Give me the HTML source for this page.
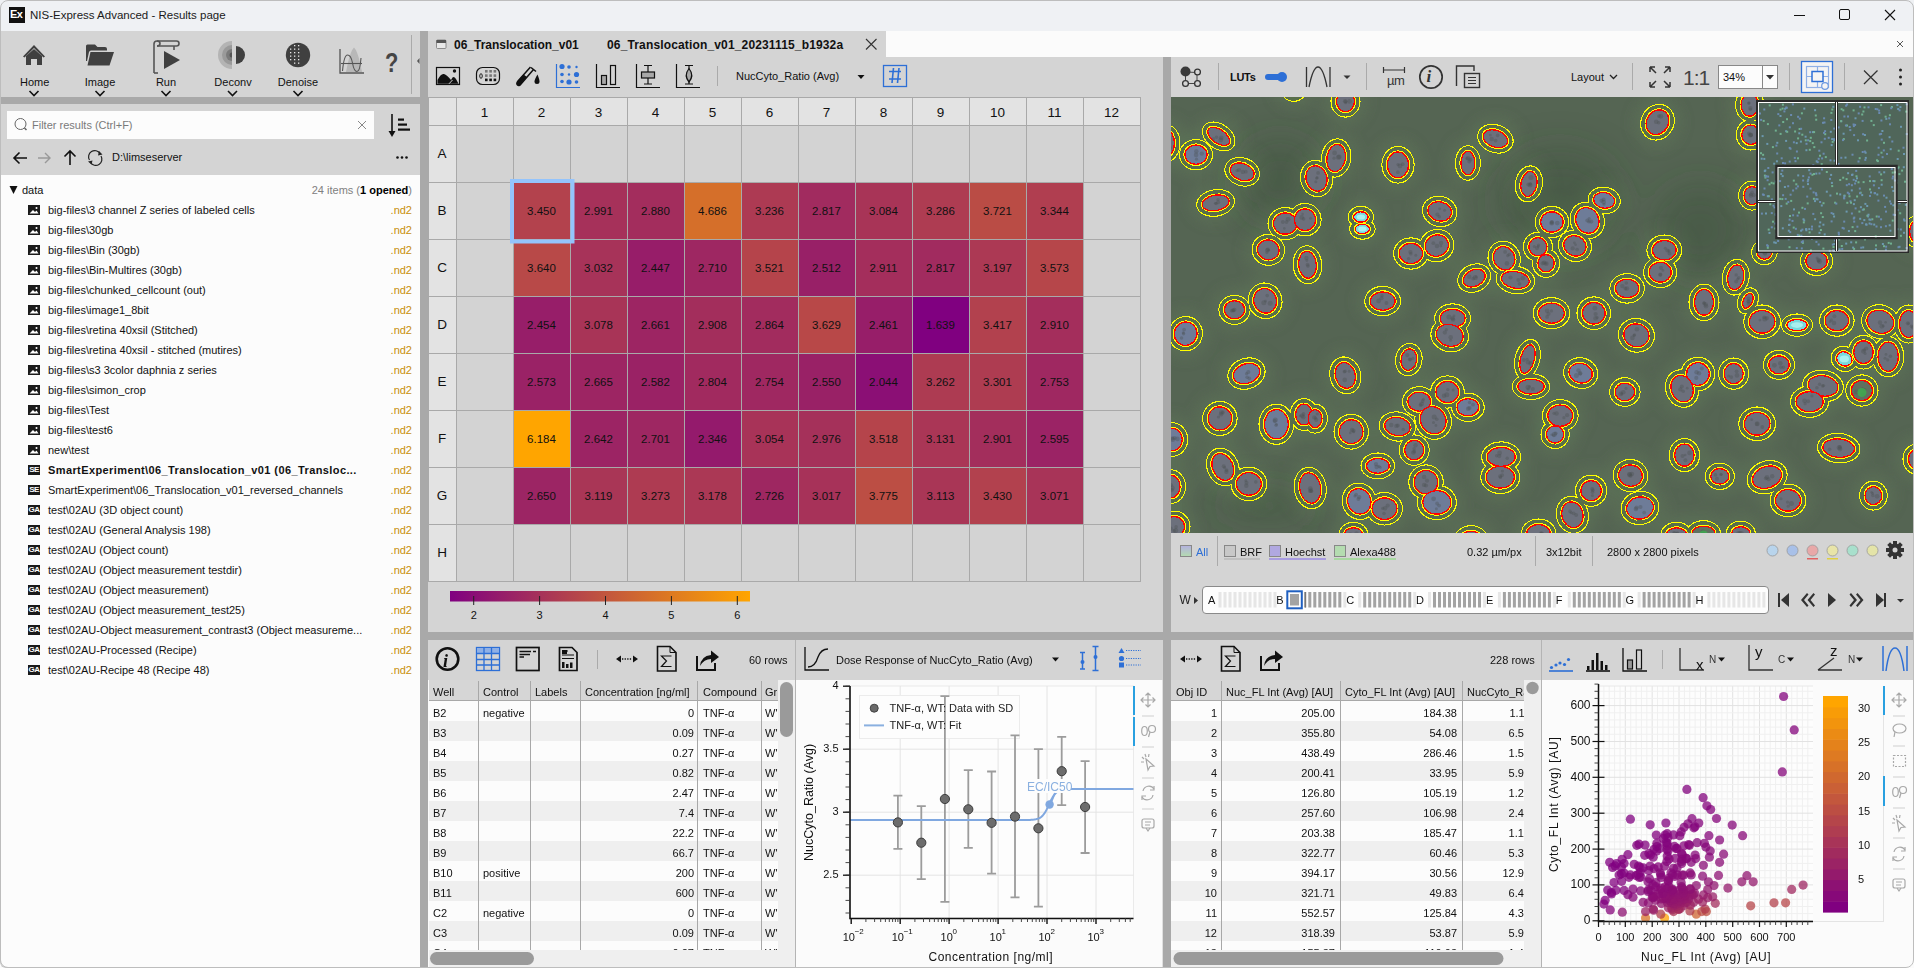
<!DOCTYPE html>
<html><head><meta charset="utf-8">
<style>
*{box-sizing:border-box}
html,body{margin:0;padding:0}
body{width:1914px;height:968px;overflow:hidden;position:relative;background:#fbfbfb;font-family:"Liberation Sans",sans-serif;font-size:11px;color:#000}
.a{position:absolute}
.t{position:absolute;white-space:pre;line-height:1}
.g{background:#d4d4d4}
.spl{background:#a9a9a9}
svg{position:absolute;overflow:visible}
</style></head><body>

<!-- TITLE BAR -->
<div class="a" style="left:0;top:0;width:1914px;height:31px;background:#eff1f4"></div>

<!-- LEFT PANEL -->
<div class="a g" style="left:0;top:31px;width:420px;height:66px"></div>
<div class="a spl" style="left:0;top:97px;width:420px;height:7px"></div>
<div class="a g" style="left:0;top:104px;width:420px;height:71px"></div>
<div class="a" style="left:7px;top:111px;width:367px;height:28px;background:#fcfcfc"></div>
<div class="a" style="left:0;top:175px;width:420px;height:793px;background:#fcfcfc;border-left:1px solid #c8c8c8;border-bottom:1px solid #c8c8c8;border-bottom-left-radius:6px"></div>

<!-- SPLITTERS -->
<div class="a spl" style="left:420px;top:31px;width:8px;height:937px"></div>
<div class="a spl" style="left:1163px;top:57px;width:8px;height:911px"></div>
<div class="a spl" style="left:428px;top:632px;width:1486px;height:8px"></div>

<!-- MIDDLE TOP PANEL -->
<div class="a" style="left:428px;top:31px;width:1486px;height:26px;background:#fbfbfb"></div>
<div class="a g" style="left:428px;top:31px;width:458px;height:26px"></div>
<div class="a g" style="left:428px;top:57px;width:735px;height:575px"></div>

<!-- RIGHT TOP PANEL -->
<div class="a g" style="left:1171px;top:57px;width:743px;height:575px"></div>
<div class="a" style="left:1171px;top:97px;width:742px;height:436px;background:#4a5a48"></div>

<!-- BOTTOM -->
<div class="a g" style="left:428px;top:640px;width:735px;height:40px"></div>
<div class="a g" style="left:1171px;top:640px;width:743px;height:40px"></div>
<div class="a" style="left:428px;top:680px;width:735px;height:288px;background:#fbfbfb"></div>
<div class="a" style="left:1171px;top:680px;width:743px;height:288px;background:#fbfbfb"></div>

<!-- TITLE CONTENT -->
<div class="a" style="left:9px;top:7px;width:16px;height:16px;background:#111"></div>
<div class="t" style="left:10px;top:9px;font-size:11px;font-weight:bold;color:#fff;letter-spacing:-0.5px">Ex</div>
<div class="t" style="left:30px;top:10px;font-size:11.5px;color:#1a1a1a">NIS-Express Advanced - Results page</div>
<svg style="left:0;top:0" width="1914" height="31">
 <line x1="1794" y1="15.5" x2="1805" y2="15.5" stroke="#111" stroke-width="1"/>
 <rect x="1839.5" y="9.5" width="10" height="10" rx="1.5" fill="none" stroke="#111" stroke-width="1"/>
 <path d="M1885 10 L1895 20 M1895 10 L1885 20" stroke="#111" stroke-width="1.1"/>
</svg>
<svg style="left:0;top:0" width="1914" height="60">
 <path d="M1897 41 L1903 47 M1903 41 L1897 47" stroke="#444" stroke-width="0.9"/>
</svg>

<!-- RIBBON ICONS -->
<svg style="left:0;top:31px" width="420" height="66">
 <g fill="#404040">
  <!-- home -->
  <path d="M23 25.5 L34 14 L45 25.5 L43.5 26.5 L34 17 L24.5 26.5 Z"/>
  <path d="M26 25 L34 18 L42 25 L42 34 L37 34 L37 28 L31 28 L31 34 L26 34 Z"/>
  <!-- folder -->
  <path d="M86 15 Q86 13.5 87.5 13.5 L95 13.5 L97.5 16 L105 16 Q107 16 107 18 L107 19.5 L91 19.5 Q89.5 19.5 89 21 L87 30 L86 30 Z"/>
  <path d="M90.5 21 L114 21 L109.5 34.5 L87.5 34.5 Z"/>
 </g>
 <!-- run -->
 <g fill="none" stroke="#555" stroke-width="1.6">
  <path d="M154 42 L154 13 Q154 10 157 10 L176.5 10 Q179 10 179 12.5 Q179 15 176.5 15 L157 15"/>
  <path d="M157 10 Q160 10 160 12.5 Q160 15 157 15"/>
  <path d="M154 42 L158 42"/>
  <path d="M174 15 L174 19"/>
 </g>
 <path d="M164 20 L180 29 L164 38 Z" fill="#404040"/>
 <!-- deconv left concentric -->
 <path d="M232 10 A14 14 0 0 0 232 38 Z" fill="#b4b4b4"/>
 <path d="M232 14 A10 10 0 0 0 232 34 Z" fill="#9a9a9a"/>
 <path d="M232 18 A6 6 0 0 0 232 30 Z" fill="#7a7a7a"/>
 <path d="M232 21.5 A2.5 2.5 0 0 0 232 26.5 Z" fill="#555"/>
 <path d="M236 15 A9 9 0 0 1 236 33 Z" fill="#404040"/>
 <!-- denoise -->
 <circle cx="298" cy="24" r="12.2" fill="#404040"/>
 <g fill="#e8e8e8">
  <rect x="294" y="14" width="1.3" height="1.3"/><rect x="298" y="14" width="1.3" height="1.3"/>
  <rect x="290" y="17.5" width="1.3" height="1.3"/><rect x="294" y="17.5" width="1.3" height="1.3"/><rect x="298" y="17.5" width="1.3" height="1.3"/>
  <rect x="290" y="21" width="1.3" height="1.3"/><rect x="294" y="21" width="1.3" height="1.3"/><rect x="298" y="21" width="1.3" height="1.3"/>
  <rect x="290" y="24.5" width="1.3" height="1.3"/><rect x="294" y="24.5" width="1.3" height="1.3"/><rect x="298" y="24.5" width="1.3" height="1.3"/>
  <rect x="290" y="28" width="1.3" height="1.3"/><rect x="294" y="28" width="1.3" height="1.3"/><rect x="298" y="28" width="1.3" height="1.3"/>
  <rect x="294" y="31.5" width="1.3" height="1.3"/><rect x="298" y="31.5" width="1.3" height="1.3"/>
 </g>
 <!-- chart -->
 <path d="M346 41 Q350 20 354 16.5 Q358 20 362 41 Z" fill="#b8b8b8"/>
 <path d="M340 18 L340 42 L364 42" fill="none" stroke="#555" stroke-width="1.3"/>
 <path d="M341 32.5 L362 32.5" stroke="#555" stroke-width="1.1"/>
 <path d="M342.5 40 Q344 24 347.5 24 Q351 24 352.5 32 Q354 40.5 357 40.5 Q360 40.5 361 27" fill="none" stroke="#555" stroke-width="1.1"/>
 <!-- ? -->
 <text x="385" y="41" font-family="Liberation Sans" font-weight="bold" font-size="28" fill="#454545" transform="translate(385 41) scale(0.78 1) translate(-385 -41)">?</text>
 <line x1="411.5" y1="4" x2="411.5" y2="63" stroke="#aaa" stroke-width="1"/>
 <path d="M419.5 27 L417 30 L419.5 33" fill="#555"/>
 <!-- chevrons -->
 <g fill="none" stroke="#111" stroke-width="1.6">
  <path d="M29.5 60 L34 64.5 L38.5 60"/>
  <path d="M95.5 60 L100 64.5 L104.5 60"/>
  <path d="M161.5 60 L166 64.5 L170.5 60"/>
  <path d="M228 60 L232.5 64.5 L237 60"/>
  <path d="M293.5 60 L298 64.5 L302.5 60"/>
 </g>
</svg>
<div class="t" style="left:20px;top:77px;width:28px;text-align:center;font-size:11px;color:#111">Home</div>
<div class="t" style="left:78px;top:77px;width:44px;text-align:center;font-size:11px;color:#111">Image</div>
<div class="t" style="left:146px;top:77px;width:40px;text-align:center;font-size:11px;color:#111">Run</div>
<div class="t" style="left:208px;top:77px;width:50px;text-align:center;font-size:11px;color:#111">Deconv</div>
<div class="t" style="left:270px;top:77px;width:56px;text-align:center;font-size:11px;color:#111">Denoise</div>

<!-- FILTER -->
<svg style="left:0;top:104px" width="420" height="71">
 <circle cx="20.5" cy="20" r="5.5" fill="none" stroke="#666" stroke-width="1"/>
 <path d="M24.5 24 L26.5 26" stroke="#666" stroke-width="1.6"/>
 <path d="M358 17 L366 25 M366 17 L358 25" stroke="#888" stroke-width="1"/>
 <!-- sort -->
 <path d="M392 10 L392 31" stroke="#111" stroke-width="1.6"/>
 <path d="M388.5 27 L392 33 L395.5 27 Z" fill="#111"/>
 <rect x="398" y="14.5" width="6" height="2.2" fill="#111"/>
 <rect x="398" y="19.5" width="9" height="2.2" fill="#111"/>
 <rect x="398" y="24.5" width="12" height="2.2" fill="#111"/>
 <!-- nav -->
 <g fill="none" stroke="#111" stroke-width="1.6">
  <path d="M27 54 L14 54 M19.5 48.5 L14 54 L19.5 59.5"/>
  <path d="M70 61 L70 47 M64.5 52.5 L70 47 L75.5 52.5"/>
 </g>
 <path d="M38 54 L50 54 M45 49 L50 54 L45 59" fill="none" stroke="#999" stroke-width="1.4"/>
 <g fill="none" stroke="#222" stroke-width="1.2">
  <path d="M89.5 56 A6 6 0 0 1 100 49.5"/>
  <path d="M101 52 A6 6 0 0 1 90.5 58.5"/>
 </g>
 <path d="M99 47 L102.5 50.5 L98 51.5 Z M91.5 60.5 L88 57.5 L92.5 56.5 Z" fill="#222"/>
 <circle cx="397.5" cy="53.5" r="1.3" fill="#111"/><circle cx="402" cy="53.5" r="1.3" fill="#111"/><circle cx="406.5" cy="53.5" r="1.3" fill="#111"/>
</svg>
<div class="t" style="left:32px;top:120px;font-size:11px;color:#7a7a7a">Filter results (Ctrl+F)</div>
<div class="t" style="left:112px;top:152px;font-size:11px;color:#111">D:\limseserver</div>

<!-- LIST -->
<svg style="left:0;top:0" width="420" height="700">
<path d="M9.5 186 L17.5 186 L13.5 194 Z" fill="#111"/>
<rect x="28" y="205" width="12" height="10" fill="#1a1a1a"/>
<path d="M29.5 213.5 L33 210 L35 212 L36.5 210.5 L38.5 213.5 Z" fill="#fff"/>
<circle cx="36.5" cy="208" r="1" fill="#fff"/>
<rect x="28" y="225" width="12" height="10" fill="#1a1a1a"/>
<path d="M29.5 233.5 L33 230 L35 232 L36.5 230.5 L38.5 233.5 Z" fill="#fff"/>
<circle cx="36.5" cy="228" r="1" fill="#fff"/>
<rect x="28" y="245" width="12" height="10" fill="#1a1a1a"/>
<path d="M29.5 253.5 L33 250 L35 252 L36.5 250.5 L38.5 253.5 Z" fill="#fff"/>
<circle cx="36.5" cy="248" r="1" fill="#fff"/>
<rect x="28" y="265" width="12" height="10" fill="#1a1a1a"/>
<path d="M29.5 273.5 L33 270 L35 272 L36.5 270.5 L38.5 273.5 Z" fill="#fff"/>
<circle cx="36.5" cy="268" r="1" fill="#fff"/>
<rect x="28" y="285" width="12" height="10" fill="#1a1a1a"/>
<path d="M29.5 293.5 L33 290 L35 292 L36.5 290.5 L38.5 293.5 Z" fill="#fff"/>
<circle cx="36.5" cy="288" r="1" fill="#fff"/>
<rect x="28" y="305" width="12" height="10" fill="#1a1a1a"/>
<path d="M29.5 313.5 L33 310 L35 312 L36.5 310.5 L38.5 313.5 Z" fill="#fff"/>
<circle cx="36.5" cy="308" r="1" fill="#fff"/>
<rect x="28" y="325" width="12" height="10" fill="#1a1a1a"/>
<path d="M29.5 333.5 L33 330 L35 332 L36.5 330.5 L38.5 333.5 Z" fill="#fff"/>
<circle cx="36.5" cy="328" r="1" fill="#fff"/>
<rect x="28" y="345" width="12" height="10" fill="#1a1a1a"/>
<path d="M29.5 353.5 L33 350 L35 352 L36.5 350.5 L38.5 353.5 Z" fill="#fff"/>
<circle cx="36.5" cy="348" r="1" fill="#fff"/>
<rect x="28" y="365" width="12" height="10" fill="#1a1a1a"/>
<path d="M29.5 373.5 L33 370 L35 372 L36.5 370.5 L38.5 373.5 Z" fill="#fff"/>
<circle cx="36.5" cy="368" r="1" fill="#fff"/>
<rect x="28" y="385" width="12" height="10" fill="#1a1a1a"/>
<path d="M29.5 393.5 L33 390 L35 392 L36.5 390.5 L38.5 393.5 Z" fill="#fff"/>
<circle cx="36.5" cy="388" r="1" fill="#fff"/>
<rect x="28" y="405" width="12" height="10" fill="#1a1a1a"/>
<path d="M29.5 413.5 L33 410 L35 412 L36.5 410.5 L38.5 413.5 Z" fill="#fff"/>
<circle cx="36.5" cy="408" r="1" fill="#fff"/>
<rect x="28" y="425" width="12" height="10" fill="#1a1a1a"/>
<path d="M29.5 433.5 L33 430 L35 432 L36.5 430.5 L38.5 433.5 Z" fill="#fff"/>
<circle cx="36.5" cy="428" r="1" fill="#fff"/>
<rect x="28" y="445" width="12" height="10" fill="#1a1a1a"/>
<path d="M29.5 453.5 L33 450 L35 452 L36.5 450.5 L38.5 453.5 Z" fill="#fff"/>
<circle cx="36.5" cy="448" r="1" fill="#fff"/>
<rect x="28" y="465" width="12" height="10" fill="#1a1a1a"/>
<rect x="28" y="485" width="12" height="10" fill="#1a1a1a"/>
<rect x="28" y="505" width="12" height="10" fill="#1a1a1a"/>
<rect x="28" y="525" width="12" height="10" fill="#1a1a1a"/>
<rect x="28" y="545" width="12" height="10" fill="#1a1a1a"/>
<rect x="28" y="565" width="12" height="10" fill="#1a1a1a"/>
<rect x="28" y="585" width="12" height="10" fill="#1a1a1a"/>
<rect x="28" y="605" width="12" height="10" fill="#1a1a1a"/>
<rect x="28" y="625" width="12" height="10" fill="#1a1a1a"/>
<rect x="28" y="645" width="12" height="10" fill="#1a1a1a"/>
<rect x="28" y="665" width="12" height="10" fill="#1a1a1a"/>
</svg>
<div class="t" style="left:22px;top:185px;font-size:11px;color:#111">data</div>
<div class="t" style="left:250px;top:184.5px;width:162px;text-align:right;font-size:11px;color:#808080">24 items (<b style="color:#000">1 opened</b>)</div>
<div class="t" style="left:48px;top:205px;color:#111">big-files\3 channel Z series of labeled cells</div>
<div class="t" style="left:370px;top:205px;width:42px;text-align:right;color:#c8900a">.nd2</div>
<div class="t" style="left:48px;top:225px;color:#111">big-files\30gb</div>
<div class="t" style="left:370px;top:225px;width:42px;text-align:right;color:#c8900a">.nd2</div>
<div class="t" style="left:48px;top:245px;color:#111">big-files\Bin (30gb)</div>
<div class="t" style="left:370px;top:245px;width:42px;text-align:right;color:#c8900a">.nd2</div>
<div class="t" style="left:48px;top:265px;color:#111">big-files\Bin-Multires (30gb)</div>
<div class="t" style="left:370px;top:265px;width:42px;text-align:right;color:#c8900a">.nd2</div>
<div class="t" style="left:48px;top:285px;color:#111">big-files\chunked_cellcount (out)</div>
<div class="t" style="left:370px;top:285px;width:42px;text-align:right;color:#c8900a">.nd2</div>
<div class="t" style="left:48px;top:305px;color:#111">big-files\image1_8bit</div>
<div class="t" style="left:370px;top:305px;width:42px;text-align:right;color:#c8900a">.nd2</div>
<div class="t" style="left:48px;top:325px;color:#111">big-files\retina 40xsil (Stitched)</div>
<div class="t" style="left:370px;top:325px;width:42px;text-align:right;color:#c8900a">.nd2</div>
<div class="t" style="left:48px;top:345px;color:#111">big-files\retina 40xsil - stitched (mutires)</div>
<div class="t" style="left:370px;top:345px;width:42px;text-align:right;color:#c8900a">.nd2</div>
<div class="t" style="left:48px;top:365px;color:#111">big-files\s3 3color daphnia z series</div>
<div class="t" style="left:370px;top:365px;width:42px;text-align:right;color:#c8900a">.nd2</div>
<div class="t" style="left:48px;top:385px;color:#111">big-files\simon_crop</div>
<div class="t" style="left:370px;top:385px;width:42px;text-align:right;color:#c8900a">.nd2</div>
<div class="t" style="left:48px;top:405px;color:#111">big-files\Test</div>
<div class="t" style="left:370px;top:405px;width:42px;text-align:right;color:#c8900a">.nd2</div>
<div class="t" style="left:48px;top:425px;color:#111">big-files\test6</div>
<div class="t" style="left:370px;top:425px;width:42px;text-align:right;color:#c8900a">.nd2</div>
<div class="t" style="left:48px;top:445px;color:#111">new\test</div>
<div class="t" style="left:370px;top:445px;width:42px;text-align:right;color:#c8900a">.nd2</div>
<div class="t" style="left:28px;top:466px;width:12px;text-align:center;font-size:8px;font-weight:bold;color:#fff;letter-spacing:-0.6px">SE</div>
<div class="t" style="left:48px;top:465px;font-weight:bold;color:#111;letter-spacing:0.4px">SmartExperiment\06_Translocation_v01 (06_Transloc...</div>
<div class="t" style="left:370px;top:465px;width:42px;text-align:right;color:#c8900a">.nd2</div>
<div class="t" style="left:28px;top:486px;width:12px;text-align:center;font-size:8px;font-weight:bold;color:#fff;letter-spacing:-0.6px">SE</div>
<div class="t" style="left:48px;top:485px;color:#111">SmartExperiment\06_Translocation_v01_reversed_channels</div>
<div class="t" style="left:370px;top:485px;width:42px;text-align:right;color:#c8900a">.nd2</div>
<div class="t" style="left:28px;top:506px;width:12px;text-align:center;font-size:8px;font-weight:bold;color:#fff;letter-spacing:-0.6px">GA</div>
<div class="t" style="left:48px;top:505px;color:#111">test\02AU (3D object count)</div>
<div class="t" style="left:370px;top:505px;width:42px;text-align:right;color:#c8900a">.nd2</div>
<div class="t" style="left:28px;top:526px;width:12px;text-align:center;font-size:8px;font-weight:bold;color:#fff;letter-spacing:-0.6px">GA</div>
<div class="t" style="left:48px;top:525px;color:#111">test\02AU (General Analysis 198)</div>
<div class="t" style="left:370px;top:525px;width:42px;text-align:right;color:#c8900a">.nd2</div>
<div class="t" style="left:28px;top:546px;width:12px;text-align:center;font-size:8px;font-weight:bold;color:#fff;letter-spacing:-0.6px">GA</div>
<div class="t" style="left:48px;top:545px;color:#111">test\02AU (Object count)</div>
<div class="t" style="left:370px;top:545px;width:42px;text-align:right;color:#c8900a">.nd2</div>
<div class="t" style="left:28px;top:566px;width:12px;text-align:center;font-size:8px;font-weight:bold;color:#fff;letter-spacing:-0.6px">GA</div>
<div class="t" style="left:48px;top:565px;color:#111">test\02AU (Object measurement testdir)</div>
<div class="t" style="left:370px;top:565px;width:42px;text-align:right;color:#c8900a">.nd2</div>
<div class="t" style="left:28px;top:586px;width:12px;text-align:center;font-size:8px;font-weight:bold;color:#fff;letter-spacing:-0.6px">GA</div>
<div class="t" style="left:48px;top:585px;color:#111">test\02AU (Object measurement)</div>
<div class="t" style="left:370px;top:585px;width:42px;text-align:right;color:#c8900a">.nd2</div>
<div class="t" style="left:28px;top:606px;width:12px;text-align:center;font-size:8px;font-weight:bold;color:#fff;letter-spacing:-0.6px">GA</div>
<div class="t" style="left:48px;top:605px;color:#111">test\02AU (Object measurement_test25)</div>
<div class="t" style="left:370px;top:605px;width:42px;text-align:right;color:#c8900a">.nd2</div>
<div class="t" style="left:28px;top:626px;width:12px;text-align:center;font-size:8px;font-weight:bold;color:#fff;letter-spacing:-0.6px">GA</div>
<div class="t" style="left:48px;top:625px;color:#111">test\02AU-Object measurement_contrast3 (Object measureme...</div>
<div class="t" style="left:370px;top:625px;width:42px;text-align:right;color:#c8900a">.nd2</div>
<div class="t" style="left:28px;top:646px;width:12px;text-align:center;font-size:8px;font-weight:bold;color:#fff;letter-spacing:-0.6px">GA</div>
<div class="t" style="left:48px;top:645px;color:#111">test\02AU-Processed (Recipe)</div>
<div class="t" style="left:370px;top:645px;width:42px;text-align:right;color:#c8900a">.nd2</div>
<div class="t" style="left:28px;top:666px;width:12px;text-align:center;font-size:8px;font-weight:bold;color:#fff;letter-spacing:-0.6px">GA</div>
<div class="t" style="left:48px;top:665px;color:#111">test\02AU-Recipe 48 (Recipe 48)</div>
<div class="t" style="left:370px;top:665px;width:42px;text-align:right;color:#c8900a">.nd2</div>
<!-- PLATE -->
<svg style="left:0;top:0" width="1170" height="100">
 <rect x="436.5" y="40" width="9.5" height="8.5" rx="1" fill="#e8e8e8" stroke="#777" stroke-width="0.8"/>
 <rect x="436.5" y="40" width="9.5" height="3" fill="#555"/>
 <path d="M866 39 L876.5 49.5 M876.5 39 L866 49.5" stroke="#333" stroke-width="1.1"/>
 <!-- toolbar icons -->
 <rect x="436.5" y="67.5" width="23" height="17" fill="none" stroke="#111" stroke-width="1.2"/>
 <path d="M437.5 83.8 L437.5 80 Q441 73 444 74 Q447 75 451 80 L452.5 77.5 Q454 76 456 79 L458.5 83.8 Z" fill="#111"/>
 <path d="M449 83.8 L452.5 80" stroke="#d4d4d4" stroke-width="1"/>
 <circle cx="454.5" cy="71" r="1.7" fill="#111"/>
 <rect x="476.5" y="67.5" width="23" height="17" rx="6" fill="none" stroke="#111" stroke-width="1.2"/>
 <ellipse cx="481" cy="76" rx="1.3" ry="2.3" fill="none" stroke="#111" stroke-width="0.9"/>
 <g fill="#777">
 <rect x="485" y="70" width="2.6" height="2.6"/><rect x="489.3" y="70" width="2.6" height="2.6"/><rect x="493.6" y="70" width="2.6" height="2.6"/>
 <rect x="485" y="74.3" width="2.6" height="2.6"/><rect x="489.3" y="74.3" width="2.6" height="2.6"/><rect x="493.6" y="74.3" width="2.6" height="2.6"/>
 </g>
 <g fill="#111">
 <rect x="485" y="78.6" width="2.6" height="2.6"/><rect x="489.3" y="78.6" width="2.6" height="2.6"/><rect x="493.6" y="78.6" width="2.6" height="2.6"/>
 </g>
 <path d="M531 67.5 L536 71.5" stroke="#111" stroke-width="1.6"/>
 <path d="M533.5 69.5 L521 84 Q519 86.5 517.5 85 Q516 83.5 518 81 L530.5 67" fill="none" stroke="#111" stroke-width="1.5"/>
 <path d="M527 77 L521 84 Q519 86.5 517.5 85 Q516 83.5 518 81 L523.5 74.5 Z" fill="#111"/>
 <path d="M537.5 74.5 Q534.5 79.5 534.5 81.5 Q534.5 84 537 84 Q539.5 84 539.5 81.5 Q539.5 79.5 537.5 74.5 Z" fill="#111"/>
 <g fill="#2d6fd6">
  <circle cx="562" cy="66.5" r="2.6"/><circle cx="569" cy="67" r="1.8"/><circle cx="576.5" cy="67" r="1.2"/>
  <circle cx="562" cy="74.5" r="1.8"/><circle cx="569" cy="74.5" r="1.2"/><circle cx="576.5" cy="74.5" r="2.6"/>
  <circle cx="562" cy="81.5" r="1.8"/><circle cx="569" cy="82" r="2.6"/><circle cx="576.5" cy="82" r="1.8"/>
 </g>
 <path d="M556.5 64 L556.5 87.5 L580 87.5" fill="none" stroke="#2d6fd6" stroke-width="1.2"/>
 <path d="M596.5 64 L596.5 87.5 L620 87.5" fill="none" stroke="#111" stroke-width="1.2"/>
 <rect x="601.5" y="75.5" width="5" height="9" fill="#a8a8a8" stroke="#111" stroke-width="1.2"/>
 <rect x="610.5" y="65.5" width="5" height="19" fill="none" stroke="#111" stroke-width="1.2"/>
 <path d="M636.5 64 L636.5 87.5 L660 87.5" fill="none" stroke="#111" stroke-width="1.2"/>
 <path d="M644 65.5 L652 65.5 M648 65.5 L648 84 M644 84 L652 84" stroke="#111" stroke-width="1.2"/>
 <rect x="641.5" y="72" width="13" height="6" fill="#a8a8a8" stroke="#111" stroke-width="1.2"/>
 <path d="M676.5 64 L676.5 87.5 L700 87.5" fill="none" stroke="#111" stroke-width="1.2"/>
 <path d="M685 65.5 L693 65.5 M685 84 L693 84 M689 65.5 L689 84" stroke="#111" stroke-width="1.2"/>
 <path d="M689 68.5 Q683.5 75.5 689 82 Q694.5 75.5 689 68.5 Z" fill="#a8a8a8" stroke="#111" stroke-width="1.2"/>
 <line x1="717.5" y1="66" x2="717.5" y2="86" stroke="#aaa"/>
 <path d="M857.5 75 L864.5 75 L861 79 Z" fill="#111"/>
 <rect x="883.5" y="65.5" width="23" height="21" fill="none" stroke="#2d6fd6" stroke-width="1.3"/>
 <path d="M889 71.5 L901 71.5 M889 79 L901 79 M893.5 68 L892 83 M899 68 L897.5 83" stroke="#2d6fd6" stroke-width="1.6"/>
</svg>
<div class="t" style="left:454px;top:39px;font-size:12px;font-weight:bold;color:#111">06_Translocation_v01</div>
<div class="t" style="left:607px;top:39px;font-size:12px;font-weight:bold;color:#111;letter-spacing:0.15px">06_Translocation_v01_20231115_b1932a</div>
<div class="t" style="left:736px;top:71px;font-size:11px;color:#111">NucCyto_Ratio (Avg)</div>

<svg style="left:0;top:0" width="1170" height="640">
<rect x="428" y="97" width="712" height="28" fill="#e3e3e3"/>
<rect x="428" y="97" width="28" height="484" fill="#e3e3e3"/>
<rect x="456" y="125" width="684" height="456" fill="#d3d3d3"/>
<rect x="513" y="182" width="57" height="57" fill="#b3424d"/>
<rect x="570" y="182" width="57" height="57" fill="#a6315a"/>
<rect x="627" y="182" width="57" height="57" fill="#a32d5d"/>
<rect x="684" y="182" width="57" height="57" fill="#d56f2a"/>
<rect x="741" y="182" width="57" height="57" fill="#ad3a53"/>
<rect x="798" y="182" width="57" height="57" fill="#a12b5f"/>
<rect x="855" y="182" width="57" height="57" fill="#a83457"/>
<rect x="912" y="182" width="57" height="57" fill="#ae3c52"/>
<rect x="969" y="182" width="57" height="57" fill="#ba4c45"/>
<rect x="1026" y="182" width="57" height="57" fill="#b03e50"/>
<rect x="513" y="239" width="57" height="57" fill="#b84948"/>
<rect x="570" y="239" width="57" height="57" fill="#a73359"/>
<rect x="627" y="239" width="57" height="57" fill="#971d69"/>
<rect x="684" y="239" width="57" height="57" fill="#9e2762"/>
<rect x="741" y="239" width="57" height="57" fill="#b5444b"/>
<rect x="798" y="239" width="57" height="57" fill="#982067"/>
<rect x="855" y="239" width="57" height="57" fill="#a42e5c"/>
<rect x="912" y="239" width="57" height="57" fill="#a12b5f"/>
<rect x="969" y="239" width="57" height="57" fill="#ac3954"/>
<rect x="1026" y="239" width="57" height="57" fill="#b6464a"/>
<rect x="513" y="296" width="57" height="57" fill="#971e69"/>
<rect x="570" y="296" width="57" height="57" fill="#a83457"/>
<rect x="627" y="296" width="57" height="57" fill="#9d2563"/>
<rect x="684" y="296" width="57" height="57" fill="#a32e5c"/>
<rect x="741" y="296" width="57" height="57" fill="#a22c5e"/>
<rect x="798" y="296" width="57" height="57" fill="#b84848"/>
<rect x="855" y="296" width="57" height="57" fill="#971e69"/>
<rect x="912" y="296" width="57" height="57" fill="#800080"/>
<rect x="969" y="296" width="57" height="57" fill="#b2414e"/>
<rect x="1026" y="296" width="57" height="57" fill="#a42e5c"/>
<rect x="513" y="353" width="57" height="57" fill="#9a2266"/>
<rect x="570" y="353" width="57" height="57" fill="#9d2563"/>
<rect x="627" y="353" width="57" height="57" fill="#9a2265"/>
<rect x="684" y="353" width="57" height="57" fill="#a12a5f"/>
<rect x="741" y="353" width="57" height="57" fill="#9f2861"/>
<rect x="798" y="353" width="57" height="57" fill="#992166"/>
<rect x="855" y="353" width="57" height="57" fill="#8b0f75"/>
<rect x="912" y="353" width="57" height="57" fill="#ad3b52"/>
<rect x="969" y="353" width="57" height="57" fill="#ae3c51"/>
<rect x="1026" y="353" width="57" height="57" fill="#9f2861"/>
<rect x="513" y="410" width="57" height="57" fill="#ffa500"/>
<rect x="570" y="410" width="57" height="57" fill="#9c2464"/>
<rect x="627" y="410" width="57" height="57" fill="#9e2762"/>
<rect x="684" y="410" width="57" height="57" fill="#941a6c"/>
<rect x="741" y="410" width="57" height="57" fill="#a83358"/>
<rect x="798" y="410" width="57" height="57" fill="#a5315a"/>
<rect x="855" y="410" width="57" height="57" fill="#b5444b"/>
<rect x="912" y="410" width="57" height="57" fill="#aa3656"/>
<rect x="969" y="410" width="57" height="57" fill="#a32e5c"/>
<rect x="1026" y="410" width="57" height="57" fill="#9b2365"/>
<rect x="513" y="467" width="57" height="57" fill="#9c2564"/>
<rect x="570" y="467" width="57" height="57" fill="#a93656"/>
<rect x="627" y="467" width="57" height="57" fill="#ae3b52"/>
<rect x="684" y="467" width="57" height="57" fill="#ab3855"/>
<rect x="741" y="467" width="57" height="57" fill="#9e2761"/>
<rect x="798" y="467" width="57" height="57" fill="#a73259"/>
<rect x="855" y="467" width="57" height="57" fill="#bc4e44"/>
<rect x="912" y="467" width="57" height="57" fill="#a93656"/>
<rect x="969" y="467" width="57" height="57" fill="#b2414e"/>
<rect x="1026" y="467" width="57" height="57" fill="#a83458"/>
<rect x="428" y="97" width="1" height="485" fill="#a9a9a9"/>
<rect x="456" y="97" width="1" height="485" fill="#a9a9a9"/>
<rect x="513" y="97" width="1" height="485" fill="#a9a9a9"/>
<rect x="570" y="97" width="1" height="485" fill="#a9a9a9"/>
<rect x="627" y="97" width="1" height="485" fill="#a9a9a9"/>
<rect x="684" y="97" width="1" height="485" fill="#a9a9a9"/>
<rect x="741" y="97" width="1" height="485" fill="#a9a9a9"/>
<rect x="798" y="97" width="1" height="485" fill="#a9a9a9"/>
<rect x="855" y="97" width="1" height="485" fill="#a9a9a9"/>
<rect x="912" y="97" width="1" height="485" fill="#a9a9a9"/>
<rect x="969" y="97" width="1" height="485" fill="#a9a9a9"/>
<rect x="1026" y="97" width="1" height="485" fill="#a9a9a9"/>
<rect x="1083" y="97" width="1" height="485" fill="#a9a9a9"/>
<rect x="1140" y="97" width="1" height="485" fill="#a9a9a9"/>
<rect x="428" y="97" width="713" height="1" fill="#a9a9a9"/>
<rect x="428" y="125" width="713" height="1" fill="#a9a9a9"/>
<rect x="428" y="182" width="713" height="1" fill="#a9a9a9"/>
<rect x="428" y="239" width="713" height="1" fill="#a9a9a9"/>
<rect x="428" y="296" width="713" height="1" fill="#a9a9a9"/>
<rect x="428" y="353" width="713" height="1" fill="#a9a9a9"/>
<rect x="428" y="410" width="713" height="1" fill="#a9a9a9"/>
<rect x="428" y="467" width="713" height="1" fill="#a9a9a9"/>
<rect x="428" y="524" width="713" height="1" fill="#a9a9a9"/>
<rect x="428" y="581" width="713" height="1" fill="#a9a9a9"/>
<rect x="512" y="181" width="60.5" height="60.5" fill="none" stroke="#94c4fc" stroke-width="4"/>
<defs><linearGradient id="cbg" x1="0" x2="1" y1="0" y2="0"><stop offset="0" stop-color="#800080"/><stop offset="1" stop-color="#ffa500"/></linearGradient></defs>
<rect x="450" y="591" width="300" height="10.5" fill="url(#cbg)"/>
<rect x="473.2" y="596" width="1" height="9" fill="#222"/>
<rect x="539.1" y="596" width="1" height="9" fill="#222"/>
<rect x="605.0" y="596" width="1" height="9" fill="#222"/>
<rect x="670.9" y="596" width="1" height="9" fill="#222"/>
<rect x="736.8" y="596" width="1" height="9" fill="#222"/>
</svg>
<div class="t" style="left:464.5px;top:105.5px;width:40px;text-align:center;font-size:13.5px;color:#111">1</div>
<div class="t" style="left:521.5px;top:105.5px;width:40px;text-align:center;font-size:13.5px;color:#111">2</div>
<div class="t" style="left:578.5px;top:105.5px;width:40px;text-align:center;font-size:13.5px;color:#111">3</div>
<div class="t" style="left:635.5px;top:105.5px;width:40px;text-align:center;font-size:13.5px;color:#111">4</div>
<div class="t" style="left:692.5px;top:105.5px;width:40px;text-align:center;font-size:13.5px;color:#111">5</div>
<div class="t" style="left:749.5px;top:105.5px;width:40px;text-align:center;font-size:13.5px;color:#111">6</div>
<div class="t" style="left:806.5px;top:105.5px;width:40px;text-align:center;font-size:13.5px;color:#111">7</div>
<div class="t" style="left:863.5px;top:105.5px;width:40px;text-align:center;font-size:13.5px;color:#111">8</div>
<div class="t" style="left:920.5px;top:105.5px;width:40px;text-align:center;font-size:13.5px;color:#111">9</div>
<div class="t" style="left:977.5px;top:105.5px;width:40px;text-align:center;font-size:13.5px;color:#111">10</div>
<div class="t" style="left:1034.5px;top:105.5px;width:40px;text-align:center;font-size:13.5px;color:#111">11</div>
<div class="t" style="left:1091.5px;top:105.5px;width:40px;text-align:center;font-size:13.5px;color:#111">12</div>
<div class="t" style="left:428px;top:146.5px;width:28px;text-align:center;font-size:13.5px;color:#111">A</div>
<div class="t" style="left:428px;top:203.5px;width:28px;text-align:center;font-size:13.5px;color:#111">B</div>
<div class="t" style="left:428px;top:260.5px;width:28px;text-align:center;font-size:13.5px;color:#111">C</div>
<div class="t" style="left:428px;top:317.5px;width:28px;text-align:center;font-size:13.5px;color:#111">D</div>
<div class="t" style="left:428px;top:374.5px;width:28px;text-align:center;font-size:13.5px;color:#111">E</div>
<div class="t" style="left:428px;top:431.5px;width:28px;text-align:center;font-size:13.5px;color:#111">F</div>
<div class="t" style="left:428px;top:488.5px;width:28px;text-align:center;font-size:13.5px;color:#111">G</div>
<div class="t" style="left:428px;top:545.5px;width:28px;text-align:center;font-size:13.5px;color:#111">H</div>
<div class="t" style="left:516.5px;top:206.0px;width:50px;text-align:center;font-size:11.5px;color:#111">3.450</div>
<div class="t" style="left:573.5px;top:206.0px;width:50px;text-align:center;font-size:11.5px;color:#111">2.991</div>
<div class="t" style="left:630.5px;top:206.0px;width:50px;text-align:center;font-size:11.5px;color:#111">2.880</div>
<div class="t" style="left:687.5px;top:206.0px;width:50px;text-align:center;font-size:11.5px;color:#111">4.686</div>
<div class="t" style="left:744.5px;top:206.0px;width:50px;text-align:center;font-size:11.5px;color:#111">3.236</div>
<div class="t" style="left:801.5px;top:206.0px;width:50px;text-align:center;font-size:11.5px;color:#111">2.817</div>
<div class="t" style="left:858.5px;top:206.0px;width:50px;text-align:center;font-size:11.5px;color:#111">3.084</div>
<div class="t" style="left:915.5px;top:206.0px;width:50px;text-align:center;font-size:11.5px;color:#111">3.286</div>
<div class="t" style="left:972.5px;top:206.0px;width:50px;text-align:center;font-size:11.5px;color:#111">3.721</div>
<div class="t" style="left:1029.5px;top:206.0px;width:50px;text-align:center;font-size:11.5px;color:#111">3.344</div>
<div class="t" style="left:516.5px;top:263.0px;width:50px;text-align:center;font-size:11.5px;color:#111">3.640</div>
<div class="t" style="left:573.5px;top:263.0px;width:50px;text-align:center;font-size:11.5px;color:#111">3.032</div>
<div class="t" style="left:630.5px;top:263.0px;width:50px;text-align:center;font-size:11.5px;color:#111">2.447</div>
<div class="t" style="left:687.5px;top:263.0px;width:50px;text-align:center;font-size:11.5px;color:#111">2.710</div>
<div class="t" style="left:744.5px;top:263.0px;width:50px;text-align:center;font-size:11.5px;color:#111">3.521</div>
<div class="t" style="left:801.5px;top:263.0px;width:50px;text-align:center;font-size:11.5px;color:#111">2.512</div>
<div class="t" style="left:858.5px;top:263.0px;width:50px;text-align:center;font-size:11.5px;color:#111">2.911</div>
<div class="t" style="left:915.5px;top:263.0px;width:50px;text-align:center;font-size:11.5px;color:#111">2.817</div>
<div class="t" style="left:972.5px;top:263.0px;width:50px;text-align:center;font-size:11.5px;color:#111">3.197</div>
<div class="t" style="left:1029.5px;top:263.0px;width:50px;text-align:center;font-size:11.5px;color:#111">3.573</div>
<div class="t" style="left:516.5px;top:320.0px;width:50px;text-align:center;font-size:11.5px;color:#111">2.454</div>
<div class="t" style="left:573.5px;top:320.0px;width:50px;text-align:center;font-size:11.5px;color:#111">3.078</div>
<div class="t" style="left:630.5px;top:320.0px;width:50px;text-align:center;font-size:11.5px;color:#111">2.661</div>
<div class="t" style="left:687.5px;top:320.0px;width:50px;text-align:center;font-size:11.5px;color:#111">2.908</div>
<div class="t" style="left:744.5px;top:320.0px;width:50px;text-align:center;font-size:11.5px;color:#111">2.864</div>
<div class="t" style="left:801.5px;top:320.0px;width:50px;text-align:center;font-size:11.5px;color:#111">3.629</div>
<div class="t" style="left:858.5px;top:320.0px;width:50px;text-align:center;font-size:11.5px;color:#111">2.461</div>
<div class="t" style="left:915.5px;top:320.0px;width:50px;text-align:center;font-size:11.5px;color:#111">1.639</div>
<div class="t" style="left:972.5px;top:320.0px;width:50px;text-align:center;font-size:11.5px;color:#111">3.417</div>
<div class="t" style="left:1029.5px;top:320.0px;width:50px;text-align:center;font-size:11.5px;color:#111">2.910</div>
<div class="t" style="left:516.5px;top:377.0px;width:50px;text-align:center;font-size:11.5px;color:#111">2.573</div>
<div class="t" style="left:573.5px;top:377.0px;width:50px;text-align:center;font-size:11.5px;color:#111">2.665</div>
<div class="t" style="left:630.5px;top:377.0px;width:50px;text-align:center;font-size:11.5px;color:#111">2.582</div>
<div class="t" style="left:687.5px;top:377.0px;width:50px;text-align:center;font-size:11.5px;color:#111">2.804</div>
<div class="t" style="left:744.5px;top:377.0px;width:50px;text-align:center;font-size:11.5px;color:#111">2.754</div>
<div class="t" style="left:801.5px;top:377.0px;width:50px;text-align:center;font-size:11.5px;color:#111">2.550</div>
<div class="t" style="left:858.5px;top:377.0px;width:50px;text-align:center;font-size:11.5px;color:#111">2.044</div>
<div class="t" style="left:915.5px;top:377.0px;width:50px;text-align:center;font-size:11.5px;color:#111">3.262</div>
<div class="t" style="left:972.5px;top:377.0px;width:50px;text-align:center;font-size:11.5px;color:#111">3.301</div>
<div class="t" style="left:1029.5px;top:377.0px;width:50px;text-align:center;font-size:11.5px;color:#111">2.753</div>
<div class="t" style="left:516.5px;top:434.0px;width:50px;text-align:center;font-size:11.5px;color:#111">6.184</div>
<div class="t" style="left:573.5px;top:434.0px;width:50px;text-align:center;font-size:11.5px;color:#111">2.642</div>
<div class="t" style="left:630.5px;top:434.0px;width:50px;text-align:center;font-size:11.5px;color:#111">2.701</div>
<div class="t" style="left:687.5px;top:434.0px;width:50px;text-align:center;font-size:11.5px;color:#111">2.346</div>
<div class="t" style="left:744.5px;top:434.0px;width:50px;text-align:center;font-size:11.5px;color:#111">3.054</div>
<div class="t" style="left:801.5px;top:434.0px;width:50px;text-align:center;font-size:11.5px;color:#111">2.976</div>
<div class="t" style="left:858.5px;top:434.0px;width:50px;text-align:center;font-size:11.5px;color:#111">3.518</div>
<div class="t" style="left:915.5px;top:434.0px;width:50px;text-align:center;font-size:11.5px;color:#111">3.131</div>
<div class="t" style="left:972.5px;top:434.0px;width:50px;text-align:center;font-size:11.5px;color:#111">2.901</div>
<div class="t" style="left:1029.5px;top:434.0px;width:50px;text-align:center;font-size:11.5px;color:#111">2.595</div>
<div class="t" style="left:516.5px;top:491.0px;width:50px;text-align:center;font-size:11.5px;color:#111">2.650</div>
<div class="t" style="left:573.5px;top:491.0px;width:50px;text-align:center;font-size:11.5px;color:#111">3.119</div>
<div class="t" style="left:630.5px;top:491.0px;width:50px;text-align:center;font-size:11.5px;color:#111">3.273</div>
<div class="t" style="left:687.5px;top:491.0px;width:50px;text-align:center;font-size:11.5px;color:#111">3.178</div>
<div class="t" style="left:744.5px;top:491.0px;width:50px;text-align:center;font-size:11.5px;color:#111">2.726</div>
<div class="t" style="left:801.5px;top:491.0px;width:50px;text-align:center;font-size:11.5px;color:#111">3.017</div>
<div class="t" style="left:858.5px;top:491.0px;width:50px;text-align:center;font-size:11.5px;color:#111">3.775</div>
<div class="t" style="left:915.5px;top:491.0px;width:50px;text-align:center;font-size:11.5px;color:#111">3.113</div>
<div class="t" style="left:972.5px;top:491.0px;width:50px;text-align:center;font-size:11.5px;color:#111">3.430</div>
<div class="t" style="left:1029.5px;top:491.0px;width:50px;text-align:center;font-size:11.5px;color:#111">3.071</div>
<div class="t" style="left:463.7px;top:610px;width:20px;text-align:center;font-size:11px;color:#111">2</div>
<div class="t" style="left:529.6px;top:610px;width:20px;text-align:center;font-size:11px;color:#111">3</div>
<div class="t" style="left:595.5px;top:610px;width:20px;text-align:center;font-size:11px;color:#111">4</div>
<div class="t" style="left:661.4px;top:610px;width:20px;text-align:center;font-size:11px;color:#111">5</div>
<div class="t" style="left:727.3px;top:610px;width:20px;text-align:center;font-size:11px;color:#111">6</div>
<!-- IMAGE PANEL TOOLBAR -->
<svg style="left:0;top:0" width="1914" height="100">
 <path d="M1185.5 72 L1197 72.5 M1185.5 72 L1185.5 83.5 L1197 83.5 L1197 72.5" stroke="#444" stroke-width="1" fill="none"/>
 <circle cx="1185.5" cy="71.5" r="5" fill="#3a3a3a"/>
 <circle cx="1197.5" cy="72" r="2.9" fill="#d4d4d4" stroke="#333" stroke-width="1.3"/>
 <circle cx="1185.5" cy="83.5" r="2.9" fill="#d4d4d4" stroke="#333" stroke-width="1.3"/>
 <circle cx="1197.5" cy="83.5" r="2.9" fill="#d4d4d4" stroke="#333" stroke-width="1.3"/>
 <line x1="1218.5" y1="63" x2="1218.5" y2="90" stroke="#aaa"/>
 <line x1="1268" y1="77" x2="1280" y2="77" stroke="#2d6fd6" stroke-width="6" stroke-linecap="round"/>
 <circle cx="1282" cy="77" r="5" fill="#2d6fd6"/>
 <path d="M1306.5 67 L1306.5 87 M1330 67 L1330 87" stroke="#333" stroke-width="1.3"/>
 <path d="M1309 87 Q1313 67 1318 67 Q1323 67 1327 87" fill="none" stroke="#333" stroke-width="1.3"/>
 <path d="M1343.5 75.5 L1350.5 75.5 L1347 79 Z" fill="#333"/>
 <line x1="1366.5" y1="63" x2="1366.5" y2="90" stroke="#aaa"/>
 <path d="M1383.5 67 L1383.5 73 M1404.5 67 L1404.5 73 M1383.5 70 L1404.5 70" stroke="#333" stroke-width="1.2"/>
 <circle cx="1431" cy="77" r="11.2" fill="none" stroke="#333" stroke-width="1.7"/>
 <path d="M1456.5 86 L1456.5 66 L1474 66 L1474 71" fill="none" stroke="#333" stroke-width="1.4"/>
 <rect x="1464.5" y="73.5" width="15" height="14" fill="#d4d4d4" stroke="#333" stroke-width="1.4"/>
 <path d="M1468 77.5 L1476 77.5 M1468 80.5 L1476 80.5 M1468 83.5 L1476 83.5" stroke="#333" stroke-width="1"/>
 <path d="M1610 75 L1613.5 78.5 L1617 75" fill="none" stroke="#222" stroke-width="1.3"/>
 <line x1="1632.5" y1="63" x2="1632.5" y2="90" stroke="#aaa"/>
 <g stroke="#333" stroke-width="1.5" fill="none">
  <path d="M1650 67 L1656 73 M1650 67 L1650 72 M1650 67 L1655 67"/>
  <path d="M1670 67 L1664 73 M1670 67 L1670 72 M1670 67 L1665 67"/>
  <path d="M1650 87 L1656 81 M1650 87 L1650 82 M1650 87 L1655 87"/>
  <path d="M1670 87 L1664 81 M1670 87 L1670 82 M1670 87 L1665 87"/>
 </g>
 <rect x="1718.5" y="65.5" width="59" height="23" fill="#fcfcfc" stroke="#888" stroke-width="1"/>
 <line x1="1762.5" y1="65.5" x2="1762.5" y2="88.5" stroke="#888"/>
 <path d="M1766 75 L1774 75 L1770 79.5 Z" fill="#333"/>
 <line x1="1789.5" y1="63" x2="1789.5" y2="90" stroke="#aaa"/>
 <rect x="1801.5" y="61.5" width="31" height="31" fill="#f4f4f4" stroke="#2d6fd6" stroke-width="1.3"/>
 <g stroke="#8fb0e6" stroke-width="1.2" fill="none">
  <rect x="1806.5" y="66.5" width="22" height="21"/>
  <path d="M1817.5 66.5 L1817.5 87.5 M1806.5 76.5 L1828.5 76.5"/>
 </g>
 <rect x="1812" y="71.5" width="11" height="10" fill="#f4f4f4" stroke="#2d6fd6" stroke-width="1.5"/>
 <circle cx="1825" cy="86" r="3.3" fill="#f4f4f4" stroke="#6f9be0" stroke-width="1.2"/>
 <line x1="1844.5" y1="63" x2="1844.5" y2="90" stroke="#aaa"/>
 <path d="M1864 70.5 L1877.5 84 M1877.5 70.5 L1864 84" stroke="#333" stroke-width="1.3"/>
 <circle cx="1900.5" cy="70" r="1.5" fill="#222"/><circle cx="1900.5" cy="77" r="1.5" fill="#222"/><circle cx="1900.5" cy="84" r="1.5" fill="#222"/>
</svg>
<div class="t" style="left:1230px;top:72px;font-size:11px;font-weight:bold;color:#111;letter-spacing:-0.3px">LUTs</div>
<div class="t" style="left:1387px;top:74px;font-size:13px;color:#333;letter-spacing:-0.5px">µm</div>
<div class="t" style="left:1426.5px;top:68px;font-size:17px;font-weight:bold;font-style:italic;font-family:'Liberation Serif',serif;color:#333">i</div>
<div class="t" style="left:1571px;top:72px;font-size:11px;color:#111">Layout</div>
<div class="t" style="left:1683px;top:67px;font-size:21px;color:#444;letter-spacing:-1px">1:1</div>
<div class="t" style="left:1723px;top:72px;font-size:11px;color:#111">34%</div>

<svg style="left:1171px;top:97px" width="742" height="436" viewBox="1171 97 742 436">
<defs>
<filter id="bl" x="-50%" y="-50%" width="200%" height="200%"><feGaussianBlur stdDeviation="18"/></filter>
<filter id="bl2" x="-50%" y="-50%" width="200%" height="200%"><feGaussianBlur stdDeviation="6"/></filter>
<clipPath id="imclip"><rect x="1171" y="97" width="742" height="436"/></clipPath>
</defs>
<g clip-path="url(#imclip)">
<rect x="1171" y="97" width="742" height="436" fill="#556553"/>
<g filter="url(#bl2)"><ellipse cx="1293.7" cy="90.2" rx="20.8" ry="19.6" fill="#607858" opacity="0.4"/><ellipse cx="1345.5" cy="101.5" rx="23.0" ry="24.1" fill="#607858" opacity="0.4"/><ellipse cx="1167.6" cy="143.2" rx="20.8" ry="26.4" fill="#607858" opacity="0.4"/><ellipse cx="1196.0" cy="154.7" rx="25.0" ry="23.7" fill="#607858" opacity="0.4"/><ellipse cx="1218.7" cy="136.4" rx="26.4" ry="20.8" fill="#607858" opacity="0.4"/><ellipse cx="1242.2" cy="171.8" rx="26.2" ry="22.3" fill="#607858" opacity="0.4"/><ellipse cx="1215.6" cy="202.9" rx="27.5" ry="21.7" fill="#607858" opacity="0.4"/><ellipse cx="1336.1" cy="158.0" rx="23.2" ry="27.7" fill="#607858" opacity="0.4"/><ellipse cx="1316.5" cy="178.5" rx="24.4" ry="26.8" fill="#607858" opacity="0.4"/><ellipse cx="1398.0" cy="164.8" rx="24.6" ry="26.8" fill="#607858" opacity="0.4"/><ellipse cx="1285.2" cy="223.6" rx="25.7" ry="24.6" fill="#607858" opacity="0.4"/><ellipse cx="1305.0" cy="219.7" rx="24.6" ry="24.8" fill="#607858" opacity="0.4"/><ellipse cx="1360.9" cy="217.0" rx="21.2" ry="19.2" fill="#607858" opacity="0.4"/><ellipse cx="1362.4" cy="229.0" rx="21.2" ry="18.7" fill="#607858" opacity="0.4"/><ellipse cx="1268.3" cy="249.9" rx="24.8" ry="23.9" fill="#607858" opacity="0.4"/><ellipse cx="1307.5" cy="264.8" rx="22.8" ry="27.5" fill="#607858" opacity="0.4"/><ellipse cx="1410.9" cy="253.5" rx="25.7" ry="24.1" fill="#607858" opacity="0.4"/><ellipse cx="1382.7" cy="301.1" rx="26.4" ry="23.2" fill="#607858" opacity="0.4"/><ellipse cx="1265.1" cy="300.8" rx="25.3" ry="26.4" fill="#607858" opacity="0.4"/><ellipse cx="1234.5" cy="309.8" rx="24.1" ry="23.0" fill="#607858" opacity="0.4"/><ellipse cx="1495.4" cy="138.7" rx="26.6" ry="22.3" fill="#607858" opacity="0.4"/><ellipse cx="1467.9" cy="163.0" rx="21.0" ry="25.7" fill="#607858" opacity="0.4"/><ellipse cx="1528.9" cy="183.9" rx="21.9" ry="26.6" fill="#607858" opacity="0.4"/><ellipse cx="1439.7" cy="211.4" rx="25.9" ry="23.5" fill="#607858" opacity="0.4"/><ellipse cx="1604.2" cy="200.4" rx="24.6" ry="21.7" fill="#607858" opacity="0.4"/><ellipse cx="1551.9" cy="222.0" rx="25.3" ry="24.1" fill="#607858" opacity="0.4"/><ellipse cx="1587.3" cy="220.4" rx="25.3" ry="27.1" fill="#607858" opacity="0.4"/><ellipse cx="1657.5" cy="122.2" rx="24.8" ry="26.8" fill="#607858" opacity="0.4"/><ellipse cx="1436.8" cy="245.6" rx="25.7" ry="24.6" fill="#607858" opacity="0.4"/><ellipse cx="1537.9" cy="246.8" rx="23.0" ry="23.0" fill="#607858" opacity="0.4"/><ellipse cx="1546.1" cy="263.2" rx="22.1" ry="22.6" fill="#607858" opacity="0.4"/><ellipse cx="1574.9" cy="245.9" rx="25.3" ry="23.9" fill="#607858" opacity="0.4"/><ellipse cx="1504.2" cy="258.3" rx="24.4" ry="25.9" fill="#607858" opacity="0.4"/><ellipse cx="1515.4" cy="279.9" rx="28.0" ry="22.3" fill="#607858" opacity="0.4"/><ellipse cx="1474.2" cy="278.1" rx="25.5" ry="22.1" fill="#607858" opacity="0.4"/><ellipse cx="1664.3" cy="250.2" rx="25.9" ry="23.7" fill="#607858" opacity="0.4"/><ellipse cx="1660.2" cy="272.2" rx="25.0" ry="23.9" fill="#607858" opacity="0.4"/><ellipse cx="1627.1" cy="288.4" rx="25.7" ry="23.2" fill="#607858" opacity="0.4"/><ellipse cx="1452.6" cy="318.4" rx="26.4" ry="23.0" fill="#607858" opacity="0.4"/><ellipse cx="1551.5" cy="313.2" rx="26.8" ry="24.1" fill="#607858" opacity="0.4"/><ellipse cx="1593.8" cy="313.2" rx="25.3" ry="24.8" fill="#607858" opacity="0.4"/><ellipse cx="1749.7" cy="104.9" rx="22.6" ry="25.3" fill="#607858" opacity="0.4"/><ellipse cx="1750.8" cy="134.8" rx="23.0" ry="23.7" fill="#607858" opacity="0.4"/><ellipse cx="1752.0" cy="195.6" rx="21.9" ry="23.0" fill="#607858" opacity="0.4"/><ellipse cx="1735.7" cy="277.2" rx="21.9" ry="26.4" fill="#607858" opacity="0.4"/><ellipse cx="1704.0" cy="302.4" rx="23.5" ry="26.8" fill="#607858" opacity="0.4"/><ellipse cx="1747.9" cy="300.8" rx="18.5" ry="21.9" fill="#607858" opacity="0.4"/><ellipse cx="1816.6" cy="261.0" rx="24.6" ry="23.0" fill="#607858" opacity="0.4"/><ellipse cx="1764.4" cy="252.4" rx="21.2" ry="20.8" fill="#607858" opacity="0.4"/><ellipse cx="1915.3" cy="231.7" rx="19.6" ry="24.1" fill="#607858" opacity="0.4"/><ellipse cx="1185.6" cy="333.7" rx="25.3" ry="25.7" fill="#607858" opacity="0.4"/><ellipse cx="1246.5" cy="373.6" rx="27.5" ry="23.7" fill="#607858" opacity="0.4"/><ellipse cx="1345.3" cy="375.4" rx="23.9" ry="27.1" fill="#607858" opacity="0.4"/><ellipse cx="1408.8" cy="359.6" rx="21.7" ry="24.8" fill="#607858" opacity="0.4"/><ellipse cx="1219.9" cy="418.4" rx="25.7" ry="25.5" fill="#607858" opacity="0.4"/><ellipse cx="1276.4" cy="424.2" rx="25.9" ry="28.6" fill="#607858" opacity="0.4"/><ellipse cx="1303.9" cy="414.5" rx="22.3" ry="24.4" fill="#607858" opacity="0.4"/><ellipse cx="1315.1" cy="418.6" rx="20.8" ry="23.0" fill="#607858" opacity="0.4"/><ellipse cx="1351.2" cy="431.7" rx="25.7" ry="25.9" fill="#607858" opacity="0.4"/><ellipse cx="1397.4" cy="426.5" rx="26.8" ry="23.0" fill="#607858" opacity="0.4"/><ellipse cx="1414.2" cy="450.1" rx="23.5" ry="23.7" fill="#607858" opacity="0.4"/><ellipse cx="1172.1" cy="439.5" rx="24.1" ry="25.3" fill="#607858" opacity="0.4"/><ellipse cx="1222.8" cy="467.0" rx="24.1" ry="28.0" fill="#607858" opacity="0.4"/><ellipse cx="1248.9" cy="483.9" rx="26.4" ry="25.3" fill="#607858" opacity="0.4"/><ellipse cx="1310.2" cy="488.0" rx="24.4" ry="29.3" fill="#607858" opacity="0.4"/><ellipse cx="1377.8" cy="465.9" rx="25.3" ry="21.4" fill="#607858" opacity="0.4"/><ellipse cx="1359.3" cy="501.3" rx="25.5" ry="26.8" fill="#607858" opacity="0.4"/><ellipse cx="1384.5" cy="508.7" rx="26.4" ry="24.8" fill="#607858" opacity="0.4"/><ellipse cx="1171.0" cy="486.6" rx="23.0" ry="25.3" fill="#607858" opacity="0.4"/><ellipse cx="1174.4" cy="526.7" rx="24.1" ry="24.1" fill="#607858" opacity="0.4"/><ellipse cx="1353.4" cy="534.6" rx="23.0" ry="20.8" fill="#607858" opacity="0.4"/><ellipse cx="1449.7" cy="335.3" rx="27.5" ry="24.8" fill="#607858" opacity="0.4"/><ellipse cx="1527.4" cy="359.1" rx="20.8" ry="28.6" fill="#607858" opacity="0.4"/><ellipse cx="1531.0" cy="386.6" rx="27.1" ry="21.4" fill="#607858" opacity="0.4"/><ellipse cx="1580.7" cy="373.1" rx="25.7" ry="23.7" fill="#607858" opacity="0.4"/><ellipse cx="1636.4" cy="335.3" rx="26.6" ry="25.3" fill="#607858" opacity="0.4"/><ellipse cx="1624.9" cy="392.0" rx="23.7" ry="22.8" fill="#607858" opacity="0.4"/><ellipse cx="1447.4" cy="392.0" rx="25.3" ry="24.6" fill="#607858" opacity="0.4"/><ellipse cx="1467.9" cy="407.3" rx="24.8" ry="22.6" fill="#607858" opacity="0.4"/><ellipse cx="1419.3" cy="401.7" rx="25.3" ry="23.5" fill="#607858" opacity="0.4"/><ellipse cx="1433.2" cy="420.2" rx="26.4" ry="28.0" fill="#607858" opacity="0.4"/><ellipse cx="1560.2" cy="415.7" rx="26.4" ry="24.6" fill="#607858" opacity="0.4"/><ellipse cx="1555.1" cy="434.4" rx="22.6" ry="22.6" fill="#607858" opacity="0.4"/><ellipse cx="1501.2" cy="456.9" rx="28.0" ry="23.5" fill="#607858" opacity="0.4"/><ellipse cx="1500.3" cy="477.2" rx="28.0" ry="24.8" fill="#607858" opacity="0.4"/><ellipse cx="1426.0" cy="482.1" rx="25.7" ry="25.7" fill="#607858" opacity="0.4"/><ellipse cx="1436.8" cy="502.4" rx="28.0" ry="25.7" fill="#607858" opacity="0.4"/><ellipse cx="1630.5" cy="475.6" rx="25.9" ry="24.6" fill="#607858" opacity="0.4"/><ellipse cx="1591.1" cy="490.7" rx="24.1" ry="24.1" fill="#607858" opacity="0.4"/><ellipse cx="1572.4" cy="514.8" rx="24.4" ry="27.1" fill="#607858" opacity="0.4"/><ellipse cx="1640.0" cy="508.0" rx="27.5" ry="25.0" fill="#607858" opacity="0.4"/><ellipse cx="1538.6" cy="533.5" rx="25.7" ry="23.0" fill="#607858" opacity="0.4"/><ellipse cx="1471.1" cy="540.2" rx="25.3" ry="23.0" fill="#607858" opacity="0.4"/><ellipse cx="1762.1" cy="321.8" rx="26.8" ry="25.3" fill="#607858" opacity="0.4"/><ellipse cx="1836.9" cy="320.6" rx="25.7" ry="24.1" fill="#607858" opacity="0.4"/><ellipse cx="1880.3" cy="321.8" rx="27.5" ry="25.3" fill="#607858" opacity="0.4"/><ellipse cx="1908.5" cy="324.0" rx="23.0" ry="27.5" fill="#607858" opacity="0.4"/><ellipse cx="1797.0" cy="325.1" rx="24.1" ry="19.6" fill="#607858" opacity="0.4"/><ellipse cx="1697.9" cy="374.0" rx="25.3" ry="25.3" fill="#607858" opacity="0.4"/><ellipse cx="1682.1" cy="388.6" rx="24.8" ry="27.5" fill="#607858" opacity="0.4"/><ellipse cx="1733.7" cy="373.6" rx="23.5" ry="24.1" fill="#607858" opacity="0.4"/><ellipse cx="1779.0" cy="364.8" rx="24.1" ry="23.0" fill="#607858" opacity="0.4"/><ellipse cx="1844.3" cy="358.9" rx="21.9" ry="20.8" fill="#607858" opacity="0.4"/><ellipse cx="1863.5" cy="352.2" rx="23.7" ry="25.3" fill="#607858" opacity="0.4"/><ellipse cx="1888.2" cy="356.7" rx="24.1" ry="28.6" fill="#607858" opacity="0.4"/><ellipse cx="1823.1" cy="385.9" rx="28.9" ry="24.1" fill="#607858" opacity="0.4"/><ellipse cx="1809.6" cy="401.7" rx="27.5" ry="24.1" fill="#607858" opacity="0.4"/><ellipse cx="1861.9" cy="390.5" rx="24.6" ry="24.1" fill="#607858" opacity="0.4"/><ellipse cx="1757.1" cy="423.8" rx="26.8" ry="25.3" fill="#607858" opacity="0.4"/><ellipse cx="1684.4" cy="455.1" rx="23.7" ry="25.0" fill="#607858" opacity="0.4"/><ellipse cx="1838.7" cy="448.1" rx="29.8" ry="23.2" fill="#607858" opacity="0.4"/><ellipse cx="1719.8" cy="476.3" rx="23.0" ry="21.7" fill="#607858" opacity="0.4"/><ellipse cx="1767.1" cy="477.2" rx="28.9" ry="24.6" fill="#607858" opacity="0.4"/><ellipse cx="1788.0" cy="500.4" rx="26.4" ry="24.8" fill="#607858" opacity="0.4"/><ellipse cx="1873.4" cy="495.6" rx="22.3" ry="23.0" fill="#607858" opacity="0.4"/><ellipse cx="1916.4" cy="459.1" rx="21.9" ry="23.5" fill="#607858" opacity="0.4"/><ellipse cx="1676.5" cy="534.6" rx="24.1" ry="20.8" fill="#607858" opacity="0.4"/><ellipse cx="1703.5" cy="533.0" rx="25.3" ry="20.8" fill="#607858" opacity="0.4"/><ellipse cx="1740.7" cy="533.5" rx="23.0" ry="20.8" fill="#607858" opacity="0.4"/></g>
<g filter="url(#bl)"><ellipse cx="1250" cy="505" rx="35" ry="12" fill="#344834" opacity="0.35"/><ellipse cx="1290" cy="508" rx="25" ry="10" fill="#344834" opacity="0.35"/><ellipse cx="1700" cy="230" rx="45" ry="45" fill="#344834" opacity="0.35"/><ellipse cx="1560" cy="200" rx="60" ry="50" fill="#344834" opacity="0.35"/><ellipse cx="1280" cy="180" rx="40" ry="40" fill="#344834" opacity="0.35"/></g>
<g shape-rendering="crispEdges">
<ellipse cx="1293.7" cy="90.2" rx="12.1" ry="10.9" fill="none" stroke="#ffff00" stroke-width="1.5"/><ellipse cx="1345.5" cy="101.5" rx="14.3" ry="15.4" fill="none" stroke="#ffff00" stroke-width="1.5"/><ellipse cx="1167.6" cy="143.2" rx="12.1" ry="17.7" fill="none" stroke="#ffff00" stroke-width="1.5"/><ellipse cx="1196.0" cy="154.7" rx="16.3" ry="15.0" fill="none" stroke="#ffff00" stroke-width="1.5"/><ellipse cx="1218.7" cy="136.4" rx="17.7" ry="12.1" transform="rotate(35 1218.7 136.4)" fill="none" stroke="#ffff00" stroke-width="1.5"/><ellipse cx="1242.2" cy="171.8" rx="17.5" ry="13.6" transform="rotate(20 1242.2 171.8)" fill="none" stroke="#ffff00" stroke-width="1.5"/><ellipse cx="1215.6" cy="202.9" rx="18.8" ry="13.0" transform="rotate(-10 1215.6 202.9)" fill="none" stroke="#ffff00" stroke-width="1.5"/><ellipse cx="1336.1" cy="158.0" rx="14.5" ry="19.0" transform="rotate(10 1336.1 158.0)" fill="none" stroke="#ffff00" stroke-width="1.5"/><ellipse cx="1316.5" cy="178.5" rx="15.7" ry="18.1" transform="rotate(-15 1316.5 178.5)" fill="none" stroke="#ffff00" stroke-width="1.5"/><ellipse cx="1398.0" cy="164.8" rx="15.9" ry="18.1" fill="none" stroke="#ffff00" stroke-width="1.5"/><ellipse cx="1285.2" cy="223.6" rx="17.0" ry="15.9" fill="none" stroke="#ffff00" stroke-width="1.5"/><ellipse cx="1305.0" cy="219.7" rx="15.9" ry="16.1" fill="none" stroke="#ffff00" stroke-width="1.5"/><ellipse cx="1360.9" cy="217.0" rx="12.5" ry="10.5" fill="none" stroke="#ffff00" stroke-width="1.5"/><ellipse cx="1362.4" cy="229.0" rx="12.5" ry="10.0" fill="none" stroke="#ffff00" stroke-width="1.5"/><ellipse cx="1268.3" cy="249.9" rx="16.1" ry="15.2" transform="rotate(15 1268.3 249.9)" fill="none" stroke="#ffff00" stroke-width="1.5"/><ellipse cx="1307.5" cy="264.8" rx="14.1" ry="18.8" transform="rotate(-5 1307.5 264.8)" fill="none" stroke="#ffff00" stroke-width="1.5"/><ellipse cx="1410.9" cy="253.5" rx="17.0" ry="15.4" fill="none" stroke="#ffff00" stroke-width="1.5"/><ellipse cx="1382.7" cy="301.1" rx="17.7" ry="14.5" fill="none" stroke="#ffff00" stroke-width="1.5"/><ellipse cx="1265.1" cy="300.8" rx="16.6" ry="17.7" transform="rotate(-20 1265.1 300.8)" fill="none" stroke="#ffff00" stroke-width="1.5"/><ellipse cx="1234.5" cy="309.8" rx="15.4" ry="14.3" fill="none" stroke="#ffff00" stroke-width="1.5"/><ellipse cx="1495.4" cy="138.7" rx="17.9" ry="13.6" transform="rotate(20 1495.4 138.7)" fill="none" stroke="#ffff00" stroke-width="1.5"/><ellipse cx="1467.9" cy="163.0" rx="12.3" ry="17.0" fill="none" stroke="#ffff00" stroke-width="1.5"/><ellipse cx="1528.9" cy="183.9" rx="13.2" ry="17.9" transform="rotate(10 1528.9 183.9)" fill="none" stroke="#ffff00" stroke-width="1.5"/><ellipse cx="1439.7" cy="211.4" rx="17.2" ry="14.8" transform="rotate(15 1439.7 211.4)" fill="none" stroke="#ffff00" stroke-width="1.5"/><ellipse cx="1604.2" cy="200.4" rx="15.9" ry="13.0" transform="rotate(10 1604.2 200.4)" fill="none" stroke="#ffff00" stroke-width="1.5"/><ellipse cx="1551.9" cy="222.0" rx="16.6" ry="15.4" fill="none" stroke="#ffff00" stroke-width="1.5"/><ellipse cx="1587.3" cy="220.4" rx="16.6" ry="18.4" transform="rotate(-25 1587.3 220.4)" fill="none" stroke="#ffff00" stroke-width="1.5"/><ellipse cx="1657.5" cy="122.2" rx="16.1" ry="18.1" transform="rotate(30 1657.5 122.2)" fill="none" stroke="#ffff00" stroke-width="1.5"/><ellipse cx="1436.8" cy="245.6" rx="17.0" ry="15.9" transform="rotate(-20 1436.8 245.6)" fill="none" stroke="#ffff00" stroke-width="1.5"/><ellipse cx="1537.9" cy="246.8" rx="14.3" ry="14.3" transform="rotate(30 1537.9 246.8)" fill="none" stroke="#ffff00" stroke-width="1.5"/><ellipse cx="1546.1" cy="263.2" rx="13.4" ry="13.9" fill="none" stroke="#ffff00" stroke-width="1.5"/><ellipse cx="1574.9" cy="245.9" rx="16.6" ry="15.2" transform="rotate(25 1574.9 245.9)" fill="none" stroke="#ffff00" stroke-width="1.5"/><ellipse cx="1504.2" cy="258.3" rx="15.7" ry="17.2" transform="rotate(-25 1504.2 258.3)" fill="none" stroke="#ffff00" stroke-width="1.5"/><ellipse cx="1515.4" cy="279.9" rx="19.3" ry="13.6" transform="rotate(10 1515.4 279.9)" fill="none" stroke="#ffff00" stroke-width="1.5"/><ellipse cx="1474.2" cy="278.1" rx="16.8" ry="13.4" transform="rotate(-25 1474.2 278.1)" fill="none" stroke="#ffff00" stroke-width="1.5"/><ellipse cx="1664.3" cy="250.2" rx="17.2" ry="15.0" fill="none" stroke="#ffff00" stroke-width="1.5"/><ellipse cx="1660.2" cy="272.2" rx="16.3" ry="15.2" fill="none" stroke="#ffff00" stroke-width="1.5"/><ellipse cx="1627.1" cy="288.4" rx="17.0" ry="14.5" fill="none" stroke="#ffff00" stroke-width="1.5"/><ellipse cx="1452.6" cy="318.4" rx="17.7" ry="14.3" fill="none" stroke="#ffff00" stroke-width="1.5"/><ellipse cx="1551.5" cy="313.2" rx="18.1" ry="15.4" fill="none" stroke="#ffff00" stroke-width="1.5"/><ellipse cx="1593.8" cy="313.2" rx="16.6" ry="16.1" fill="none" stroke="#ffff00" stroke-width="1.5"/><ellipse cx="1749.7" cy="104.9" rx="13.9" ry="16.6" fill="none" stroke="#ffff00" stroke-width="1.5"/><ellipse cx="1750.8" cy="134.8" rx="14.3" ry="15.0" fill="none" stroke="#ffff00" stroke-width="1.5"/><ellipse cx="1752.0" cy="195.6" rx="13.2" ry="14.3" fill="none" stroke="#ffff00" stroke-width="1.5"/><ellipse cx="1735.7" cy="277.2" rx="13.2" ry="17.7" transform="rotate(10 1735.7 277.2)" fill="none" stroke="#ffff00" stroke-width="1.5"/><ellipse cx="1704.0" cy="302.4" rx="14.8" ry="18.1" fill="none" stroke="#ffff00" stroke-width="1.5"/><ellipse cx="1747.9" cy="300.8" rx="9.8" ry="13.2" transform="rotate(25 1747.9 300.8)" fill="none" stroke="#ffff00" stroke-width="1.5"/><ellipse cx="1816.6" cy="261.0" rx="15.9" ry="14.3" fill="none" stroke="#ffff00" stroke-width="1.5"/><ellipse cx="1764.4" cy="252.4" rx="12.5" ry="12.1" fill="none" stroke="#ffff00" stroke-width="1.5"/><ellipse cx="1915.3" cy="231.7" rx="10.9" ry="15.4" fill="none" stroke="#ffff00" stroke-width="1.5"/><ellipse cx="1185.6" cy="333.7" rx="16.6" ry="17.0" transform="rotate(20 1185.6 333.7)" fill="none" stroke="#ffff00" stroke-width="1.5"/><ellipse cx="1246.5" cy="373.6" rx="18.8" ry="15.0" transform="rotate(-20 1246.5 373.6)" fill="none" stroke="#ffff00" stroke-width="1.5"/><ellipse cx="1345.3" cy="375.4" rx="15.2" ry="18.4" transform="rotate(-15 1345.3 375.4)" fill="none" stroke="#ffff00" stroke-width="1.5"/><ellipse cx="1408.8" cy="359.6" rx="13.0" ry="16.1" transform="rotate(10 1408.8 359.6)" fill="none" stroke="#ffff00" stroke-width="1.5"/><ellipse cx="1219.9" cy="418.4" rx="17.0" ry="16.8" fill="none" stroke="#ffff00" stroke-width="1.5"/><ellipse cx="1276.4" cy="424.2" rx="17.2" ry="19.9" fill="none" stroke="#ffff00" stroke-width="1.5"/><ellipse cx="1303.9" cy="414.5" rx="13.6" ry="15.7" fill="none" stroke="#ffff00" stroke-width="1.5"/><ellipse cx="1315.1" cy="418.6" rx="12.1" ry="14.3" fill="none" stroke="#ffff00" stroke-width="1.5"/><ellipse cx="1351.2" cy="431.7" rx="17.0" ry="17.2" fill="none" stroke="#ffff00" stroke-width="1.5"/><ellipse cx="1397.4" cy="426.5" rx="18.1" ry="14.3" transform="rotate(10 1397.4 426.5)" fill="none" stroke="#ffff00" stroke-width="1.5"/><ellipse cx="1414.2" cy="450.1" rx="14.8" ry="15.0" fill="none" stroke="#ffff00" stroke-width="1.5"/><ellipse cx="1172.1" cy="439.5" rx="15.4" ry="16.6" fill="none" stroke="#ffff00" stroke-width="1.5"/><ellipse cx="1222.8" cy="467.0" rx="15.4" ry="19.3" transform="rotate(-25 1222.8 467.0)" fill="none" stroke="#ffff00" stroke-width="1.5"/><ellipse cx="1248.9" cy="483.9" rx="17.7" ry="16.6" fill="none" stroke="#ffff00" stroke-width="1.5"/><ellipse cx="1310.2" cy="488.0" rx="15.7" ry="20.6" transform="rotate(-10 1310.2 488.0)" fill="none" stroke="#ffff00" stroke-width="1.5"/><ellipse cx="1377.8" cy="465.9" rx="16.6" ry="12.7" fill="none" stroke="#ffff00" stroke-width="1.5"/><ellipse cx="1359.3" cy="501.3" rx="16.8" ry="18.1" transform="rotate(-20 1359.3 501.3)" fill="none" stroke="#ffff00" stroke-width="1.5"/><ellipse cx="1384.5" cy="508.7" rx="17.7" ry="16.1" fill="none" stroke="#ffff00" stroke-width="1.5"/><ellipse cx="1171.0" cy="486.6" rx="14.3" ry="16.6" fill="none" stroke="#ffff00" stroke-width="1.5"/><ellipse cx="1174.4" cy="526.7" rx="15.4" ry="15.4" fill="none" stroke="#ffff00" stroke-width="1.5"/><ellipse cx="1353.4" cy="534.6" rx="14.3" ry="12.1" fill="none" stroke="#ffff00" stroke-width="1.5"/><ellipse cx="1449.7" cy="335.3" rx="18.8" ry="16.1" transform="rotate(15 1449.7 335.3)" fill="none" stroke="#ffff00" stroke-width="1.5"/><ellipse cx="1527.4" cy="359.1" rx="12.1" ry="19.9" transform="rotate(15 1527.4 359.1)" fill="none" stroke="#ffff00" stroke-width="1.5"/><ellipse cx="1531.0" cy="386.6" rx="18.4" ry="12.7" fill="none" stroke="#ffff00" stroke-width="1.5"/><ellipse cx="1580.7" cy="373.1" rx="17.0" ry="15.0" transform="rotate(15 1580.7 373.1)" fill="none" stroke="#ffff00" stroke-width="1.5"/><ellipse cx="1636.4" cy="335.3" rx="17.9" ry="16.6" transform="rotate(15 1636.4 335.3)" fill="none" stroke="#ffff00" stroke-width="1.5"/><ellipse cx="1624.9" cy="392.0" rx="15.0" ry="14.1" fill="none" stroke="#ffff00" stroke-width="1.5"/><ellipse cx="1447.4" cy="392.0" rx="16.6" ry="15.9" fill="none" stroke="#ffff00" stroke-width="1.5"/><ellipse cx="1467.9" cy="407.3" rx="16.1" ry="13.9" fill="none" stroke="#ffff00" stroke-width="1.5"/><ellipse cx="1419.3" cy="401.7" rx="16.6" ry="14.8" fill="none" stroke="#ffff00" stroke-width="1.5"/><ellipse cx="1433.2" cy="420.2" rx="17.7" ry="19.3" transform="rotate(-30 1433.2 420.2)" fill="none" stroke="#ffff00" stroke-width="1.5"/><ellipse cx="1560.2" cy="415.7" rx="17.7" ry="15.9" fill="none" stroke="#ffff00" stroke-width="1.5"/><ellipse cx="1555.1" cy="434.4" rx="13.9" ry="13.9" fill="none" stroke="#ffff00" stroke-width="1.5"/><ellipse cx="1501.2" cy="456.9" rx="19.3" ry="14.8" fill="none" stroke="#ffff00" stroke-width="1.5"/><ellipse cx="1500.3" cy="477.2" rx="19.3" ry="16.1" fill="none" stroke="#ffff00" stroke-width="1.5"/><ellipse cx="1426.0" cy="482.1" rx="17.0" ry="17.0" fill="none" stroke="#ffff00" stroke-width="1.5"/><ellipse cx="1436.8" cy="502.4" rx="19.3" ry="17.0" fill="none" stroke="#ffff00" stroke-width="1.5"/><ellipse cx="1630.5" cy="475.6" rx="17.2" ry="15.9" transform="rotate(10 1630.5 475.6)" fill="none" stroke="#ffff00" stroke-width="1.5"/><ellipse cx="1591.1" cy="490.7" rx="15.4" ry="15.4" fill="none" stroke="#ffff00" stroke-width="1.5"/><ellipse cx="1572.4" cy="514.8" rx="15.7" ry="18.4" transform="rotate(-15 1572.4 514.8)" fill="none" stroke="#ffff00" stroke-width="1.5"/><ellipse cx="1640.0" cy="508.0" rx="18.8" ry="16.3" transform="rotate(-10 1640.0 508.0)" fill="none" stroke="#ffff00" stroke-width="1.5"/><ellipse cx="1538.6" cy="533.5" rx="17.0" ry="14.3" fill="none" stroke="#ffff00" stroke-width="1.5"/><ellipse cx="1471.1" cy="540.2" rx="16.6" ry="14.3" fill="none" stroke="#ffff00" stroke-width="1.5"/><ellipse cx="1762.1" cy="321.8" rx="18.1" ry="16.6" fill="none" stroke="#ffff00" stroke-width="1.5"/><ellipse cx="1836.9" cy="320.6" rx="17.0" ry="15.4" fill="none" stroke="#ffff00" stroke-width="1.5"/><ellipse cx="1880.3" cy="321.8" rx="18.8" ry="16.6" transform="rotate(20 1880.3 321.8)" fill="none" stroke="#ffff00" stroke-width="1.5"/><ellipse cx="1908.5" cy="324.0" rx="14.3" ry="18.8" fill="none" stroke="#ffff00" stroke-width="1.5"/><ellipse cx="1797.0" cy="325.1" rx="15.4" ry="10.9" fill="none" stroke="#ffff00" stroke-width="1.5"/><ellipse cx="1697.9" cy="374.0" rx="16.6" ry="16.6" transform="rotate(20 1697.9 374.0)" fill="none" stroke="#ffff00" stroke-width="1.5"/><ellipse cx="1682.1" cy="388.6" rx="16.1" ry="18.8" transform="rotate(-20 1682.1 388.6)" fill="none" stroke="#ffff00" stroke-width="1.5"/><ellipse cx="1733.7" cy="373.6" rx="14.8" ry="15.4" fill="none" stroke="#ffff00" stroke-width="1.5"/><ellipse cx="1779.0" cy="364.8" rx="15.4" ry="14.3" fill="none" stroke="#ffff00" stroke-width="1.5"/><ellipse cx="1844.3" cy="358.9" rx="13.2" ry="12.1" transform="rotate(30 1844.3 358.9)" fill="none" stroke="#ffff00" stroke-width="1.5"/><ellipse cx="1863.5" cy="352.2" rx="15.0" ry="16.6" fill="none" stroke="#ffff00" stroke-width="1.5"/><ellipse cx="1888.2" cy="356.7" rx="15.4" ry="19.9" fill="none" stroke="#ffff00" stroke-width="1.5"/><ellipse cx="1823.1" cy="385.9" rx="20.2" ry="15.4" transform="rotate(10 1823.1 385.9)" fill="none" stroke="#ffff00" stroke-width="1.5"/><ellipse cx="1809.6" cy="401.7" rx="18.8" ry="15.4" fill="none" stroke="#ffff00" stroke-width="1.5"/><ellipse cx="1861.9" cy="390.5" rx="15.9" ry="15.4" fill="none" stroke="#ffff00" stroke-width="1.5"/><ellipse cx="1757.1" cy="423.8" rx="18.1" ry="16.6" fill="none" stroke="#ffff00" stroke-width="1.5"/><ellipse cx="1684.4" cy="455.1" rx="15.0" ry="16.3" fill="none" stroke="#ffff00" stroke-width="1.5"/><ellipse cx="1838.7" cy="448.1" rx="21.1" ry="14.5" transform="rotate(5 1838.7 448.1)" fill="none" stroke="#ffff00" stroke-width="1.5"/><ellipse cx="1719.8" cy="476.3" rx="14.3" ry="13.0" fill="none" stroke="#ffff00" stroke-width="1.5"/><ellipse cx="1767.1" cy="477.2" rx="20.2" ry="15.9" transform="rotate(-20 1767.1 477.2)" fill="none" stroke="#ffff00" stroke-width="1.5"/><ellipse cx="1788.0" cy="500.4" rx="17.7" ry="16.1" fill="none" stroke="#ffff00" stroke-width="1.5"/><ellipse cx="1873.4" cy="495.6" rx="13.6" ry="14.3" fill="none" stroke="#ffff00" stroke-width="1.5"/><ellipse cx="1916.4" cy="459.1" rx="13.2" ry="14.8" fill="none" stroke="#ffff00" stroke-width="1.5"/><ellipse cx="1676.5" cy="534.6" rx="15.4" ry="12.1" fill="none" stroke="#ffff00" stroke-width="1.5"/><ellipse cx="1703.5" cy="533.0" rx="16.6" ry="12.1" fill="none" stroke="#ffff00" stroke-width="1.5"/><ellipse cx="1740.7" cy="533.5" rx="14.3" ry="12.1" fill="none" stroke="#ffff00" stroke-width="1.5"/>
<ellipse cx="1293.7" cy="90.2" rx="11.8" ry="10.6" fill="#586e4a"/><ellipse cx="1345.5" cy="101.5" rx="14.0" ry="15.1" fill="#586e4a"/><ellipse cx="1167.6" cy="143.2" rx="11.8" ry="17.4" fill="#586e4a"/><ellipse cx="1196.0" cy="154.7" rx="16.0" ry="14.7" fill="#586e4a"/><ellipse cx="1218.7" cy="136.4" rx="17.4" ry="11.8" transform="rotate(35 1218.7 136.4)" fill="#586e4a"/><ellipse cx="1242.2" cy="171.8" rx="17.2" ry="13.3" transform="rotate(20 1242.2 171.8)" fill="#586e4a"/><ellipse cx="1215.6" cy="202.9" rx="18.5" ry="12.7" transform="rotate(-10 1215.6 202.9)" fill="#586e4a"/><ellipse cx="1336.1" cy="158.0" rx="14.2" ry="18.7" transform="rotate(10 1336.1 158.0)" fill="#586e4a"/><ellipse cx="1316.5" cy="178.5" rx="15.4" ry="17.8" transform="rotate(-15 1316.5 178.5)" fill="#586e4a"/><ellipse cx="1398.0" cy="164.8" rx="15.6" ry="17.8" fill="#586e4a"/><ellipse cx="1285.2" cy="223.6" rx="16.7" ry="15.6" fill="#586e4a"/><ellipse cx="1305.0" cy="219.7" rx="15.6" ry="15.8" fill="#586e4a"/><ellipse cx="1360.9" cy="217.0" rx="12.2" ry="10.2" fill="#586e4a"/><ellipse cx="1362.4" cy="229.0" rx="12.2" ry="9.7" fill="#586e4a"/><ellipse cx="1268.3" cy="249.9" rx="15.8" ry="14.9" transform="rotate(15 1268.3 249.9)" fill="#586e4a"/><ellipse cx="1307.5" cy="264.8" rx="13.8" ry="18.5" transform="rotate(-5 1307.5 264.8)" fill="#586e4a"/><ellipse cx="1410.9" cy="253.5" rx="16.7" ry="15.1" fill="#586e4a"/><ellipse cx="1382.7" cy="301.1" rx="17.4" ry="14.2" fill="#586e4a"/><ellipse cx="1265.1" cy="300.8" rx="16.3" ry="17.4" transform="rotate(-20 1265.1 300.8)" fill="#586e4a"/><ellipse cx="1234.5" cy="309.8" rx="15.1" ry="14.0" fill="#586e4a"/><ellipse cx="1495.4" cy="138.7" rx="17.6" ry="13.3" transform="rotate(20 1495.4 138.7)" fill="#586e4a"/><ellipse cx="1467.9" cy="163.0" rx="12.0" ry="16.7" fill="#586e4a"/><ellipse cx="1528.9" cy="183.9" rx="12.9" ry="17.6" transform="rotate(10 1528.9 183.9)" fill="#586e4a"/><ellipse cx="1439.7" cy="211.4" rx="16.9" ry="14.5" transform="rotate(15 1439.7 211.4)" fill="#586e4a"/><ellipse cx="1604.2" cy="200.4" rx="15.6" ry="12.7" transform="rotate(10 1604.2 200.4)" fill="#586e4a"/><ellipse cx="1551.9" cy="222.0" rx="16.3" ry="15.1" fill="#586e4a"/><ellipse cx="1587.3" cy="220.4" rx="16.3" ry="18.1" transform="rotate(-25 1587.3 220.4)" fill="#586e4a"/><ellipse cx="1657.5" cy="122.2" rx="15.8" ry="17.8" transform="rotate(30 1657.5 122.2)" fill="#586e4a"/><ellipse cx="1436.8" cy="245.6" rx="16.7" ry="15.6" transform="rotate(-20 1436.8 245.6)" fill="#586e4a"/><ellipse cx="1537.9" cy="246.8" rx="14.0" ry="14.0" transform="rotate(30 1537.9 246.8)" fill="#586e4a"/><ellipse cx="1546.1" cy="263.2" rx="13.1" ry="13.6" fill="#586e4a"/><ellipse cx="1574.9" cy="245.9" rx="16.3" ry="14.9" transform="rotate(25 1574.9 245.9)" fill="#586e4a"/><ellipse cx="1504.2" cy="258.3" rx="15.4" ry="16.9" transform="rotate(-25 1504.2 258.3)" fill="#586e4a"/><ellipse cx="1515.4" cy="279.9" rx="19.0" ry="13.3" transform="rotate(10 1515.4 279.9)" fill="#586e4a"/><ellipse cx="1474.2" cy="278.1" rx="16.5" ry="13.1" transform="rotate(-25 1474.2 278.1)" fill="#586e4a"/><ellipse cx="1664.3" cy="250.2" rx="16.9" ry="14.7" fill="#586e4a"/><ellipse cx="1660.2" cy="272.2" rx="16.0" ry="14.9" fill="#586e4a"/><ellipse cx="1627.1" cy="288.4" rx="16.7" ry="14.2" fill="#586e4a"/><ellipse cx="1452.6" cy="318.4" rx="17.4" ry="14.0" fill="#586e4a"/><ellipse cx="1551.5" cy="313.2" rx="17.8" ry="15.1" fill="#586e4a"/><ellipse cx="1593.8" cy="313.2" rx="16.3" ry="15.8" fill="#586e4a"/><ellipse cx="1749.7" cy="104.9" rx="13.6" ry="16.3" fill="#586e4a"/><ellipse cx="1750.8" cy="134.8" rx="14.0" ry="14.7" fill="#586e4a"/><ellipse cx="1752.0" cy="195.6" rx="12.9" ry="14.0" fill="#586e4a"/><ellipse cx="1735.7" cy="277.2" rx="12.9" ry="17.4" transform="rotate(10 1735.7 277.2)" fill="#586e4a"/><ellipse cx="1704.0" cy="302.4" rx="14.5" ry="17.8" fill="#586e4a"/><ellipse cx="1747.9" cy="300.8" rx="9.5" ry="12.9" transform="rotate(25 1747.9 300.8)" fill="#586e4a"/><ellipse cx="1816.6" cy="261.0" rx="15.6" ry="14.0" fill="#586e4a"/><ellipse cx="1764.4" cy="252.4" rx="12.2" ry="11.8" fill="#586e4a"/><ellipse cx="1915.3" cy="231.7" rx="10.6" ry="15.1" fill="#586e4a"/><ellipse cx="1185.6" cy="333.7" rx="16.3" ry="16.7" transform="rotate(20 1185.6 333.7)" fill="#586e4a"/><ellipse cx="1246.5" cy="373.6" rx="18.5" ry="14.7" transform="rotate(-20 1246.5 373.6)" fill="#586e4a"/><ellipse cx="1345.3" cy="375.4" rx="14.9" ry="18.1" transform="rotate(-15 1345.3 375.4)" fill="#586e4a"/><ellipse cx="1408.8" cy="359.6" rx="12.7" ry="15.8" transform="rotate(10 1408.8 359.6)" fill="#586e4a"/><ellipse cx="1219.9" cy="418.4" rx="16.7" ry="16.5" fill="#586e4a"/><ellipse cx="1276.4" cy="424.2" rx="16.9" ry="19.6" fill="#586e4a"/><ellipse cx="1303.9" cy="414.5" rx="13.3" ry="15.4" fill="#586e4a"/><ellipse cx="1315.1" cy="418.6" rx="11.8" ry="14.0" fill="#586e4a"/><ellipse cx="1351.2" cy="431.7" rx="16.7" ry="16.9" fill="#586e4a"/><ellipse cx="1397.4" cy="426.5" rx="17.8" ry="14.0" transform="rotate(10 1397.4 426.5)" fill="#586e4a"/><ellipse cx="1414.2" cy="450.1" rx="14.5" ry="14.7" fill="#586e4a"/><ellipse cx="1172.1" cy="439.5" rx="15.1" ry="16.3" fill="#586e4a"/><ellipse cx="1222.8" cy="467.0" rx="15.1" ry="19.0" transform="rotate(-25 1222.8 467.0)" fill="#586e4a"/><ellipse cx="1248.9" cy="483.9" rx="17.4" ry="16.3" fill="#586e4a"/><ellipse cx="1310.2" cy="488.0" rx="15.4" ry="20.3" transform="rotate(-10 1310.2 488.0)" fill="#586e4a"/><ellipse cx="1377.8" cy="465.9" rx="16.3" ry="12.4" fill="#586e4a"/><ellipse cx="1359.3" cy="501.3" rx="16.5" ry="17.8" transform="rotate(-20 1359.3 501.3)" fill="#586e4a"/><ellipse cx="1384.5" cy="508.7" rx="17.4" ry="15.8" fill="#586e4a"/><ellipse cx="1171.0" cy="486.6" rx="14.0" ry="16.3" fill="#586e4a"/><ellipse cx="1174.4" cy="526.7" rx="15.1" ry="15.1" fill="#586e4a"/><ellipse cx="1353.4" cy="534.6" rx="14.0" ry="11.8" fill="#586e4a"/><ellipse cx="1449.7" cy="335.3" rx="18.5" ry="15.8" transform="rotate(15 1449.7 335.3)" fill="#586e4a"/><ellipse cx="1527.4" cy="359.1" rx="11.8" ry="19.6" transform="rotate(15 1527.4 359.1)" fill="#586e4a"/><ellipse cx="1531.0" cy="386.6" rx="18.1" ry="12.4" fill="#586e4a"/><ellipse cx="1580.7" cy="373.1" rx="16.7" ry="14.7" transform="rotate(15 1580.7 373.1)" fill="#586e4a"/><ellipse cx="1636.4" cy="335.3" rx="17.6" ry="16.3" transform="rotate(15 1636.4 335.3)" fill="#586e4a"/><ellipse cx="1624.9" cy="392.0" rx="14.7" ry="13.8" fill="#586e4a"/><ellipse cx="1447.4" cy="392.0" rx="16.3" ry="15.6" fill="#586e4a"/><ellipse cx="1467.9" cy="407.3" rx="15.8" ry="13.6" fill="#586e4a"/><ellipse cx="1419.3" cy="401.7" rx="16.3" ry="14.5" fill="#586e4a"/><ellipse cx="1433.2" cy="420.2" rx="17.4" ry="19.0" transform="rotate(-30 1433.2 420.2)" fill="#586e4a"/><ellipse cx="1560.2" cy="415.7" rx="17.4" ry="15.6" fill="#586e4a"/><ellipse cx="1555.1" cy="434.4" rx="13.6" ry="13.6" fill="#586e4a"/><ellipse cx="1501.2" cy="456.9" rx="19.0" ry="14.5" fill="#586e4a"/><ellipse cx="1500.3" cy="477.2" rx="19.0" ry="15.8" fill="#586e4a"/><ellipse cx="1426.0" cy="482.1" rx="16.7" ry="16.7" fill="#586e4a"/><ellipse cx="1436.8" cy="502.4" rx="19.0" ry="16.7" fill="#586e4a"/><ellipse cx="1630.5" cy="475.6" rx="16.9" ry="15.6" transform="rotate(10 1630.5 475.6)" fill="#586e4a"/><ellipse cx="1591.1" cy="490.7" rx="15.1" ry="15.1" fill="#586e4a"/><ellipse cx="1572.4" cy="514.8" rx="15.4" ry="18.1" transform="rotate(-15 1572.4 514.8)" fill="#586e4a"/><ellipse cx="1640.0" cy="508.0" rx="18.5" ry="16.0" transform="rotate(-10 1640.0 508.0)" fill="#586e4a"/><ellipse cx="1538.6" cy="533.5" rx="16.7" ry="14.0" fill="#586e4a"/><ellipse cx="1471.1" cy="540.2" rx="16.3" ry="14.0" fill="#586e4a"/><ellipse cx="1762.1" cy="321.8" rx="17.8" ry="16.3" fill="#586e4a"/><ellipse cx="1836.9" cy="320.6" rx="16.7" ry="15.1" fill="#586e4a"/><ellipse cx="1880.3" cy="321.8" rx="18.5" ry="16.3" transform="rotate(20 1880.3 321.8)" fill="#586e4a"/><ellipse cx="1908.5" cy="324.0" rx="14.0" ry="18.5" fill="#586e4a"/><ellipse cx="1797.0" cy="325.1" rx="15.1" ry="10.6" fill="#586e4a"/><ellipse cx="1697.9" cy="374.0" rx="16.3" ry="16.3" transform="rotate(20 1697.9 374.0)" fill="#586e4a"/><ellipse cx="1682.1" cy="388.6" rx="15.8" ry="18.5" transform="rotate(-20 1682.1 388.6)" fill="#586e4a"/><ellipse cx="1733.7" cy="373.6" rx="14.5" ry="15.1" fill="#586e4a"/><ellipse cx="1779.0" cy="364.8" rx="15.1" ry="14.0" fill="#586e4a"/><ellipse cx="1844.3" cy="358.9" rx="12.9" ry="11.8" transform="rotate(30 1844.3 358.9)" fill="#586e4a"/><ellipse cx="1863.5" cy="352.2" rx="14.7" ry="16.3" fill="#586e4a"/><ellipse cx="1888.2" cy="356.7" rx="15.1" ry="19.6" fill="#586e4a"/><ellipse cx="1823.1" cy="385.9" rx="19.9" ry="15.1" transform="rotate(10 1823.1 385.9)" fill="#586e4a"/><ellipse cx="1809.6" cy="401.7" rx="18.5" ry="15.1" fill="#586e4a"/><ellipse cx="1861.9" cy="390.5" rx="15.6" ry="15.1" fill="#586e4a"/><ellipse cx="1757.1" cy="423.8" rx="17.8" ry="16.3" fill="#586e4a"/><ellipse cx="1684.4" cy="455.1" rx="14.7" ry="16.0" fill="#586e4a"/><ellipse cx="1838.7" cy="448.1" rx="20.8" ry="14.2" transform="rotate(5 1838.7 448.1)" fill="#586e4a"/><ellipse cx="1719.8" cy="476.3" rx="14.0" ry="12.7" fill="#586e4a"/><ellipse cx="1767.1" cy="477.2" rx="19.9" ry="15.6" transform="rotate(-20 1767.1 477.2)" fill="#586e4a"/><ellipse cx="1788.0" cy="500.4" rx="17.4" ry="15.8" fill="#586e4a"/><ellipse cx="1873.4" cy="495.6" rx="13.3" ry="14.0" fill="#586e4a"/><ellipse cx="1916.4" cy="459.1" rx="12.9" ry="14.5" fill="#586e4a"/><ellipse cx="1676.5" cy="534.6" rx="15.1" ry="11.8" fill="#586e4a"/><ellipse cx="1703.5" cy="533.0" rx="16.3" ry="11.8" fill="#586e4a"/><ellipse cx="1740.7" cy="533.5" rx="14.0" ry="11.8" fill="#586e4a"/>
<ellipse cx="1293.7" cy="90.2" rx="7.9" ry="6.7" fill="none" stroke="#ffff00" stroke-width="1.0"/><ellipse cx="1345.5" cy="101.5" rx="10.1" ry="11.2" fill="none" stroke="#ffff00" stroke-width="1.0"/><ellipse cx="1167.6" cy="143.2" rx="7.9" ry="13.5" fill="none" stroke="#ffff00" stroke-width="1.0"/><ellipse cx="1196.0" cy="154.7" rx="12.1" ry="10.8" fill="none" stroke="#ffff00" stroke-width="1.0"/><ellipse cx="1218.7" cy="136.4" rx="13.5" ry="7.9" transform="rotate(35 1218.7 136.4)" fill="none" stroke="#ffff00" stroke-width="1.0"/><ellipse cx="1242.2" cy="171.8" rx="13.3" ry="9.4" transform="rotate(20 1242.2 171.8)" fill="none" stroke="#ffff00" stroke-width="1.0"/><ellipse cx="1215.6" cy="202.9" rx="14.6" ry="8.8" transform="rotate(-10 1215.6 202.9)" fill="none" stroke="#ffff00" stroke-width="1.0"/><ellipse cx="1336.1" cy="158.0" rx="10.3" ry="14.8" transform="rotate(10 1336.1 158.0)" fill="none" stroke="#ffff00" stroke-width="1.0"/><ellipse cx="1316.5" cy="178.5" rx="11.5" ry="13.9" transform="rotate(-15 1316.5 178.5)" fill="none" stroke="#ffff00" stroke-width="1.0"/><ellipse cx="1398.0" cy="164.8" rx="11.7" ry="13.9" fill="none" stroke="#ffff00" stroke-width="1.0"/><ellipse cx="1285.2" cy="223.6" rx="12.8" ry="11.7" fill="none" stroke="#ffff00" stroke-width="1.0"/><ellipse cx="1305.0" cy="219.7" rx="11.7" ry="11.9" fill="none" stroke="#ffff00" stroke-width="1.0"/><ellipse cx="1360.9" cy="217.0" rx="8.3" ry="6.3" fill="none" stroke="#ffff00" stroke-width="1.0"/><ellipse cx="1362.4" cy="229.0" rx="8.3" ry="5.8" fill="none" stroke="#ffff00" stroke-width="1.0"/><ellipse cx="1268.3" cy="249.9" rx="11.9" ry="11.0" transform="rotate(15 1268.3 249.9)" fill="none" stroke="#ffff00" stroke-width="1.0"/><ellipse cx="1307.5" cy="264.8" rx="9.9" ry="14.6" transform="rotate(-5 1307.5 264.8)" fill="none" stroke="#ffff00" stroke-width="1.0"/><ellipse cx="1410.9" cy="253.5" rx="12.8" ry="11.2" fill="none" stroke="#ffff00" stroke-width="1.0"/><ellipse cx="1382.7" cy="301.1" rx="13.5" ry="10.3" fill="none" stroke="#ffff00" stroke-width="1.0"/><ellipse cx="1265.1" cy="300.8" rx="12.4" ry="13.5" transform="rotate(-20 1265.1 300.8)" fill="none" stroke="#ffff00" stroke-width="1.0"/><ellipse cx="1234.5" cy="309.8" rx="11.2" ry="10.1" fill="none" stroke="#ffff00" stroke-width="1.0"/><ellipse cx="1495.4" cy="138.7" rx="13.7" ry="9.4" transform="rotate(20 1495.4 138.7)" fill="none" stroke="#ffff00" stroke-width="1.0"/><ellipse cx="1467.9" cy="163.0" rx="8.1" ry="12.8" fill="none" stroke="#ffff00" stroke-width="1.0"/><ellipse cx="1528.9" cy="183.9" rx="9.0" ry="13.7" transform="rotate(10 1528.9 183.9)" fill="none" stroke="#ffff00" stroke-width="1.0"/><ellipse cx="1439.7" cy="211.4" rx="13.0" ry="10.6" transform="rotate(15 1439.7 211.4)" fill="none" stroke="#ffff00" stroke-width="1.0"/><ellipse cx="1604.2" cy="200.4" rx="11.7" ry="8.8" transform="rotate(10 1604.2 200.4)" fill="none" stroke="#ffff00" stroke-width="1.0"/><ellipse cx="1551.9" cy="222.0" rx="12.4" ry="11.2" fill="none" stroke="#ffff00" stroke-width="1.0"/><ellipse cx="1587.3" cy="220.4" rx="12.4" ry="14.2" transform="rotate(-25 1587.3 220.4)" fill="none" stroke="#ffff00" stroke-width="1.0"/><ellipse cx="1657.5" cy="122.2" rx="11.9" ry="13.9" transform="rotate(30 1657.5 122.2)" fill="none" stroke="#ffff00" stroke-width="1.0"/><ellipse cx="1436.8" cy="245.6" rx="12.8" ry="11.7" transform="rotate(-20 1436.8 245.6)" fill="none" stroke="#ffff00" stroke-width="1.0"/><ellipse cx="1537.9" cy="246.8" rx="10.1" ry="10.1" transform="rotate(30 1537.9 246.8)" fill="none" stroke="#ffff00" stroke-width="1.0"/><ellipse cx="1546.1" cy="263.2" rx="9.2" ry="9.7" fill="none" stroke="#ffff00" stroke-width="1.0"/><ellipse cx="1574.9" cy="245.9" rx="12.4" ry="11.0" transform="rotate(25 1574.9 245.9)" fill="none" stroke="#ffff00" stroke-width="1.0"/><ellipse cx="1504.2" cy="258.3" rx="11.5" ry="13.0" transform="rotate(-25 1504.2 258.3)" fill="none" stroke="#ffff00" stroke-width="1.0"/><ellipse cx="1515.4" cy="279.9" rx="15.1" ry="9.4" transform="rotate(10 1515.4 279.9)" fill="none" stroke="#ffff00" stroke-width="1.0"/><ellipse cx="1474.2" cy="278.1" rx="12.6" ry="9.2" transform="rotate(-25 1474.2 278.1)" fill="none" stroke="#ffff00" stroke-width="1.0"/><ellipse cx="1664.3" cy="250.2" rx="13.0" ry="10.8" fill="none" stroke="#ffff00" stroke-width="1.0"/><ellipse cx="1660.2" cy="272.2" rx="12.1" ry="11.0" fill="none" stroke="#ffff00" stroke-width="1.0"/><ellipse cx="1627.1" cy="288.4" rx="12.8" ry="10.3" fill="none" stroke="#ffff00" stroke-width="1.0"/><ellipse cx="1452.6" cy="318.4" rx="13.5" ry="10.1" fill="none" stroke="#ffff00" stroke-width="1.0"/><ellipse cx="1551.5" cy="313.2" rx="13.9" ry="11.2" fill="none" stroke="#ffff00" stroke-width="1.0"/><ellipse cx="1593.8" cy="313.2" rx="12.4" ry="11.9" fill="none" stroke="#ffff00" stroke-width="1.0"/><ellipse cx="1749.7" cy="104.9" rx="9.7" ry="12.4" fill="none" stroke="#ffff00" stroke-width="1.0"/><ellipse cx="1750.8" cy="134.8" rx="10.1" ry="10.8" fill="none" stroke="#ffff00" stroke-width="1.0"/><ellipse cx="1752.0" cy="195.6" rx="9.0" ry="10.1" fill="none" stroke="#ffff00" stroke-width="1.0"/><ellipse cx="1735.7" cy="277.2" rx="9.0" ry="13.5" transform="rotate(10 1735.7 277.2)" fill="none" stroke="#ffff00" stroke-width="1.0"/><ellipse cx="1704.0" cy="302.4" rx="10.6" ry="13.9" fill="none" stroke="#ffff00" stroke-width="1.0"/><ellipse cx="1747.9" cy="300.8" rx="5.6" ry="9.0" transform="rotate(25 1747.9 300.8)" fill="none" stroke="#ffff00" stroke-width="1.0"/><ellipse cx="1816.6" cy="261.0" rx="11.7" ry="10.1" fill="none" stroke="#ffff00" stroke-width="1.0"/><ellipse cx="1764.4" cy="252.4" rx="8.3" ry="7.9" fill="none" stroke="#ffff00" stroke-width="1.0"/><ellipse cx="1915.3" cy="231.7" rx="6.7" ry="11.2" fill="none" stroke="#ffff00" stroke-width="1.0"/><ellipse cx="1185.6" cy="333.7" rx="12.4" ry="12.8" transform="rotate(20 1185.6 333.7)" fill="none" stroke="#ffff00" stroke-width="1.0"/><ellipse cx="1246.5" cy="373.6" rx="14.6" ry="10.8" transform="rotate(-20 1246.5 373.6)" fill="none" stroke="#ffff00" stroke-width="1.0"/><ellipse cx="1345.3" cy="375.4" rx="11.0" ry="14.2" transform="rotate(-15 1345.3 375.4)" fill="none" stroke="#ffff00" stroke-width="1.0"/><ellipse cx="1408.8" cy="359.6" rx="8.8" ry="11.9" transform="rotate(10 1408.8 359.6)" fill="none" stroke="#ffff00" stroke-width="1.0"/><ellipse cx="1219.9" cy="418.4" rx="12.8" ry="12.6" fill="none" stroke="#ffff00" stroke-width="1.0"/><ellipse cx="1276.4" cy="424.2" rx="13.0" ry="15.7" fill="none" stroke="#ffff00" stroke-width="1.0"/><ellipse cx="1303.9" cy="414.5" rx="9.4" ry="11.5" fill="none" stroke="#ffff00" stroke-width="1.0"/><ellipse cx="1315.1" cy="418.6" rx="7.9" ry="10.1" fill="none" stroke="#ffff00" stroke-width="1.0"/><ellipse cx="1351.2" cy="431.7" rx="12.8" ry="13.0" fill="none" stroke="#ffff00" stroke-width="1.0"/><ellipse cx="1397.4" cy="426.5" rx="13.9" ry="10.1" transform="rotate(10 1397.4 426.5)" fill="none" stroke="#ffff00" stroke-width="1.0"/><ellipse cx="1414.2" cy="450.1" rx="10.6" ry="10.8" fill="none" stroke="#ffff00" stroke-width="1.0"/><ellipse cx="1172.1" cy="439.5" rx="11.2" ry="12.4" fill="none" stroke="#ffff00" stroke-width="1.0"/><ellipse cx="1222.8" cy="467.0" rx="11.2" ry="15.1" transform="rotate(-25 1222.8 467.0)" fill="none" stroke="#ffff00" stroke-width="1.0"/><ellipse cx="1248.9" cy="483.9" rx="13.5" ry="12.4" fill="none" stroke="#ffff00" stroke-width="1.0"/><ellipse cx="1310.2" cy="488.0" rx="11.5" ry="16.4" transform="rotate(-10 1310.2 488.0)" fill="none" stroke="#ffff00" stroke-width="1.0"/><ellipse cx="1377.8" cy="465.9" rx="12.4" ry="8.5" fill="none" stroke="#ffff00" stroke-width="1.0"/><ellipse cx="1359.3" cy="501.3" rx="12.6" ry="13.9" transform="rotate(-20 1359.3 501.3)" fill="none" stroke="#ffff00" stroke-width="1.0"/><ellipse cx="1384.5" cy="508.7" rx="13.5" ry="11.9" fill="none" stroke="#ffff00" stroke-width="1.0"/><ellipse cx="1171.0" cy="486.6" rx="10.1" ry="12.4" fill="none" stroke="#ffff00" stroke-width="1.0"/><ellipse cx="1174.4" cy="526.7" rx="11.2" ry="11.2" fill="none" stroke="#ffff00" stroke-width="1.0"/><ellipse cx="1353.4" cy="534.6" rx="10.1" ry="7.9" fill="none" stroke="#ffff00" stroke-width="1.0"/><ellipse cx="1449.7" cy="335.3" rx="14.6" ry="11.9" transform="rotate(15 1449.7 335.3)" fill="none" stroke="#ffff00" stroke-width="1.0"/><ellipse cx="1527.4" cy="359.1" rx="7.9" ry="15.7" transform="rotate(15 1527.4 359.1)" fill="none" stroke="#ffff00" stroke-width="1.0"/><ellipse cx="1531.0" cy="386.6" rx="14.2" ry="8.5" fill="none" stroke="#ffff00" stroke-width="1.0"/><ellipse cx="1580.7" cy="373.1" rx="12.8" ry="10.8" transform="rotate(15 1580.7 373.1)" fill="none" stroke="#ffff00" stroke-width="1.0"/><ellipse cx="1636.4" cy="335.3" rx="13.7" ry="12.4" transform="rotate(15 1636.4 335.3)" fill="none" stroke="#ffff00" stroke-width="1.0"/><ellipse cx="1624.9" cy="392.0" rx="10.8" ry="9.9" fill="none" stroke="#ffff00" stroke-width="1.0"/><ellipse cx="1447.4" cy="392.0" rx="12.4" ry="11.7" fill="none" stroke="#ffff00" stroke-width="1.0"/><ellipse cx="1467.9" cy="407.3" rx="11.9" ry="9.7" fill="none" stroke="#ffff00" stroke-width="1.0"/><ellipse cx="1419.3" cy="401.7" rx="12.4" ry="10.6" fill="none" stroke="#ffff00" stroke-width="1.0"/><ellipse cx="1433.2" cy="420.2" rx="13.5" ry="15.1" transform="rotate(-30 1433.2 420.2)" fill="none" stroke="#ffff00" stroke-width="1.0"/><ellipse cx="1560.2" cy="415.7" rx="13.5" ry="11.7" fill="none" stroke="#ffff00" stroke-width="1.0"/><ellipse cx="1555.1" cy="434.4" rx="9.7" ry="9.7" fill="none" stroke="#ffff00" stroke-width="1.0"/><ellipse cx="1501.2" cy="456.9" rx="15.1" ry="10.6" fill="none" stroke="#ffff00" stroke-width="1.0"/><ellipse cx="1500.3" cy="477.2" rx="15.1" ry="11.9" fill="none" stroke="#ffff00" stroke-width="1.0"/><ellipse cx="1426.0" cy="482.1" rx="12.8" ry="12.8" fill="none" stroke="#ffff00" stroke-width="1.0"/><ellipse cx="1436.8" cy="502.4" rx="15.1" ry="12.8" fill="none" stroke="#ffff00" stroke-width="1.0"/><ellipse cx="1630.5" cy="475.6" rx="13.0" ry="11.7" transform="rotate(10 1630.5 475.6)" fill="none" stroke="#ffff00" stroke-width="1.0"/><ellipse cx="1591.1" cy="490.7" rx="11.2" ry="11.2" fill="none" stroke="#ffff00" stroke-width="1.0"/><ellipse cx="1572.4" cy="514.8" rx="11.5" ry="14.2" transform="rotate(-15 1572.4 514.8)" fill="none" stroke="#ffff00" stroke-width="1.0"/><ellipse cx="1640.0" cy="508.0" rx="14.6" ry="12.1" transform="rotate(-10 1640.0 508.0)" fill="none" stroke="#ffff00" stroke-width="1.0"/><ellipse cx="1538.6" cy="533.5" rx="12.8" ry="10.1" fill="none" stroke="#ffff00" stroke-width="1.0"/><ellipse cx="1471.1" cy="540.2" rx="12.4" ry="10.1" fill="none" stroke="#ffff00" stroke-width="1.0"/><ellipse cx="1762.1" cy="321.8" rx="13.9" ry="12.4" fill="none" stroke="#ffff00" stroke-width="1.0"/><ellipse cx="1836.9" cy="320.6" rx="12.8" ry="11.2" fill="none" stroke="#ffff00" stroke-width="1.0"/><ellipse cx="1880.3" cy="321.8" rx="14.6" ry="12.4" transform="rotate(20 1880.3 321.8)" fill="none" stroke="#ffff00" stroke-width="1.0"/><ellipse cx="1908.5" cy="324.0" rx="10.1" ry="14.6" fill="none" stroke="#ffff00" stroke-width="1.0"/><ellipse cx="1797.0" cy="325.1" rx="11.2" ry="6.7" fill="none" stroke="#ffff00" stroke-width="1.0"/><ellipse cx="1697.9" cy="374.0" rx="12.4" ry="12.4" transform="rotate(20 1697.9 374.0)" fill="none" stroke="#ffff00" stroke-width="1.0"/><ellipse cx="1682.1" cy="388.6" rx="11.9" ry="14.6" transform="rotate(-20 1682.1 388.6)" fill="none" stroke="#ffff00" stroke-width="1.0"/><ellipse cx="1733.7" cy="373.6" rx="10.6" ry="11.2" fill="none" stroke="#ffff00" stroke-width="1.0"/><ellipse cx="1779.0" cy="364.8" rx="11.2" ry="10.1" fill="none" stroke="#ffff00" stroke-width="1.0"/><ellipse cx="1844.3" cy="358.9" rx="9.0" ry="7.9" transform="rotate(30 1844.3 358.9)" fill="none" stroke="#ffff00" stroke-width="1.0"/><ellipse cx="1863.5" cy="352.2" rx="10.8" ry="12.4" fill="none" stroke="#ffff00" stroke-width="1.0"/><ellipse cx="1888.2" cy="356.7" rx="11.2" ry="15.7" fill="none" stroke="#ffff00" stroke-width="1.0"/><ellipse cx="1823.1" cy="385.9" rx="16.0" ry="11.2" transform="rotate(10 1823.1 385.9)" fill="none" stroke="#ffff00" stroke-width="1.0"/><ellipse cx="1809.6" cy="401.7" rx="14.6" ry="11.2" fill="none" stroke="#ffff00" stroke-width="1.0"/><ellipse cx="1861.9" cy="390.5" rx="11.7" ry="11.2" fill="none" stroke="#ffff00" stroke-width="1.0"/><ellipse cx="1757.1" cy="423.8" rx="13.9" ry="12.4" fill="none" stroke="#ffff00" stroke-width="1.0"/><ellipse cx="1684.4" cy="455.1" rx="10.8" ry="12.1" fill="none" stroke="#ffff00" stroke-width="1.0"/><ellipse cx="1838.7" cy="448.1" rx="16.9" ry="10.3" transform="rotate(5 1838.7 448.1)" fill="none" stroke="#ffff00" stroke-width="1.0"/><ellipse cx="1719.8" cy="476.3" rx="10.1" ry="8.8" fill="none" stroke="#ffff00" stroke-width="1.0"/><ellipse cx="1767.1" cy="477.2" rx="16.0" ry="11.7" transform="rotate(-20 1767.1 477.2)" fill="none" stroke="#ffff00" stroke-width="1.0"/><ellipse cx="1788.0" cy="500.4" rx="13.5" ry="11.9" fill="none" stroke="#ffff00" stroke-width="1.0"/><ellipse cx="1873.4" cy="495.6" rx="9.4" ry="10.1" fill="none" stroke="#ffff00" stroke-width="1.0"/><ellipse cx="1916.4" cy="459.1" rx="9.0" ry="10.6" fill="none" stroke="#ffff00" stroke-width="1.0"/><ellipse cx="1676.5" cy="534.6" rx="11.2" ry="7.9" fill="none" stroke="#ffff00" stroke-width="1.0"/><ellipse cx="1703.5" cy="533.0" rx="12.4" ry="7.9" fill="none" stroke="#ffff00" stroke-width="1.0"/><ellipse cx="1740.7" cy="533.5" rx="10.1" ry="7.9" fill="none" stroke="#ffff00" stroke-width="1.0"/>
<ellipse cx="1293.7" cy="90.2" rx="6.8" ry="5.6" fill="#6c707c" stroke="#ff0000" stroke-width="1.3"/><ellipse cx="1345.5" cy="101.5" rx="9.0" ry="10.1" fill="#6c707c" stroke="#ff0000" stroke-width="1.3"/><ellipse cx="1167.6" cy="143.2" rx="6.8" ry="12.4" fill="#6c707c" stroke="#ff0000" stroke-width="1.3"/><ellipse cx="1196.0" cy="154.7" rx="11.0" ry="9.7" fill="#6e7c98" stroke="#ff0000" stroke-width="1.3"/><ellipse cx="1218.7" cy="136.4" rx="12.4" ry="6.8" transform="rotate(35 1218.7 136.4)" fill="#6c707c" stroke="#ff0000" stroke-width="1.3"/><ellipse cx="1242.2" cy="171.8" rx="12.2" ry="8.3" transform="rotate(20 1242.2 171.8)" fill="#6c707c" stroke="#ff0000" stroke-width="1.3"/><ellipse cx="1215.6" cy="202.9" rx="13.5" ry="7.7" transform="rotate(-10 1215.6 202.9)" fill="#6c707c" stroke="#ff0000" stroke-width="1.3"/><ellipse cx="1336.1" cy="158.0" rx="9.2" ry="13.7" transform="rotate(10 1336.1 158.0)" fill="#6c707c" stroke="#ff0000" stroke-width="1.3"/><ellipse cx="1316.5" cy="178.5" rx="10.4" ry="12.8" transform="rotate(-15 1316.5 178.5)" fill="#6c707c" stroke="#ff0000" stroke-width="1.3"/><ellipse cx="1398.0" cy="164.8" rx="10.6" ry="12.8" fill="#6c707c" stroke="#ff0000" stroke-width="1.3"/><ellipse cx="1285.2" cy="223.6" rx="11.7" ry="10.6" fill="#6c707c" stroke="#ff0000" stroke-width="1.3"/><ellipse cx="1305.0" cy="219.7" rx="10.6" ry="10.8" fill="#6c707c" stroke="#ff0000" stroke-width="1.3"/><ellipse cx="1360.9" cy="217.0" rx="7.2" ry="5.2" fill="#78d8dc" stroke="#ff0000" stroke-width="1.3"/><ellipse cx="1362.4" cy="229.0" rx="7.2" ry="4.7" fill="#78d8dc" stroke="#ff0000" stroke-width="1.3"/><ellipse cx="1268.3" cy="249.9" rx="10.8" ry="9.9" transform="rotate(15 1268.3 249.9)" fill="#6c707c" stroke="#ff0000" stroke-width="1.3"/><ellipse cx="1307.5" cy="264.8" rx="8.8" ry="13.5" transform="rotate(-5 1307.5 264.8)" fill="#6c707c" stroke="#ff0000" stroke-width="1.3"/><ellipse cx="1410.9" cy="253.5" rx="11.7" ry="10.1" fill="#6c707c" stroke="#ff0000" stroke-width="1.3"/><ellipse cx="1382.7" cy="301.1" rx="12.4" ry="9.2" fill="#6c707c" stroke="#ff0000" stroke-width="1.3"/><ellipse cx="1265.1" cy="300.8" rx="11.3" ry="12.4" transform="rotate(-20 1265.1 300.8)" fill="#6c707c" stroke="#ff0000" stroke-width="1.3"/><ellipse cx="1234.5" cy="309.8" rx="10.1" ry="9.0" fill="#6c707c" stroke="#ff0000" stroke-width="1.3"/><ellipse cx="1495.4" cy="138.7" rx="12.6" ry="8.3" transform="rotate(20 1495.4 138.7)" fill="#6c707c" stroke="#ff0000" stroke-width="1.3"/><ellipse cx="1467.9" cy="163.0" rx="7.0" ry="11.7" fill="#6c707c" stroke="#ff0000" stroke-width="1.3"/><ellipse cx="1528.9" cy="183.9" rx="7.9" ry="12.6" transform="rotate(10 1528.9 183.9)" fill="#6c707c" stroke="#ff0000" stroke-width="1.3"/><ellipse cx="1439.7" cy="211.4" rx="11.9" ry="9.5" transform="rotate(15 1439.7 211.4)" fill="#6c707c" stroke="#ff0000" stroke-width="1.3"/><ellipse cx="1604.2" cy="200.4" rx="10.6" ry="7.7" transform="rotate(10 1604.2 200.4)" fill="#6e7c98" stroke="#ff0000" stroke-width="1.3"/><ellipse cx="1551.9" cy="222.0" rx="11.3" ry="10.1" fill="#6e7c98" stroke="#ff0000" stroke-width="1.3"/><ellipse cx="1587.3" cy="220.4" rx="11.3" ry="13.1" transform="rotate(-25 1587.3 220.4)" fill="#6e7c98" stroke="#ff0000" stroke-width="1.3"/><ellipse cx="1657.5" cy="122.2" rx="10.8" ry="12.8" transform="rotate(30 1657.5 122.2)" fill="#6c707c" stroke="#ff0000" stroke-width="1.3"/><ellipse cx="1436.8" cy="245.6" rx="11.7" ry="10.6" transform="rotate(-20 1436.8 245.6)" fill="#6c707c" stroke="#ff0000" stroke-width="1.3"/><ellipse cx="1537.9" cy="246.8" rx="9.0" ry="9.0" transform="rotate(30 1537.9 246.8)" fill="#6c707c" stroke="#ff0000" stroke-width="1.3"/><ellipse cx="1546.1" cy="263.2" rx="8.1" ry="8.6" fill="#6c707c" stroke="#ff0000" stroke-width="1.3"/><ellipse cx="1574.9" cy="245.9" rx="11.3" ry="9.9" transform="rotate(25 1574.9 245.9)" fill="#6c707c" stroke="#ff0000" stroke-width="1.3"/><ellipse cx="1504.2" cy="258.3" rx="10.4" ry="11.9" transform="rotate(-25 1504.2 258.3)" fill="#6c707c" stroke="#ff0000" stroke-width="1.3"/><ellipse cx="1515.4" cy="279.9" rx="14.0" ry="8.3" transform="rotate(10 1515.4 279.9)" fill="#6c707c" stroke="#ff0000" stroke-width="1.3"/><ellipse cx="1474.2" cy="278.1" rx="11.5" ry="8.1" transform="rotate(-25 1474.2 278.1)" fill="#6c707c" stroke="#ff0000" stroke-width="1.3"/><ellipse cx="1664.3" cy="250.2" rx="11.9" ry="9.7" fill="#6c707c" stroke="#ff0000" stroke-width="1.3"/><ellipse cx="1660.2" cy="272.2" rx="11.0" ry="9.9" fill="#6c707c" stroke="#ff0000" stroke-width="1.3"/><ellipse cx="1627.1" cy="288.4" rx="11.7" ry="9.2" fill="#6c707c" stroke="#ff0000" stroke-width="1.3"/><ellipse cx="1452.6" cy="318.4" rx="12.4" ry="9.0" fill="#6c707c" stroke="#ff0000" stroke-width="1.3"/><ellipse cx="1551.5" cy="313.2" rx="12.8" ry="10.1" fill="#6c707c" stroke="#ff0000" stroke-width="1.3"/><ellipse cx="1593.8" cy="313.2" rx="11.3" ry="10.8" fill="#6c707c" stroke="#ff0000" stroke-width="1.3"/><ellipse cx="1749.7" cy="104.9" rx="8.6" ry="11.3" fill="#6c707c" stroke="#ff0000" stroke-width="1.3"/><ellipse cx="1750.8" cy="134.8" rx="9.0" ry="9.7" fill="#6c707c" stroke="#ff0000" stroke-width="1.3"/><ellipse cx="1752.0" cy="195.6" rx="7.9" ry="9.0" fill="#6c707c" stroke="#ff0000" stroke-width="1.3"/><ellipse cx="1735.7" cy="277.2" rx="7.9" ry="12.4" transform="rotate(10 1735.7 277.2)" fill="#6c707c" stroke="#ff0000" stroke-width="1.3"/><ellipse cx="1704.0" cy="302.4" rx="9.5" ry="12.8" fill="#6c707c" stroke="#ff0000" stroke-width="1.3"/><ellipse cx="1747.9" cy="300.8" rx="4.5" ry="7.9" transform="rotate(25 1747.9 300.8)" fill="#6c707c" stroke="#ff0000" stroke-width="1.3"/><ellipse cx="1816.6" cy="261.0" rx="10.6" ry="9.0" fill="#6c707c" stroke="#ff0000" stroke-width="1.3"/><ellipse cx="1764.4" cy="252.4" rx="7.2" ry="6.8" fill="#6c707c" stroke="#ff0000" stroke-width="1.3"/><ellipse cx="1915.3" cy="231.7" rx="5.6" ry="10.1" fill="#6c707c" stroke="#ff0000" stroke-width="1.3"/><ellipse cx="1185.6" cy="333.7" rx="11.3" ry="11.7" transform="rotate(20 1185.6 333.7)" fill="#6e7c98" stroke="#ff0000" stroke-width="1.3"/><ellipse cx="1246.5" cy="373.6" rx="13.5" ry="9.7" transform="rotate(-20 1246.5 373.6)" fill="#6e7c98" stroke="#ff0000" stroke-width="1.3"/><ellipse cx="1345.3" cy="375.4" rx="9.9" ry="13.1" transform="rotate(-15 1345.3 375.4)" fill="#6c707c" stroke="#ff0000" stroke-width="1.3"/><ellipse cx="1408.8" cy="359.6" rx="7.7" ry="10.8" transform="rotate(10 1408.8 359.6)" fill="#6c707c" stroke="#ff0000" stroke-width="1.3"/><ellipse cx="1219.9" cy="418.4" rx="11.7" ry="11.5" fill="#6c707c" stroke="#ff0000" stroke-width="1.3"/><ellipse cx="1276.4" cy="424.2" rx="11.9" ry="14.6" fill="#6e7c98" stroke="#ff0000" stroke-width="1.3"/><ellipse cx="1303.9" cy="414.5" rx="8.3" ry="10.4" fill="#6c707c" stroke="#ff0000" stroke-width="1.3"/><ellipse cx="1315.1" cy="418.6" rx="6.8" ry="9.0" fill="#6c707c" stroke="#ff0000" stroke-width="1.3"/><ellipse cx="1351.2" cy="431.7" rx="11.7" ry="11.9" fill="#6c707c" stroke="#ff0000" stroke-width="1.3"/><ellipse cx="1397.4" cy="426.5" rx="12.8" ry="9.0" transform="rotate(10 1397.4 426.5)" fill="#6c707c" stroke="#ff0000" stroke-width="1.3"/><ellipse cx="1414.2" cy="450.1" rx="9.5" ry="9.7" fill="#6c707c" stroke="#ff0000" stroke-width="1.3"/><ellipse cx="1172.1" cy="439.5" rx="10.1" ry="11.3" fill="#6e7c98" stroke="#ff0000" stroke-width="1.3"/><ellipse cx="1222.8" cy="467.0" rx="10.1" ry="14.0" transform="rotate(-25 1222.8 467.0)" fill="#6c707c" stroke="#ff0000" stroke-width="1.3"/><ellipse cx="1248.9" cy="483.9" rx="12.4" ry="11.3" fill="#6c707c" stroke="#ff0000" stroke-width="1.3"/><ellipse cx="1310.2" cy="488.0" rx="10.4" ry="15.3" transform="rotate(-10 1310.2 488.0)" fill="#6c707c" stroke="#ff0000" stroke-width="1.3"/><ellipse cx="1377.8" cy="465.9" rx="11.3" ry="7.4" fill="#6e7c98" stroke="#ff0000" stroke-width="1.3"/><ellipse cx="1359.3" cy="501.3" rx="11.5" ry="12.8" transform="rotate(-20 1359.3 501.3)" fill="#6e7c98" stroke="#ff0000" stroke-width="1.3"/><ellipse cx="1384.5" cy="508.7" rx="12.4" ry="10.8" fill="#6c707c" stroke="#ff0000" stroke-width="1.3"/><ellipse cx="1171.0" cy="486.6" rx="9.0" ry="11.3" fill="#6c707c" stroke="#ff0000" stroke-width="1.3"/><ellipse cx="1174.4" cy="526.7" rx="10.1" ry="10.1" fill="#6c707c" stroke="#ff0000" stroke-width="1.3"/><ellipse cx="1353.4" cy="534.6" rx="9.0" ry="6.8" fill="#6c707c" stroke="#ff0000" stroke-width="1.3"/><ellipse cx="1449.7" cy="335.3" rx="13.5" ry="10.8" transform="rotate(15 1449.7 335.3)" fill="#6c707c" stroke="#ff0000" stroke-width="1.3"/><ellipse cx="1527.4" cy="359.1" rx="6.8" ry="14.6" transform="rotate(15 1527.4 359.1)" fill="#6c707c" stroke="#ff0000" stroke-width="1.3"/><ellipse cx="1531.0" cy="386.6" rx="13.1" ry="7.4" fill="#6c707c" stroke="#ff0000" stroke-width="1.3"/><ellipse cx="1580.7" cy="373.1" rx="11.7" ry="9.7" transform="rotate(15 1580.7 373.1)" fill="#6e7c98" stroke="#ff0000" stroke-width="1.3"/><ellipse cx="1636.4" cy="335.3" rx="12.6" ry="11.3" transform="rotate(15 1636.4 335.3)" fill="#6c707c" stroke="#ff0000" stroke-width="1.3"/><ellipse cx="1624.9" cy="392.0" rx="9.7" ry="8.8" fill="#6c707c" stroke="#ff0000" stroke-width="1.3"/><ellipse cx="1447.4" cy="392.0" rx="11.3" ry="10.6" fill="#6c707c" stroke="#ff0000" stroke-width="1.3"/><ellipse cx="1467.9" cy="407.3" rx="10.8" ry="8.6" fill="#6e7c98" stroke="#ff0000" stroke-width="1.3"/><ellipse cx="1419.3" cy="401.7" rx="11.3" ry="9.5" fill="#6c707c" stroke="#ff0000" stroke-width="1.3"/><ellipse cx="1433.2" cy="420.2" rx="12.4" ry="14.0" transform="rotate(-30 1433.2 420.2)" fill="#6c707c" stroke="#ff0000" stroke-width="1.3"/><ellipse cx="1560.2" cy="415.7" rx="12.4" ry="10.6" fill="#6c707c" stroke="#ff0000" stroke-width="1.3"/><ellipse cx="1555.1" cy="434.4" rx="8.6" ry="8.6" fill="#6e7c98" stroke="#ff0000" stroke-width="1.3"/><ellipse cx="1501.2" cy="456.9" rx="14.0" ry="9.5" fill="#6c707c" stroke="#ff0000" stroke-width="1.3"/><ellipse cx="1500.3" cy="477.2" rx="14.0" ry="10.8" fill="#6c707c" stroke="#ff0000" stroke-width="1.3"/><ellipse cx="1426.0" cy="482.1" rx="11.7" ry="11.7" fill="#6c707c" stroke="#ff0000" stroke-width="1.3"/><ellipse cx="1436.8" cy="502.4" rx="14.0" ry="11.7" fill="#6e7c98" stroke="#ff0000" stroke-width="1.3"/><ellipse cx="1630.5" cy="475.6" rx="11.9" ry="10.6" transform="rotate(10 1630.5 475.6)" fill="#6c707c" stroke="#ff0000" stroke-width="1.3"/><ellipse cx="1591.1" cy="490.7" rx="10.1" ry="10.1" fill="#6c707c" stroke="#ff0000" stroke-width="1.3"/><ellipse cx="1572.4" cy="514.8" rx="10.4" ry="13.1" transform="rotate(-15 1572.4 514.8)" fill="#6c707c" stroke="#ff0000" stroke-width="1.3"/><ellipse cx="1640.0" cy="508.0" rx="13.5" ry="11.0" transform="rotate(-10 1640.0 508.0)" fill="#6e7c98" stroke="#ff0000" stroke-width="1.3"/><ellipse cx="1538.6" cy="533.5" rx="11.7" ry="9.0" fill="#6c707c" stroke="#ff0000" stroke-width="1.3"/><ellipse cx="1471.1" cy="540.2" rx="11.3" ry="9.0" fill="#6c707c" stroke="#ff0000" stroke-width="1.3"/><ellipse cx="1762.1" cy="321.8" rx="12.8" ry="11.3" fill="#6c707c" stroke="#ff0000" stroke-width="1.3"/><ellipse cx="1836.9" cy="320.6" rx="11.7" ry="10.1" fill="#6c707c" stroke="#ff0000" stroke-width="1.3"/><ellipse cx="1880.3" cy="321.8" rx="13.5" ry="11.3" transform="rotate(20 1880.3 321.8)" fill="#6c707c" stroke="#ff0000" stroke-width="1.3"/><ellipse cx="1908.5" cy="324.0" rx="9.0" ry="13.5" fill="#6c707c" stroke="#ff0000" stroke-width="1.3"/><ellipse cx="1797.0" cy="325.1" rx="10.1" ry="5.6" fill="#78d8dc" stroke="#ff0000" stroke-width="1.3"/><ellipse cx="1697.9" cy="374.0" rx="11.3" ry="11.3" transform="rotate(20 1697.9 374.0)" fill="#6e7c98" stroke="#ff0000" stroke-width="1.3"/><ellipse cx="1682.1" cy="388.6" rx="10.8" ry="13.5" transform="rotate(-20 1682.1 388.6)" fill="#6c707c" stroke="#ff0000" stroke-width="1.3"/><ellipse cx="1733.7" cy="373.6" rx="9.5" ry="10.1" fill="#6c707c" stroke="#ff0000" stroke-width="1.3"/><ellipse cx="1779.0" cy="364.8" rx="10.1" ry="9.0" fill="#6c707c" stroke="#ff0000" stroke-width="1.3"/><ellipse cx="1844.3" cy="358.9" rx="7.9" ry="6.8" transform="rotate(30 1844.3 358.9)" fill="#78d8dc" stroke="#ff0000" stroke-width="1.3"/><ellipse cx="1863.5" cy="352.2" rx="9.7" ry="11.3" fill="#6c707c" stroke="#ff0000" stroke-width="1.3"/><ellipse cx="1888.2" cy="356.7" rx="10.1" ry="14.6" fill="#6c707c" stroke="#ff0000" stroke-width="1.3"/><ellipse cx="1823.1" cy="385.9" rx="14.9" ry="10.1" transform="rotate(10 1823.1 385.9)" fill="#6c707c" stroke="#ff0000" stroke-width="1.3"/><ellipse cx="1809.6" cy="401.7" rx="13.5" ry="10.1" fill="#6c707c" stroke="#ff0000" stroke-width="1.3"/><ellipse cx="1861.9" cy="390.5" rx="10.6" ry="10.1" fill="#607060" stroke="#ff0000" stroke-width="1.3"/><ellipse cx="1757.1" cy="423.8" rx="12.8" ry="11.3" fill="#6c707c" stroke="#ff0000" stroke-width="1.3"/><ellipse cx="1684.4" cy="455.1" rx="9.7" ry="11.0" fill="#6c707c" stroke="#ff0000" stroke-width="1.3"/><ellipse cx="1838.7" cy="448.1" rx="15.8" ry="9.2" transform="rotate(5 1838.7 448.1)" fill="#6c707c" stroke="#ff0000" stroke-width="1.3"/><ellipse cx="1719.8" cy="476.3" rx="9.0" ry="7.7" fill="#6c707c" stroke="#ff0000" stroke-width="1.3"/><ellipse cx="1767.1" cy="477.2" rx="14.9" ry="10.6" transform="rotate(-20 1767.1 477.2)" fill="#6c707c" stroke="#ff0000" stroke-width="1.3"/><ellipse cx="1788.0" cy="500.4" rx="12.4" ry="10.8" fill="#6c707c" stroke="#ff0000" stroke-width="1.3"/><ellipse cx="1873.4" cy="495.6" rx="8.3" ry="9.0" fill="#6c707c" stroke="#ff0000" stroke-width="1.3"/><ellipse cx="1916.4" cy="459.1" rx="7.9" ry="9.5" fill="#6c707c" stroke="#ff0000" stroke-width="1.3"/><ellipse cx="1676.5" cy="534.6" rx="10.1" ry="6.8" fill="#6c707c" stroke="#ff0000" stroke-width="1.3"/><ellipse cx="1703.5" cy="533.0" rx="11.3" ry="6.8" fill="#607060" stroke="#ff0000" stroke-width="1.3"/><ellipse cx="1740.7" cy="533.5" rx="9.0" ry="6.8" fill="#6c707c" stroke="#ff0000" stroke-width="1.3"/>
</g>
<circle cx="1295.2" cy="92.2" r="2.1" fill="#4a5050" opacity="0.35"/><circle cx="1292.9" cy="90.3" r="2.3" fill="#4a5050" opacity="0.35"/><circle cx="1294.5" cy="88.6" r="1.9" fill="#4a5050" opacity="0.35"/><circle cx="1293.7" cy="90.3" r="1.7" fill="#4a5050" opacity="0.35"/><circle cx="1345.2" cy="101.3" r="2.3" fill="#4a5050" opacity="0.35"/><circle cx="1345.7" cy="102.9" r="1.4" fill="#4a5050" opacity="0.35"/><circle cx="1349.5" cy="101.4" r="2.4" fill="#4a5050" opacity="0.35"/><circle cx="1345.4" cy="101.4" r="1.7" fill="#4a5050" opacity="0.35"/><circle cx="1167.2" cy="143.2" r="2.4" fill="#4a5050" opacity="0.35"/><circle cx="1167.2" cy="144.0" r="2.3" fill="#4a5050" opacity="0.35"/><circle cx="1170.3" cy="148.0" r="1.8" fill="#4a5050" opacity="0.35"/><circle cx="1166.3" cy="142.4" r="1.9" fill="#4a5050" opacity="0.35"/><circle cx="1196.1" cy="154.9" r="2.3" fill="#4a5050" opacity="0.35"/><circle cx="1196.5" cy="159.2" r="1.6" fill="#4a5050" opacity="0.35"/><circle cx="1201.8" cy="153.6" r="2.2" fill="#4a5050" opacity="0.35"/><circle cx="1196.3" cy="151.3" r="2.2" fill="#4a5050" opacity="0.35"/><circle cx="1221.3" cy="137.8" r="2.3" fill="#4a5050" opacity="0.35"/><circle cx="1220.8" cy="140.0" r="2.4" fill="#4a5050" opacity="0.35"/><circle cx="1216.5" cy="137.2" r="1.8" fill="#4a5050" opacity="0.35"/><circle cx="1213.2" cy="139.1" r="1.8" fill="#4a5050" opacity="0.35"/><circle cx="1242.8" cy="171.9" r="2.2" fill="#4a5050" opacity="0.35"/><circle cx="1245.8" cy="171.7" r="1.9" fill="#4a5050" opacity="0.35"/><circle cx="1237.0" cy="170.6" r="1.6" fill="#4a5050" opacity="0.35"/><circle cx="1239.0" cy="170.0" r="2.0" fill="#4a5050" opacity="0.35"/><circle cx="1216.2" cy="203.6" r="1.7" fill="#4a5050" opacity="0.35"/><circle cx="1218.1" cy="202.2" r="2.0" fill="#4a5050" opacity="0.35"/><circle cx="1215.3" cy="203.3" r="1.4" fill="#4a5050" opacity="0.35"/><circle cx="1218.0" cy="199.6" r="1.7" fill="#4a5050" opacity="0.35"/><circle cx="1334.6" cy="152.9" r="2.4" fill="#4a5050" opacity="0.35"/><circle cx="1338.3" cy="157.2" r="2.5" fill="#4a5050" opacity="0.35"/><circle cx="1339.3" cy="156.9" r="2.4" fill="#4a5050" opacity="0.35"/><circle cx="1334.0" cy="158.2" r="1.6" fill="#4a5050" opacity="0.35"/><circle cx="1317.2" cy="177.7" r="1.4" fill="#4a5050" opacity="0.35"/><circle cx="1318.1" cy="172.9" r="1.9" fill="#4a5050" opacity="0.35"/><circle cx="1316.7" cy="178.2" r="1.6" fill="#4a5050" opacity="0.35"/><circle cx="1315.8" cy="181.7" r="1.5" fill="#4a5050" opacity="0.35"/><circle cx="1400.0" cy="165.9" r="2.4" fill="#4a5050" opacity="0.35"/><circle cx="1402.7" cy="164.2" r="1.9" fill="#4a5050" opacity="0.35"/><circle cx="1397.9" cy="172.2" r="1.9" fill="#4a5050" opacity="0.35"/><circle cx="1398.0" cy="164.6" r="1.6" fill="#4a5050" opacity="0.35"/><circle cx="1288.1" cy="219.3" r="2.4" fill="#4a5050" opacity="0.35"/><circle cx="1282.8" cy="222.0" r="2.0" fill="#4a5050" opacity="0.35"/><circle cx="1286.5" cy="222.0" r="1.9" fill="#4a5050" opacity="0.35"/><circle cx="1284.3" cy="228.4" r="1.3" fill="#4a5050" opacity="0.35"/><circle cx="1302.6" cy="214.1" r="1.3" fill="#4a5050" opacity="0.35"/><circle cx="1301.6" cy="217.4" r="2.3" fill="#4a5050" opacity="0.35"/><circle cx="1303.6" cy="218.9" r="1.8" fill="#4a5050" opacity="0.35"/><circle cx="1310.6" cy="218.2" r="1.5" fill="#4a5050" opacity="0.35"/><circle cx="1268.8" cy="250.2" r="1.3" fill="#4a5050" opacity="0.35"/><circle cx="1267.4" cy="250.2" r="2.3" fill="#4a5050" opacity="0.35"/><circle cx="1267.8" cy="249.3" r="1.9" fill="#4a5050" opacity="0.35"/><circle cx="1266.9" cy="252.6" r="1.6" fill="#4a5050" opacity="0.35"/><circle cx="1308.0" cy="266.1" r="1.8" fill="#4a5050" opacity="0.35"/><circle cx="1306.8" cy="260.5" r="1.4" fill="#4a5050" opacity="0.35"/><circle cx="1306.4" cy="257.9" r="2.2" fill="#4a5050" opacity="0.35"/><circle cx="1307.5" cy="264.7" r="1.9" fill="#4a5050" opacity="0.35"/><circle cx="1415.8" cy="255.3" r="1.5" fill="#4a5050" opacity="0.35"/><circle cx="1410.4" cy="252.0" r="2.1" fill="#4a5050" opacity="0.35"/><circle cx="1410.8" cy="253.8" r="1.8" fill="#4a5050" opacity="0.35"/><circle cx="1408.6" cy="258.6" r="1.7" fill="#4a5050" opacity="0.35"/><circle cx="1378.6" cy="301.0" r="2.4" fill="#4a5050" opacity="0.35"/><circle cx="1386.4" cy="303.0" r="1.9" fill="#4a5050" opacity="0.35"/><circle cx="1382.0" cy="295.7" r="1.7" fill="#4a5050" opacity="0.35"/><circle cx="1381.5" cy="298.3" r="2.0" fill="#4a5050" opacity="0.35"/><circle cx="1270.2" cy="303.2" r="2.5" fill="#4a5050" opacity="0.35"/><circle cx="1263.8" cy="302.7" r="2.5" fill="#4a5050" opacity="0.35"/><circle cx="1265.5" cy="301.2" r="1.4" fill="#4a5050" opacity="0.35"/><circle cx="1267.2" cy="295.6" r="1.8" fill="#4a5050" opacity="0.35"/><circle cx="1234.4" cy="309.8" r="2.1" fill="#4a5050" opacity="0.35"/><circle cx="1231.6" cy="310.8" r="1.8" fill="#4a5050" opacity="0.35"/><circle cx="1233.4" cy="310.5" r="1.4" fill="#4a5050" opacity="0.35"/><circle cx="1233.1" cy="310.4" r="2.1" fill="#4a5050" opacity="0.35"/><circle cx="1497.6" cy="135.4" r="1.8" fill="#4a5050" opacity="0.35"/><circle cx="1495.6" cy="140.6" r="1.9" fill="#4a5050" opacity="0.35"/><circle cx="1490.4" cy="135.1" r="1.4" fill="#4a5050" opacity="0.35"/><circle cx="1491.7" cy="139.0" r="2.2" fill="#4a5050" opacity="0.35"/><circle cx="1470.4" cy="159.5" r="2.1" fill="#4a5050" opacity="0.35"/><circle cx="1468.1" cy="158.3" r="2.3" fill="#4a5050" opacity="0.35"/><circle cx="1467.0" cy="158.4" r="1.6" fill="#4a5050" opacity="0.35"/><circle cx="1469.3" cy="161.6" r="2.0" fill="#4a5050" opacity="0.35"/><circle cx="1531.0" cy="177.4" r="2.5" fill="#4a5050" opacity="0.35"/><circle cx="1530.4" cy="184.0" r="1.7" fill="#4a5050" opacity="0.35"/><circle cx="1528.4" cy="184.6" r="2.0" fill="#4a5050" opacity="0.35"/><circle cx="1530.2" cy="185.0" r="2.4" fill="#4a5050" opacity="0.35"/><circle cx="1439.6" cy="208.8" r="1.4" fill="#4a5050" opacity="0.35"/><circle cx="1444.6" cy="210.3" r="1.5" fill="#4a5050" opacity="0.35"/><circle cx="1437.4" cy="214.5" r="2.1" fill="#4a5050" opacity="0.35"/><circle cx="1439.3" cy="216.8" r="1.7" fill="#4a5050" opacity="0.35"/><circle cx="1604.0" cy="204.3" r="1.5" fill="#4a5050" opacity="0.35"/><circle cx="1603.6" cy="199.5" r="2.0" fill="#4a5050" opacity="0.35"/><circle cx="1603.7" cy="202.1" r="2.4" fill="#4a5050" opacity="0.35"/><circle cx="1601.4" cy="200.8" r="2.0" fill="#4a5050" opacity="0.35"/><circle cx="1551.7" cy="223.0" r="1.8" fill="#4a5050" opacity="0.35"/><circle cx="1551.7" cy="223.1" r="2.5" fill="#4a5050" opacity="0.35"/><circle cx="1557.3" cy="223.1" r="2.4" fill="#4a5050" opacity="0.35"/><circle cx="1551.9" cy="221.9" r="1.9" fill="#4a5050" opacity="0.35"/><circle cx="1591.3" cy="221.6" r="2.1" fill="#4a5050" opacity="0.35"/><circle cx="1587.3" cy="220.5" r="2.0" fill="#4a5050" opacity="0.35"/><circle cx="1589.0" cy="221.8" r="1.8" fill="#4a5050" opacity="0.35"/><circle cx="1589.2" cy="218.6" r="1.5" fill="#4a5050" opacity="0.35"/><circle cx="1658.9" cy="116.1" r="1.9" fill="#4a5050" opacity="0.35"/><circle cx="1658.7" cy="122.7" r="1.8" fill="#4a5050" opacity="0.35"/><circle cx="1656.2" cy="121.7" r="2.3" fill="#4a5050" opacity="0.35"/><circle cx="1660.9" cy="116.3" r="2.4" fill="#4a5050" opacity="0.35"/><circle cx="1440.9" cy="246.1" r="1.4" fill="#4a5050" opacity="0.35"/><circle cx="1441.1" cy="242.9" r="2.2" fill="#4a5050" opacity="0.35"/><circle cx="1437.0" cy="246.0" r="2.3" fill="#4a5050" opacity="0.35"/><circle cx="1433.4" cy="243.2" r="1.9" fill="#4a5050" opacity="0.35"/><circle cx="1538.5" cy="245.0" r="1.6" fill="#4a5050" opacity="0.35"/><circle cx="1537.0" cy="248.1" r="2.1" fill="#4a5050" opacity="0.35"/><circle cx="1538.2" cy="246.5" r="1.4" fill="#4a5050" opacity="0.35"/><circle cx="1534.3" cy="246.5" r="1.5" fill="#4a5050" opacity="0.35"/><circle cx="1546.0" cy="263.5" r="1.3" fill="#4a5050" opacity="0.35"/><circle cx="1542.7" cy="263.3" r="2.1" fill="#4a5050" opacity="0.35"/><circle cx="1546.3" cy="263.7" r="2.4" fill="#4a5050" opacity="0.35"/><circle cx="1544.1" cy="262.7" r="2.1" fill="#4a5050" opacity="0.35"/><circle cx="1574.4" cy="242.8" r="1.4" fill="#4a5050" opacity="0.35"/><circle cx="1575.6" cy="244.7" r="1.3" fill="#4a5050" opacity="0.35"/><circle cx="1572.7" cy="248.4" r="2.1" fill="#4a5050" opacity="0.35"/><circle cx="1577.1" cy="249.6" r="1.9" fill="#4a5050" opacity="0.35"/><circle cx="1506.9" cy="263.4" r="2.3" fill="#4a5050" opacity="0.35"/><circle cx="1507.7" cy="255.6" r="1.6" fill="#4a5050" opacity="0.35"/><circle cx="1505.1" cy="251.9" r="1.9" fill="#4a5050" opacity="0.35"/><circle cx="1509.2" cy="254.5" r="1.8" fill="#4a5050" opacity="0.35"/><circle cx="1522.8" cy="278.2" r="2.3" fill="#4a5050" opacity="0.35"/><circle cx="1518.4" cy="280.0" r="2.0" fill="#4a5050" opacity="0.35"/><circle cx="1510.5" cy="277.5" r="2.1" fill="#4a5050" opacity="0.35"/><circle cx="1519.5" cy="283.8" r="1.9" fill="#4a5050" opacity="0.35"/><circle cx="1475.3" cy="277.4" r="2.5" fill="#4a5050" opacity="0.35"/><circle cx="1469.2" cy="276.8" r="2.2" fill="#4a5050" opacity="0.35"/><circle cx="1476.1" cy="276.9" r="1.4" fill="#4a5050" opacity="0.35"/><circle cx="1473.2" cy="278.6" r="1.9" fill="#4a5050" opacity="0.35"/><circle cx="1665.3" cy="248.2" r="1.5" fill="#4a5050" opacity="0.35"/><circle cx="1667.3" cy="250.6" r="2.0" fill="#4a5050" opacity="0.35"/><circle cx="1669.0" cy="250.8" r="1.6" fill="#4a5050" opacity="0.35"/><circle cx="1669.5" cy="253.5" r="1.9" fill="#4a5050" opacity="0.35"/><circle cx="1662.9" cy="270.4" r="1.4" fill="#4a5050" opacity="0.35"/><circle cx="1660.4" cy="274.7" r="2.1" fill="#4a5050" opacity="0.35"/><circle cx="1660.9" cy="267.8" r="2.1" fill="#4a5050" opacity="0.35"/><circle cx="1660.2" cy="274.8" r="1.8" fill="#4a5050" opacity="0.35"/><circle cx="1625.3" cy="288.5" r="1.9" fill="#4a5050" opacity="0.35"/><circle cx="1626.9" cy="288.5" r="2.3" fill="#4a5050" opacity="0.35"/><circle cx="1622.3" cy="286.1" r="2.2" fill="#4a5050" opacity="0.35"/><circle cx="1626.3" cy="283.0" r="1.8" fill="#4a5050" opacity="0.35"/><circle cx="1452.6" cy="318.4" r="2.1" fill="#4a5050" opacity="0.35"/><circle cx="1448.9" cy="316.9" r="2.5" fill="#4a5050" opacity="0.35"/><circle cx="1453.1" cy="319.6" r="2.2" fill="#4a5050" opacity="0.35"/><circle cx="1454.0" cy="316.0" r="1.4" fill="#4a5050" opacity="0.35"/><circle cx="1547.1" cy="316.9" r="1.9" fill="#4a5050" opacity="0.35"/><circle cx="1548.5" cy="313.8" r="2.1" fill="#4a5050" opacity="0.35"/><circle cx="1547.1" cy="310.8" r="2.3" fill="#4a5050" opacity="0.35"/><circle cx="1551.5" cy="310.9" r="1.6" fill="#4a5050" opacity="0.35"/><circle cx="1594.9" cy="308.2" r="2.4" fill="#4a5050" opacity="0.35"/><circle cx="1595.6" cy="318.4" r="2.4" fill="#4a5050" opacity="0.35"/><circle cx="1595.6" cy="314.1" r="2.1" fill="#4a5050" opacity="0.35"/><circle cx="1597.2" cy="317.5" r="1.6" fill="#4a5050" opacity="0.35"/><circle cx="1749.1" cy="103.1" r="1.6" fill="#4a5050" opacity="0.35"/><circle cx="1750.4" cy="108.1" r="2.2" fill="#4a5050" opacity="0.35"/><circle cx="1750.4" cy="109.4" r="1.7" fill="#4a5050" opacity="0.35"/><circle cx="1748.6" cy="102.9" r="1.5" fill="#4a5050" opacity="0.35"/><circle cx="1751.0" cy="135.1" r="2.1" fill="#4a5050" opacity="0.35"/><circle cx="1750.3" cy="135.2" r="2.4" fill="#4a5050" opacity="0.35"/><circle cx="1750.8" cy="134.7" r="2.2" fill="#4a5050" opacity="0.35"/><circle cx="1748.9" cy="133.4" r="1.9" fill="#4a5050" opacity="0.35"/><circle cx="1753.7" cy="195.2" r="2.1" fill="#4a5050" opacity="0.35"/><circle cx="1750.8" cy="194.2" r="1.7" fill="#4a5050" opacity="0.35"/><circle cx="1752.1" cy="192.2" r="1.8" fill="#4a5050" opacity="0.35"/><circle cx="1750.9" cy="195.5" r="2.2" fill="#4a5050" opacity="0.35"/><circle cx="1738.8" cy="277.8" r="1.8" fill="#4a5050" opacity="0.35"/><circle cx="1736.2" cy="281.5" r="2.0" fill="#4a5050" opacity="0.35"/><circle cx="1737.7" cy="279.1" r="1.5" fill="#4a5050" opacity="0.35"/><circle cx="1736.2" cy="274.9" r="1.7" fill="#4a5050" opacity="0.35"/><circle cx="1704.0" cy="302.8" r="1.5" fill="#4a5050" opacity="0.35"/><circle cx="1706.0" cy="306.3" r="2.3" fill="#4a5050" opacity="0.35"/><circle cx="1704.1" cy="303.3" r="1.9" fill="#4a5050" opacity="0.35"/><circle cx="1705.7" cy="304.5" r="2.2" fill="#4a5050" opacity="0.35"/><circle cx="1748.5" cy="304.0" r="1.9" fill="#4a5050" opacity="0.35"/><circle cx="1748.5" cy="301.4" r="2.0" fill="#4a5050" opacity="0.35"/><circle cx="1748.4" cy="301.4" r="2.0" fill="#4a5050" opacity="0.35"/><circle cx="1748.5" cy="298.6" r="2.1" fill="#4a5050" opacity="0.35"/><circle cx="1818.5" cy="261.1" r="1.7" fill="#4a5050" opacity="0.35"/><circle cx="1818.5" cy="260.0" r="2.2" fill="#4a5050" opacity="0.35"/><circle cx="1819.7" cy="261.5" r="2.4" fill="#4a5050" opacity="0.35"/><circle cx="1817.1" cy="257.9" r="1.5" fill="#4a5050" opacity="0.35"/><circle cx="1764.7" cy="252.3" r="2.5" fill="#4a5050" opacity="0.35"/><circle cx="1764.9" cy="249.5" r="1.9" fill="#4a5050" opacity="0.35"/><circle cx="1765.1" cy="253.6" r="2.1" fill="#4a5050" opacity="0.35"/><circle cx="1763.4" cy="251.1" r="2.3" fill="#4a5050" opacity="0.35"/><circle cx="1916.2" cy="232.3" r="1.4" fill="#4a5050" opacity="0.35"/><circle cx="1914.0" cy="236.0" r="2.2" fill="#4a5050" opacity="0.35"/><circle cx="1915.9" cy="233.2" r="1.4" fill="#4a5050" opacity="0.35"/><circle cx="1914.5" cy="229.4" r="1.6" fill="#4a5050" opacity="0.35"/><circle cx="1181.5" cy="338.0" r="1.8" fill="#4a5050" opacity="0.35"/><circle cx="1184.1" cy="329.6" r="1.9" fill="#4a5050" opacity="0.35"/><circle cx="1183.3" cy="332.8" r="1.5" fill="#4a5050" opacity="0.35"/><circle cx="1183.6" cy="333.8" r="1.7" fill="#4a5050" opacity="0.35"/><circle cx="1249.3" cy="378.4" r="1.8" fill="#4a5050" opacity="0.35"/><circle cx="1246.5" cy="373.7" r="1.6" fill="#4a5050" opacity="0.35"/><circle cx="1248.3" cy="372.1" r="2.1" fill="#4a5050" opacity="0.35"/><circle cx="1247.1" cy="377.3" r="1.8" fill="#4a5050" opacity="0.35"/><circle cx="1345.1" cy="371.2" r="1.8" fill="#4a5050" opacity="0.35"/><circle cx="1344.7" cy="379.9" r="2.3" fill="#4a5050" opacity="0.35"/><circle cx="1344.3" cy="371.8" r="1.7" fill="#4a5050" opacity="0.35"/><circle cx="1349.2" cy="371.2" r="1.5" fill="#4a5050" opacity="0.35"/><circle cx="1407.3" cy="355.1" r="2.1" fill="#4a5050" opacity="0.35"/><circle cx="1412.8" cy="358.3" r="1.6" fill="#4a5050" opacity="0.35"/><circle cx="1410.3" cy="359.6" r="1.8" fill="#4a5050" opacity="0.35"/><circle cx="1409.6" cy="359.4" r="1.8" fill="#4a5050" opacity="0.35"/><circle cx="1218.5" cy="417.0" r="1.6" fill="#4a5050" opacity="0.35"/><circle cx="1221.1" cy="414.3" r="2.2" fill="#4a5050" opacity="0.35"/><circle cx="1221.4" cy="412.6" r="2.4" fill="#4a5050" opacity="0.35"/><circle cx="1222.9" cy="412.3" r="1.9" fill="#4a5050" opacity="0.35"/><circle cx="1275.3" cy="419.9" r="2.5" fill="#4a5050" opacity="0.35"/><circle cx="1274.7" cy="421.1" r="2.1" fill="#4a5050" opacity="0.35"/><circle cx="1276.1" cy="425.3" r="1.8" fill="#4a5050" opacity="0.35"/><circle cx="1276.4" cy="424.3" r="1.4" fill="#4a5050" opacity="0.35"/><circle cx="1300.2" cy="415.9" r="1.4" fill="#4a5050" opacity="0.35"/><circle cx="1303.5" cy="414.0" r="1.9" fill="#4a5050" opacity="0.35"/><circle cx="1303.3" cy="417.2" r="2.2" fill="#4a5050" opacity="0.35"/><circle cx="1302.2" cy="415.8" r="2.2" fill="#4a5050" opacity="0.35"/><circle cx="1316.2" cy="419.9" r="2.1" fill="#4a5050" opacity="0.35"/><circle cx="1317.2" cy="414.0" r="1.6" fill="#4a5050" opacity="0.35"/><circle cx="1314.2" cy="417.4" r="2.1" fill="#4a5050" opacity="0.35"/><circle cx="1315.5" cy="418.0" r="1.7" fill="#4a5050" opacity="0.35"/><circle cx="1353.5" cy="430.7" r="2.1" fill="#4a5050" opacity="0.35"/><circle cx="1352.0" cy="429.9" r="2.2" fill="#4a5050" opacity="0.35"/><circle cx="1353.6" cy="431.7" r="1.5" fill="#4a5050" opacity="0.35"/><circle cx="1350.3" cy="432.9" r="1.3" fill="#4a5050" opacity="0.35"/><circle cx="1397.8" cy="425.6" r="2.0" fill="#4a5050" opacity="0.35"/><circle cx="1391.2" cy="425.0" r="2.3" fill="#4a5050" opacity="0.35"/><circle cx="1396.4" cy="425.9" r="2.2" fill="#4a5050" opacity="0.35"/><circle cx="1403.2" cy="429.4" r="1.7" fill="#4a5050" opacity="0.35"/><circle cx="1414.2" cy="451.4" r="1.8" fill="#4a5050" opacity="0.35"/><circle cx="1415.5" cy="445.3" r="2.2" fill="#4a5050" opacity="0.35"/><circle cx="1414.1" cy="448.7" r="1.7" fill="#4a5050" opacity="0.35"/><circle cx="1413.4" cy="452.5" r="2.3" fill="#4a5050" opacity="0.35"/><circle cx="1172.6" cy="439.5" r="2.5" fill="#4a5050" opacity="0.35"/><circle cx="1174.6" cy="438.0" r="2.1" fill="#4a5050" opacity="0.35"/><circle cx="1172.4" cy="438.3" r="2.0" fill="#4a5050" opacity="0.35"/><circle cx="1177.4" cy="438.9" r="2.4" fill="#4a5050" opacity="0.35"/><circle cx="1226.5" cy="470.1" r="1.9" fill="#4a5050" opacity="0.35"/><circle cx="1223.7" cy="466.3" r="2.0" fill="#4a5050" opacity="0.35"/><circle cx="1226.4" cy="471.7" r="2.2" fill="#4a5050" opacity="0.35"/><circle cx="1224.6" cy="467.5" r="1.5" fill="#4a5050" opacity="0.35"/><circle cx="1245.8" cy="480.7" r="1.4" fill="#4a5050" opacity="0.35"/><circle cx="1255.8" cy="481.9" r="1.8" fill="#4a5050" opacity="0.35"/><circle cx="1246.5" cy="482.8" r="2.0" fill="#4a5050" opacity="0.35"/><circle cx="1246.3" cy="485.7" r="2.2" fill="#4a5050" opacity="0.35"/><circle cx="1310.9" cy="490.5" r="2.2" fill="#4a5050" opacity="0.35"/><circle cx="1310.3" cy="488.6" r="2.4" fill="#4a5050" opacity="0.35"/><circle cx="1311.6" cy="491.2" r="1.7" fill="#4a5050" opacity="0.35"/><circle cx="1310.0" cy="491.2" r="1.9" fill="#4a5050" opacity="0.35"/><circle cx="1380.4" cy="467.5" r="1.4" fill="#4a5050" opacity="0.35"/><circle cx="1379.0" cy="466.3" r="1.6" fill="#4a5050" opacity="0.35"/><circle cx="1376.7" cy="467.0" r="2.3" fill="#4a5050" opacity="0.35"/><circle cx="1376.0" cy="464.1" r="2.2" fill="#4a5050" opacity="0.35"/><circle cx="1358.4" cy="499.0" r="2.0" fill="#4a5050" opacity="0.35"/><circle cx="1359.2" cy="497.1" r="2.2" fill="#4a5050" opacity="0.35"/><circle cx="1355.0" cy="496.0" r="1.6" fill="#4a5050" opacity="0.35"/><circle cx="1356.1" cy="494.6" r="1.9" fill="#4a5050" opacity="0.35"/><circle cx="1385.1" cy="508.3" r="2.2" fill="#4a5050" opacity="0.35"/><circle cx="1384.0" cy="513.5" r="1.8" fill="#4a5050" opacity="0.35"/><circle cx="1382.7" cy="508.3" r="1.6" fill="#4a5050" opacity="0.35"/><circle cx="1387.7" cy="505.6" r="2.1" fill="#4a5050" opacity="0.35"/><circle cx="1172.2" cy="487.9" r="2.5" fill="#4a5050" opacity="0.35"/><circle cx="1171.8" cy="490.1" r="2.1" fill="#4a5050" opacity="0.35"/><circle cx="1168.0" cy="486.4" r="2.5" fill="#4a5050" opacity="0.35"/><circle cx="1171.3" cy="485.1" r="1.8" fill="#4a5050" opacity="0.35"/><circle cx="1170.7" cy="528.7" r="2.1" fill="#4a5050" opacity="0.35"/><circle cx="1174.1" cy="530.9" r="1.8" fill="#4a5050" opacity="0.35"/><circle cx="1176.1" cy="526.9" r="1.8" fill="#4a5050" opacity="0.35"/><circle cx="1175.7" cy="530.6" r="2.5" fill="#4a5050" opacity="0.35"/><circle cx="1356.5" cy="533.5" r="2.3" fill="#4a5050" opacity="0.35"/><circle cx="1350.3" cy="534.7" r="2.4" fill="#4a5050" opacity="0.35"/><circle cx="1355.3" cy="535.1" r="1.7" fill="#4a5050" opacity="0.35"/><circle cx="1352.2" cy="536.1" r="1.4" fill="#4a5050" opacity="0.35"/><circle cx="1446.3" cy="329.7" r="1.6" fill="#4a5050" opacity="0.35"/><circle cx="1450.7" cy="337.3" r="2.3" fill="#4a5050" opacity="0.35"/><circle cx="1450.6" cy="340.2" r="1.5" fill="#4a5050" opacity="0.35"/><circle cx="1444.8" cy="332.6" r="2.1" fill="#4a5050" opacity="0.35"/><circle cx="1530.7" cy="363.4" r="2.3" fill="#4a5050" opacity="0.35"/><circle cx="1523.9" cy="360.0" r="2.0" fill="#4a5050" opacity="0.35"/><circle cx="1528.1" cy="362.2" r="2.3" fill="#4a5050" opacity="0.35"/><circle cx="1527.2" cy="359.2" r="1.5" fill="#4a5050" opacity="0.35"/><circle cx="1532.8" cy="389.0" r="2.1" fill="#4a5050" opacity="0.35"/><circle cx="1528.0" cy="387.2" r="2.5" fill="#4a5050" opacity="0.35"/><circle cx="1528.1" cy="389.1" r="1.5" fill="#4a5050" opacity="0.35"/><circle cx="1529.6" cy="386.6" r="1.4" fill="#4a5050" opacity="0.35"/><circle cx="1580.3" cy="373.7" r="1.8" fill="#4a5050" opacity="0.35"/><circle cx="1578.5" cy="370.5" r="2.3" fill="#4a5050" opacity="0.35"/><circle cx="1580.2" cy="373.2" r="2.2" fill="#4a5050" opacity="0.35"/><circle cx="1576.4" cy="375.6" r="2.5" fill="#4a5050" opacity="0.35"/><circle cx="1634.5" cy="335.0" r="1.7" fill="#4a5050" opacity="0.35"/><circle cx="1634.0" cy="335.3" r="1.4" fill="#4a5050" opacity="0.35"/><circle cx="1632.4" cy="337.9" r="2.3" fill="#4a5050" opacity="0.35"/><circle cx="1636.9" cy="329.3" r="2.3" fill="#4a5050" opacity="0.35"/><circle cx="1621.7" cy="393.8" r="1.4" fill="#4a5050" opacity="0.35"/><circle cx="1626.0" cy="388.4" r="1.6" fill="#4a5050" opacity="0.35"/><circle cx="1623.3" cy="392.3" r="2.3" fill="#4a5050" opacity="0.35"/><circle cx="1620.8" cy="393.9" r="2.4" fill="#4a5050" opacity="0.35"/><circle cx="1447.8" cy="389.6" r="1.7" fill="#4a5050" opacity="0.35"/><circle cx="1453.2" cy="390.1" r="1.5" fill="#4a5050" opacity="0.35"/><circle cx="1444.0" cy="395.8" r="2.2" fill="#4a5050" opacity="0.35"/><circle cx="1446.8" cy="394.8" r="2.5" fill="#4a5050" opacity="0.35"/><circle cx="1469.4" cy="408.1" r="2.1" fill="#4a5050" opacity="0.35"/><circle cx="1473.0" cy="404.7" r="1.9" fill="#4a5050" opacity="0.35"/><circle cx="1469.5" cy="402.5" r="1.7" fill="#4a5050" opacity="0.35"/><circle cx="1468.1" cy="408.7" r="2.2" fill="#4a5050" opacity="0.35"/><circle cx="1421.6" cy="404.1" r="2.4" fill="#4a5050" opacity="0.35"/><circle cx="1420.5" cy="405.1" r="1.9" fill="#4a5050" opacity="0.35"/><circle cx="1422.6" cy="401.1" r="1.9" fill="#4a5050" opacity="0.35"/><circle cx="1423.4" cy="399.3" r="1.5" fill="#4a5050" opacity="0.35"/><circle cx="1434.2" cy="417.0" r="2.5" fill="#4a5050" opacity="0.35"/><circle cx="1436.8" cy="419.2" r="1.8" fill="#4a5050" opacity="0.35"/><circle cx="1433.5" cy="422.5" r="1.5" fill="#4a5050" opacity="0.35"/><circle cx="1435.9" cy="425.5" r="1.4" fill="#4a5050" opacity="0.35"/><circle cx="1556.6" cy="413.5" r="2.2" fill="#4a5050" opacity="0.35"/><circle cx="1554.0" cy="413.3" r="1.6" fill="#4a5050" opacity="0.35"/><circle cx="1563.9" cy="417.7" r="1.6" fill="#4a5050" opacity="0.35"/><circle cx="1567.1" cy="415.2" r="2.1" fill="#4a5050" opacity="0.35"/><circle cx="1555.7" cy="433.3" r="1.9" fill="#4a5050" opacity="0.35"/><circle cx="1553.7" cy="435.6" r="1.7" fill="#4a5050" opacity="0.35"/><circle cx="1551.7" cy="434.8" r="1.3" fill="#4a5050" opacity="0.35"/><circle cx="1554.4" cy="434.2" r="2.5" fill="#4a5050" opacity="0.35"/><circle cx="1496.6" cy="455.8" r="1.7" fill="#4a5050" opacity="0.35"/><circle cx="1499.6" cy="453.0" r="2.4" fill="#4a5050" opacity="0.35"/><circle cx="1499.3" cy="456.1" r="2.1" fill="#4a5050" opacity="0.35"/><circle cx="1507.2" cy="458.2" r="1.7" fill="#4a5050" opacity="0.35"/><circle cx="1500.1" cy="476.3" r="2.0" fill="#4a5050" opacity="0.35"/><circle cx="1500.5" cy="477.4" r="1.6" fill="#4a5050" opacity="0.35"/><circle cx="1502.2" cy="475.1" r="1.9" fill="#4a5050" opacity="0.35"/><circle cx="1502.4" cy="471.0" r="1.6" fill="#4a5050" opacity="0.35"/><circle cx="1424.1" cy="477.0" r="2.3" fill="#4a5050" opacity="0.35"/><circle cx="1424.1" cy="484.9" r="2.2" fill="#4a5050" opacity="0.35"/><circle cx="1426.0" cy="485.5" r="2.1" fill="#4a5050" opacity="0.35"/><circle cx="1427.0" cy="480.7" r="2.1" fill="#4a5050" opacity="0.35"/><circle cx="1437.1" cy="503.5" r="1.9" fill="#4a5050" opacity="0.35"/><circle cx="1433.6" cy="498.8" r="2.4" fill="#4a5050" opacity="0.35"/><circle cx="1439.1" cy="505.6" r="1.9" fill="#4a5050" opacity="0.35"/><circle cx="1436.4" cy="508.8" r="1.5" fill="#4a5050" opacity="0.35"/><circle cx="1630.5" cy="475.8" r="2.1" fill="#4a5050" opacity="0.35"/><circle cx="1629.6" cy="474.4" r="2.4" fill="#4a5050" opacity="0.35"/><circle cx="1629.6" cy="474.6" r="2.4" fill="#4a5050" opacity="0.35"/><circle cx="1631.9" cy="474.0" r="2.3" fill="#4a5050" opacity="0.35"/><circle cx="1592.5" cy="492.2" r="1.8" fill="#4a5050" opacity="0.35"/><circle cx="1592.8" cy="490.2" r="1.8" fill="#4a5050" opacity="0.35"/><circle cx="1592.4" cy="495.5" r="1.5" fill="#4a5050" opacity="0.35"/><circle cx="1592.3" cy="489.0" r="2.0" fill="#4a5050" opacity="0.35"/><circle cx="1573.6" cy="513.3" r="1.9" fill="#4a5050" opacity="0.35"/><circle cx="1570.0" cy="511.4" r="1.8" fill="#4a5050" opacity="0.35"/><circle cx="1571.2" cy="512.8" r="1.5" fill="#4a5050" opacity="0.35"/><circle cx="1576.2" cy="515.0" r="2.0" fill="#4a5050" opacity="0.35"/><circle cx="1640.4" cy="507.0" r="2.1" fill="#4a5050" opacity="0.35"/><circle cx="1635.9" cy="509.0" r="2.3" fill="#4a5050" opacity="0.35"/><circle cx="1636.5" cy="507.7" r="2.1" fill="#4a5050" opacity="0.35"/><circle cx="1644.2" cy="512.6" r="1.9" fill="#4a5050" opacity="0.35"/><circle cx="1541.9" cy="534.2" r="2.4" fill="#4a5050" opacity="0.35"/><circle cx="1541.6" cy="533.2" r="1.6" fill="#4a5050" opacity="0.35"/><circle cx="1540.5" cy="532.9" r="1.3" fill="#4a5050" opacity="0.35"/><circle cx="1538.7" cy="536.0" r="2.1" fill="#4a5050" opacity="0.35"/><circle cx="1473.1" cy="541.0" r="2.2" fill="#4a5050" opacity="0.35"/><circle cx="1470.4" cy="541.0" r="2.2" fill="#4a5050" opacity="0.35"/><circle cx="1466.7" cy="541.7" r="1.9" fill="#4a5050" opacity="0.35"/><circle cx="1472.4" cy="537.7" r="2.5" fill="#4a5050" opacity="0.35"/><circle cx="1764.2" cy="317.3" r="1.9" fill="#4a5050" opacity="0.35"/><circle cx="1759.9" cy="320.1" r="1.4" fill="#4a5050" opacity="0.35"/><circle cx="1766.8" cy="318.1" r="2.2" fill="#4a5050" opacity="0.35"/><circle cx="1764.8" cy="318.9" r="2.5" fill="#4a5050" opacity="0.35"/><circle cx="1830.1" cy="321.6" r="1.4" fill="#4a5050" opacity="0.35"/><circle cx="1834.0" cy="323.0" r="2.3" fill="#4a5050" opacity="0.35"/><circle cx="1831.4" cy="320.0" r="1.7" fill="#4a5050" opacity="0.35"/><circle cx="1834.4" cy="316.3" r="2.0" fill="#4a5050" opacity="0.35"/><circle cx="1885.6" cy="322.3" r="1.3" fill="#4a5050" opacity="0.35"/><circle cx="1880.0" cy="322.5" r="2.2" fill="#4a5050" opacity="0.35"/><circle cx="1883.2" cy="326.0" r="1.4" fill="#4a5050" opacity="0.35"/><circle cx="1881.8" cy="326.3" r="2.4" fill="#4a5050" opacity="0.35"/><circle cx="1911.5" cy="326.2" r="1.8" fill="#4a5050" opacity="0.35"/><circle cx="1908.2" cy="323.6" r="1.3" fill="#4a5050" opacity="0.35"/><circle cx="1912.7" cy="327.4" r="1.9" fill="#4a5050" opacity="0.35"/><circle cx="1907.9" cy="323.3" r="2.1" fill="#4a5050" opacity="0.35"/><circle cx="1699.0" cy="373.2" r="2.2" fill="#4a5050" opacity="0.35"/><circle cx="1701.8" cy="368.5" r="2.0" fill="#4a5050" opacity="0.35"/><circle cx="1696.5" cy="372.2" r="2.2" fill="#4a5050" opacity="0.35"/><circle cx="1696.3" cy="377.9" r="2.1" fill="#4a5050" opacity="0.35"/><circle cx="1687.2" cy="388.2" r="1.4" fill="#4a5050" opacity="0.35"/><circle cx="1683.2" cy="391.2" r="1.8" fill="#4a5050" opacity="0.35"/><circle cx="1681.8" cy="386.6" r="2.0" fill="#4a5050" opacity="0.35"/><circle cx="1680.3" cy="389.4" r="2.1" fill="#4a5050" opacity="0.35"/><circle cx="1728.6" cy="376.0" r="1.5" fill="#4a5050" opacity="0.35"/><circle cx="1736.6" cy="371.3" r="1.9" fill="#4a5050" opacity="0.35"/><circle cx="1737.0" cy="375.4" r="2.3" fill="#4a5050" opacity="0.35"/><circle cx="1731.3" cy="377.1" r="1.9" fill="#4a5050" opacity="0.35"/><circle cx="1783.4" cy="367.3" r="1.7" fill="#4a5050" opacity="0.35"/><circle cx="1774.4" cy="365.3" r="2.4" fill="#4a5050" opacity="0.35"/><circle cx="1780.3" cy="363.2" r="2.3" fill="#4a5050" opacity="0.35"/><circle cx="1780.9" cy="367.2" r="1.8" fill="#4a5050" opacity="0.35"/><circle cx="1866.2" cy="348.5" r="2.1" fill="#4a5050" opacity="0.35"/><circle cx="1864.2" cy="350.0" r="1.8" fill="#4a5050" opacity="0.35"/><circle cx="1865.1" cy="353.6" r="1.5" fill="#4a5050" opacity="0.35"/><circle cx="1863.4" cy="351.3" r="2.4" fill="#4a5050" opacity="0.35"/><circle cx="1886.0" cy="354.4" r="1.4" fill="#4a5050" opacity="0.35"/><circle cx="1885.0" cy="358.3" r="1.5" fill="#4a5050" opacity="0.35"/><circle cx="1890.4" cy="356.2" r="1.8" fill="#4a5050" opacity="0.35"/><circle cx="1887.7" cy="359.9" r="1.6" fill="#4a5050" opacity="0.35"/><circle cx="1823.5" cy="385.6" r="1.7" fill="#4a5050" opacity="0.35"/><circle cx="1819.6" cy="384.3" r="1.7" fill="#4a5050" opacity="0.35"/><circle cx="1822.6" cy="386.0" r="1.7" fill="#4a5050" opacity="0.35"/><circle cx="1816.9" cy="387.8" r="1.8" fill="#4a5050" opacity="0.35"/><circle cx="1805.1" cy="403.7" r="1.6" fill="#4a5050" opacity="0.35"/><circle cx="1808.1" cy="401.3" r="2.0" fill="#4a5050" opacity="0.35"/><circle cx="1804.5" cy="400.7" r="2.3" fill="#4a5050" opacity="0.35"/><circle cx="1811.9" cy="395.9" r="1.6" fill="#4a5050" opacity="0.35"/><circle cx="1864.6" cy="389.7" r="1.7" fill="#4a5050" opacity="0.35"/><circle cx="1856.3" cy="392.0" r="2.4" fill="#4a5050" opacity="0.35"/><circle cx="1862.5" cy="388.7" r="1.4" fill="#4a5050" opacity="0.35"/><circle cx="1863.1" cy="394.4" r="2.1" fill="#4a5050" opacity="0.35"/><circle cx="1757.2" cy="423.8" r="2.5" fill="#4a5050" opacity="0.35"/><circle cx="1757.0" cy="424.0" r="1.9" fill="#4a5050" opacity="0.35"/><circle cx="1762.3" cy="427.0" r="1.9" fill="#4a5050" opacity="0.35"/><circle cx="1751.7" cy="419.7" r="1.4" fill="#4a5050" opacity="0.35"/><circle cx="1685.4" cy="460.2" r="2.0" fill="#4a5050" opacity="0.35"/><circle cx="1682.5" cy="456.0" r="2.0" fill="#4a5050" opacity="0.35"/><circle cx="1689.6" cy="452.9" r="2.4" fill="#4a5050" opacity="0.35"/><circle cx="1685.2" cy="455.0" r="1.3" fill="#4a5050" opacity="0.35"/><circle cx="1839.8" cy="446.9" r="1.9" fill="#4a5050" opacity="0.35"/><circle cx="1829.6" cy="449.2" r="1.8" fill="#4a5050" opacity="0.35"/><circle cx="1840.0" cy="449.0" r="2.4" fill="#4a5050" opacity="0.35"/><circle cx="1839.2" cy="447.4" r="2.5" fill="#4a5050" opacity="0.35"/><circle cx="1717.0" cy="478.7" r="2.0" fill="#4a5050" opacity="0.35"/><circle cx="1721.4" cy="474.5" r="1.3" fill="#4a5050" opacity="0.35"/><circle cx="1715.5" cy="474.9" r="1.8" fill="#4a5050" opacity="0.35"/><circle cx="1720.9" cy="474.4" r="1.7" fill="#4a5050" opacity="0.35"/><circle cx="1765.8" cy="478.3" r="1.9" fill="#4a5050" opacity="0.35"/><circle cx="1772.2" cy="476.2" r="2.2" fill="#4a5050" opacity="0.35"/><circle cx="1768.5" cy="479.3" r="2.0" fill="#4a5050" opacity="0.35"/><circle cx="1767.0" cy="477.2" r="2.3" fill="#4a5050" opacity="0.35"/><circle cx="1791.4" cy="503.5" r="2.5" fill="#4a5050" opacity="0.35"/><circle cx="1787.5" cy="502.1" r="1.7" fill="#4a5050" opacity="0.35"/><circle cx="1781.0" cy="498.7" r="1.5" fill="#4a5050" opacity="0.35"/><circle cx="1788.2" cy="506.2" r="1.6" fill="#4a5050" opacity="0.35"/><circle cx="1871.6" cy="492.2" r="1.3" fill="#4a5050" opacity="0.35"/><circle cx="1877.1" cy="496.3" r="2.4" fill="#4a5050" opacity="0.35"/><circle cx="1872.6" cy="493.3" r="1.4" fill="#4a5050" opacity="0.35"/><circle cx="1872.8" cy="495.5" r="1.7" fill="#4a5050" opacity="0.35"/><circle cx="1918.8" cy="459.8" r="1.9" fill="#4a5050" opacity="0.35"/><circle cx="1916.2" cy="460.4" r="1.4" fill="#4a5050" opacity="0.35"/><circle cx="1917.0" cy="459.3" r="2.5" fill="#4a5050" opacity="0.35"/><circle cx="1919.7" cy="460.0" r="1.8" fill="#4a5050" opacity="0.35"/><circle cx="1674.9" cy="533.9" r="2.5" fill="#4a5050" opacity="0.35"/><circle cx="1677.4" cy="533.1" r="1.8" fill="#4a5050" opacity="0.35"/><circle cx="1677.3" cy="534.3" r="2.3" fill="#4a5050" opacity="0.35"/><circle cx="1674.0" cy="533.0" r="1.9" fill="#4a5050" opacity="0.35"/><circle cx="1703.0" cy="532.8" r="1.6" fill="#4a5050" opacity="0.35"/><circle cx="1702.6" cy="533.7" r="1.4" fill="#4a5050" opacity="0.35"/><circle cx="1702.9" cy="531.4" r="2.2" fill="#4a5050" opacity="0.35"/><circle cx="1698.6" cy="535.4" r="1.6" fill="#4a5050" opacity="0.35"/><circle cx="1738.4" cy="533.3" r="2.2" fill="#4a5050" opacity="0.35"/><circle cx="1742.7" cy="535.1" r="1.8" fill="#4a5050" opacity="0.35"/><circle cx="1739.8" cy="532.8" r="2.0" fill="#4a5050" opacity="0.35"/><circle cx="1741.3" cy="533.4" r="2.5" fill="#4a5050" opacity="0.35"/>
<ellipse cx="1360.9" cy="217.0" rx="4.3" ry="2.6" fill="#a8f0f0"/>
<ellipse cx="1362.4" cy="229.0" rx="4.3" ry="2.4" fill="#a8f0f0"/>
<ellipse cx="1797.0" cy="325.1" rx="6.1" ry="2.8" fill="#a8f0f0"/>
<ellipse cx="1844.3" cy="358.9" rx="4.7" ry="3.4" fill="#a8f0f0"/>
<circle cx="1861.9" cy="392.5" r="4.5" fill="#3cb050" opacity="0.8"/>
<circle cx="1703.5" cy="535.0" r="4.5" fill="#3cb050" opacity="0.8"/>
<rect x="1757" y="101" width="151" height="151" fill="#50665a" stroke="#2a2a2a" stroke-width="2"/>
<rect x="1794.0" y="183.0" width="2" height="2" fill="#6c98b0"/><rect x="1893.6" y="172.7" width="2" height="2" fill="#6a8ab0"/><rect x="1848.0" y="236.6" width="2" height="2" fill="#70b090"/><rect x="1797.1" y="137.4" width="2" height="2" fill="#70b090"/><rect x="1838.5" y="183.8" width="2" height="2" fill="#70b090"/><rect x="1852.9" y="125.1" width="2" height="2" fill="#6a8ab0"/><rect x="1886.6" y="179.9" width="2" height="2" fill="#6a8ab0"/><rect x="1857.7" y="112.4" width="2" height="2" fill="#6a8ab0"/><rect x="1803.3" y="107.6" width="2" height="2" fill="#6c98b0"/><rect x="1828.5" y="208.7" width="2" height="2" fill="#70b090"/><rect x="1864.0" y="238.4" width="2" height="2" fill="#70b090"/><rect x="1866.0" y="187.8" width="2" height="2" fill="#6a8ab0"/><rect x="1888.2" y="117.3" width="2" height="2" fill="#6a8ab0"/><rect x="1831.7" y="140.9" width="2" height="2" fill="#70b090"/><rect x="1873.5" y="228.7" width="2" height="2" fill="#70b090"/><rect x="1833.6" y="159.7" width="2" height="2" fill="#6c98b0"/><rect x="1837.5" y="162.9" width="2" height="2" fill="#6a8ab0"/><rect x="1891.9" y="203.3" width="2" height="2" fill="#6a8ab0"/><rect x="1884.9" y="248.7" width="2" height="2" fill="#6a8ab0"/><rect x="1861.7" y="151.0" width="2" height="2" fill="#6a8ab0"/><rect x="1863.9" y="134.0" width="2" height="2" fill="#6c98b0"/><rect x="1800.9" y="112.3" width="2" height="2" fill="#70b090"/><rect x="1772.0" y="220.7" width="2" height="2" fill="#70b090"/><rect x="1890.9" y="106.0" width="2" height="2" fill="#70b090"/><rect x="1872.0" y="231.3" width="2" height="2" fill="#6a8ab0"/><rect x="1847.9" y="215.0" width="2" height="2" fill="#70b090"/><rect x="1864.6" y="151.7" width="2" height="2" fill="#6c98b0"/><rect x="1833.3" y="249.8" width="2" height="2" fill="#6c98b0"/><rect x="1760.1" y="118.9" width="2" height="2" fill="#6a8ab0"/><rect x="1898.5" y="245.8" width="2" height="2" fill="#6c98b0"/><rect x="1848.7" y="126.0" width="2" height="2" fill="#6a8ab0"/><rect x="1903.0" y="153.0" width="2" height="2" fill="#6c98b0"/><rect x="1899.9" y="234.8" width="2" height="2" fill="#70b090"/><rect x="1814.4" y="230.9" width="2" height="2" fill="#70b090"/><rect x="1853.7" y="190.6" width="2" height="2" fill="#6a8ab0"/><rect x="1850.2" y="241.3" width="2" height="2" fill="#6c98b0"/><rect x="1822.4" y="208.9" width="2" height="2" fill="#6a8ab0"/><rect x="1896.7" y="167.3" width="2" height="2" fill="#6c98b0"/><rect x="1835.6" y="183.6" width="2" height="2" fill="#6a8ab0"/><rect x="1874.9" y="248.2" width="2" height="2" fill="#6c98b0"/><rect x="1761.9" y="193.5" width="2" height="2" fill="#6a8ab0"/><rect x="1767.8" y="195.2" width="2" height="2" fill="#70b090"/><rect x="1810.9" y="237.8" width="2" height="2" fill="#6c98b0"/><rect x="1867.5" y="106.3" width="2" height="2" fill="#6a8ab0"/><rect x="1899.4" y="106.1" width="2" height="2" fill="#6c98b0"/><rect x="1795.9" y="170.1" width="2" height="2" fill="#6c98b0"/><rect x="1785.1" y="130.2" width="2" height="2" fill="#6c98b0"/><rect x="1883.0" y="141.8" width="2" height="2" fill="#70b090"/><rect x="1774.4" y="222.5" width="2" height="2" fill="#6a8ab0"/><rect x="1804.6" y="135.7" width="2" height="2" fill="#6c98b0"/><rect x="1794.1" y="130.5" width="2" height="2" fill="#70b090"/><rect x="1854.5" y="117.3" width="2" height="2" fill="#6c98b0"/><rect x="1898.5" y="202.2" width="2" height="2" fill="#6a8ab0"/><rect x="1823.4" y="228.8" width="2" height="2" fill="#6a8ab0"/><rect x="1770.8" y="212.1" width="2" height="2" fill="#6a8ab0"/><rect x="1889.1" y="169.3" width="2" height="2" fill="#6a8ab0"/><rect x="1874.7" y="108.0" width="2" height="2" fill="#6a8ab0"/><rect x="1805.3" y="225.9" width="2" height="2" fill="#6a8ab0"/><rect x="1886.0" y="153.0" width="2" height="2" fill="#6a8ab0"/><rect x="1877.5" y="153.8" width="2" height="2" fill="#6a8ab0"/><rect x="1820.9" y="179.2" width="2" height="2" fill="#6c98b0"/><rect x="1827.3" y="196.2" width="2" height="2" fill="#6c98b0"/><rect x="1820.7" y="163.2" width="2" height="2" fill="#70b090"/><rect x="1781.9" y="103.7" width="2" height="2" fill="#70b090"/><rect x="1841.2" y="247.9" width="2" height="2" fill="#6a8ab0"/><rect x="1763.8" y="170.1" width="2" height="2" fill="#6c98b0"/><rect x="1838.9" y="233.8" width="2" height="2" fill="#6a8ab0"/><rect x="1885.1" y="245.7" width="2" height="2" fill="#6a8ab0"/><rect x="1878.1" y="109.6" width="2" height="2" fill="#6a8ab0"/><rect x="1890.8" y="235.3" width="2" height="2" fill="#6a8ab0"/><rect x="1760.9" y="212.6" width="2" height="2" fill="#6a8ab0"/><rect x="1833.0" y="138.1" width="2" height="2" fill="#6a8ab0"/><rect x="1836.2" y="163.8" width="2" height="2" fill="#6a8ab0"/><rect x="1809.2" y="140.1" width="2" height="2" fill="#70b090"/><rect x="1878.3" y="112.0" width="2" height="2" fill="#6a8ab0"/><rect x="1788.0" y="181.6" width="2" height="2" fill="#6a8ab0"/><rect x="1784.2" y="219.4" width="2" height="2" fill="#6a8ab0"/><rect x="1880.1" y="104.1" width="2" height="2" fill="#70b090"/><rect x="1766.3" y="142.9" width="2" height="2" fill="#6c98b0"/><rect x="1849.9" y="179.4" width="2" height="2" fill="#6a8ab0"/><rect x="1828.5" y="217.1" width="2" height="2" fill="#6a8ab0"/><rect x="1885.0" y="217.0" width="2" height="2" fill="#6a8ab0"/><rect x="1777.3" y="113.1" width="2" height="2" fill="#6a8ab0"/><rect x="1884.6" y="115.7" width="2" height="2" fill="#70b090"/><rect x="1805.4" y="149.2" width="2" height="2" fill="#6c98b0"/><rect x="1815.7" y="160.3" width="2" height="2" fill="#6c98b0"/><rect x="1812.0" y="131.1" width="2" height="2" fill="#6c98b0"/><rect x="1822.0" y="121.8" width="2" height="2" fill="#6a8ab0"/><rect x="1864.3" y="158.9" width="2" height="2" fill="#6a8ab0"/><rect x="1842.3" y="109.3" width="2" height="2" fill="#70b090"/><rect x="1847.9" y="218.0" width="2" height="2" fill="#70b090"/><rect x="1852.6" y="109.4" width="2" height="2" fill="#70b090"/><rect x="1766.8" y="195.2" width="2" height="2" fill="#6c98b0"/><rect x="1820.8" y="205.0" width="2" height="2" fill="#70b090"/><rect x="1761.6" y="135.1" width="2" height="2" fill="#6c98b0"/><rect x="1861.2" y="113.5" width="2" height="2" fill="#70b090"/><rect x="1792.0" y="122.2" width="2" height="2" fill="#6a8ab0"/><rect x="1896.7" y="158.0" width="2" height="2" fill="#6c98b0"/><rect x="1776.9" y="204.5" width="2" height="2" fill="#70b090"/><rect x="1857.1" y="210.9" width="2" height="2" fill="#6a8ab0"/><rect x="1878.3" y="208.3" width="2" height="2" fill="#70b090"/><rect x="1780.1" y="216.8" width="2" height="2" fill="#6a8ab0"/><rect x="1836.5" y="186.0" width="2" height="2" fill="#70b090"/><rect x="1785.3" y="106.5" width="2" height="2" fill="#6a8ab0"/><rect x="1762.7" y="119.9" width="2" height="2" fill="#70b090"/><rect x="1881.9" y="243.0" width="2" height="2" fill="#6c98b0"/><rect x="1876.4" y="108.3" width="2" height="2" fill="#6a8ab0"/><rect x="1774.7" y="213.1" width="2" height="2" fill="#6a8ab0"/><rect x="1839.9" y="230.8" width="2" height="2" fill="#6a8ab0"/><rect x="1880.7" y="138.6" width="2" height="2" fill="#6a8ab0"/><rect x="1854.0" y="169.8" width="2" height="2" fill="#70b090"/><rect x="1796.2" y="191.1" width="2" height="2" fill="#6c98b0"/><rect x="1840.8" y="245.0" width="2" height="2" fill="#70b090"/><rect x="1832.5" y="246.0" width="2" height="2" fill="#70b090"/><rect x="1883.0" y="245.2" width="2" height="2" fill="#70b090"/><rect x="1860.6" y="214.1" width="2" height="2" fill="#70b090"/><rect x="1782.0" y="162.0" width="2" height="2" fill="#6a8ab0"/><rect x="1782.9" y="176.2" width="2" height="2" fill="#70b090"/><rect x="1893.7" y="179.0" width="2" height="2" fill="#70b090"/><rect x="1845.2" y="229.1" width="2" height="2" fill="#6a8ab0"/><rect x="1798.3" y="132.3" width="2" height="2" fill="#6c98b0"/><rect x="1896.4" y="228.2" width="2" height="2" fill="#6c98b0"/><rect x="1857.7" y="228.7" width="2" height="2" fill="#6c98b0"/><rect x="1889.7" y="148.2" width="2" height="2" fill="#6c98b0"/><rect x="1829.5" y="159.3" width="2" height="2" fill="#6a8ab0"/><rect x="1842.8" y="138.1" width="2" height="2" fill="#70b090"/><rect x="1872.8" y="124.1" width="2" height="2" fill="#70b090"/><rect x="1862.1" y="133.2" width="2" height="2" fill="#6a8ab0"/><rect x="1829.8" y="208.9" width="2" height="2" fill="#70b090"/><rect x="1874.1" y="232.6" width="2" height="2" fill="#6a8ab0"/><rect x="1827.7" y="136.8" width="2" height="2" fill="#6a8ab0"/><rect x="1854.3" y="217.3" width="2" height="2" fill="#6a8ab0"/><rect x="1899.9" y="228.5" width="2" height="2" fill="#6a8ab0"/><rect x="1889.9" y="217.0" width="2" height="2" fill="#6a8ab0"/><rect x="1786.5" y="206.6" width="2" height="2" fill="#6a8ab0"/><rect x="1891.3" y="140.5" width="2" height="2" fill="#6a8ab0"/><rect x="1805.1" y="165.2" width="2" height="2" fill="#6a8ab0"/><rect x="1776.3" y="141.8" width="2" height="2" fill="#6c98b0"/><rect x="1764.3" y="169.5" width="2" height="2" fill="#6c98b0"/><rect x="1760.0" y="152.2" width="2" height="2" fill="#70b090"/><rect x="1814.8" y="114.5" width="2" height="2" fill="#70b090"/><rect x="1816.5" y="183.0" width="2" height="2" fill="#6a8ab0"/><rect x="1888.9" y="114.2" width="2" height="2" fill="#70b090"/><rect x="1775.5" y="233.4" width="2" height="2" fill="#6c98b0"/><rect x="1773.2" y="241.4" width="2" height="2" fill="#6c98b0"/><rect x="1858.7" y="157.2" width="2" height="2" fill="#70b090"/><rect x="1802.4" y="202.4" width="2" height="2" fill="#6c98b0"/><rect x="1774.8" y="241.8" width="2" height="2" fill="#6c98b0"/><rect x="1857.9" y="181.8" width="2" height="2" fill="#6a8ab0"/><rect x="1857.0" y="177.8" width="2" height="2" fill="#6a8ab0"/><rect x="1864.6" y="202.7" width="2" height="2" fill="#6a8ab0"/><rect x="1853.9" y="210.3" width="2" height="2" fill="#6a8ab0"/><rect x="1785.3" y="233.8" width="2" height="2" fill="#70b090"/><rect x="1777.1" y="240.0" width="2" height="2" fill="#6a8ab0"/><rect x="1894.4" y="197.8" width="2" height="2" fill="#70b090"/><rect x="1840.6" y="198.2" width="2" height="2" fill="#70b090"/><rect x="1829.9" y="218.0" width="2" height="2" fill="#6a8ab0"/><rect x="1774.8" y="129.6" width="2" height="2" fill="#70b090"/><rect x="1811.8" y="142.1" width="2" height="2" fill="#70b090"/><rect x="1766.9" y="123.1" width="2" height="2" fill="#70b090"/><rect x="1833.2" y="139.3" width="2" height="2" fill="#6c98b0"/><rect x="1887.7" y="241.9" width="2" height="2" fill="#70b090"/><rect x="1838.6" y="216.4" width="2" height="2" fill="#6c98b0"/><rect x="1832.2" y="249.4" width="2" height="2" fill="#6a8ab0"/><rect x="1798.8" y="117.6" width="2" height="2" fill="#6a8ab0"/><rect x="1842.0" y="236.8" width="2" height="2" fill="#6a8ab0"/><rect x="1786.2" y="130.8" width="2" height="2" fill="#70b090"/><rect x="1857.5" y="160.5" width="2" height="2" fill="#6a8ab0"/><rect x="1846.0" y="124.5" width="2" height="2" fill="#70b090"/><rect x="1876.3" y="183.1" width="2" height="2" fill="#6a8ab0"/><rect x="1842.6" y="132.7" width="2" height="2" fill="#6c98b0"/><rect x="1813.3" y="146.1" width="2" height="2" fill="#70b090"/><rect x="1890.0" y="242.6" width="2" height="2" fill="#70b090"/><rect x="1805.4" y="236.2" width="2" height="2" fill="#6c98b0"/><rect x="1852.1" y="246.6" width="2" height="2" fill="#6c98b0"/><rect x="1890.7" y="201.1" width="2" height="2" fill="#6a8ab0"/><rect x="1847.4" y="209.8" width="2" height="2" fill="#6a8ab0"/><rect x="1774.8" y="214.1" width="2" height="2" fill="#6a8ab0"/><rect x="1831.3" y="180.0" width="2" height="2" fill="#70b090"/><rect x="1788.2" y="218.0" width="2" height="2" fill="#6a8ab0"/><rect x="1764.4" y="176.6" width="2" height="2" fill="#70b090"/><rect x="1775.4" y="144.6" width="2" height="2" fill="#6a8ab0"/><rect x="1778.9" y="219.5" width="2" height="2" fill="#6a8ab0"/><rect x="1762.8" y="193.9" width="2" height="2" fill="#6a8ab0"/><rect x="1832.3" y="105.8" width="2" height="2" fill="#6c98b0"/><rect x="1806.5" y="231.0" width="2" height="2" fill="#6a8ab0"/><rect x="1770.8" y="226.3" width="2" height="2" fill="#6a8ab0"/><rect x="1864.2" y="211.7" width="2" height="2" fill="#6c98b0"/><rect x="1905.7" y="133.1" width="2" height="2" fill="#6a8ab0"/><rect x="1885.6" y="167.2" width="2" height="2" fill="#6a8ab0"/><rect x="1830.3" y="119.0" width="2" height="2" fill="#6a8ab0"/><rect x="1819.0" y="227.3" width="2" height="2" fill="#6a8ab0"/><rect x="1816.5" y="172.6" width="2" height="2" fill="#6a8ab0"/><rect x="1838.0" y="165.1" width="2" height="2" fill="#70b090"/><rect x="1803.8" y="171.3" width="2" height="2" fill="#70b090"/><rect x="1823.4" y="169.9" width="2" height="2" fill="#6a8ab0"/><rect x="1864.8" y="156.9" width="2" height="2" fill="#6c98b0"/><rect x="1824.8" y="156.1" width="2" height="2" fill="#70b090"/><rect x="1791.9" y="103.4" width="2" height="2" fill="#6a8ab0"/><rect x="1797.0" y="157.3" width="2" height="2" fill="#70b090"/><rect x="1837.5" y="126.4" width="2" height="2" fill="#6a8ab0"/><rect x="1784.1" y="162.4" width="2" height="2" fill="#6a8ab0"/><rect x="1852.6" y="123.5" width="2" height="2" fill="#6a8ab0"/><rect x="1824.1" y="130.2" width="2" height="2" fill="#6a8ab0"/><rect x="1818.3" y="149.7" width="2" height="2" fill="#6a8ab0"/><rect x="1862.4" y="110.5" width="2" height="2" fill="#70b090"/><rect x="1764.8" y="175.5" width="2" height="2" fill="#6a8ab0"/><rect x="1794.5" y="160.2" width="2" height="2" fill="#6a8ab0"/><rect x="1783.2" y="194.5" width="2" height="2" fill="#6c98b0"/><rect x="1893.2" y="190.4" width="2" height="2" fill="#6c98b0"/><rect x="1799.4" y="218.8" width="2" height="2" fill="#70b090"/><rect x="1875.0" y="244.4" width="2" height="2" fill="#70b090"/><rect x="1795.7" y="142.1" width="2" height="2" fill="#6c98b0"/><rect x="1851.5" y="153.7" width="2" height="2" fill="#6a8ab0"/><rect x="1767.3" y="167.0" width="2" height="2" fill="#6a8ab0"/><rect x="1846.1" y="103.5" width="2" height="2" fill="#6a8ab0"/><rect x="1859.1" y="105.8" width="2" height="2" fill="#6a8ab0"/><rect x="1829.8" y="130.8" width="2" height="2" fill="#6c98b0"/><rect x="1788.5" y="246.2" width="2" height="2" fill="#70b090"/><rect x="1809.0" y="173.4" width="2" height="2" fill="#6c98b0"/><rect x="1897.2" y="108.0" width="2" height="2" fill="#6c98b0"/><rect x="1869.5" y="195.8" width="2" height="2" fill="#70b090"/><rect x="1771.9" y="146.1" width="2" height="2" fill="#70b090"/><rect x="1775.9" y="160.3" width="2" height="2" fill="#6c98b0"/><rect x="1837.9" y="217.4" width="2" height="2" fill="#70b090"/><rect x="1784.7" y="211.7" width="2" height="2" fill="#70b090"/><rect x="1881.8" y="184.3" width="2" height="2" fill="#6a8ab0"/><rect x="1812.3" y="164.0" width="2" height="2" fill="#6a8ab0"/><rect x="1824.3" y="206.3" width="2" height="2" fill="#6c98b0"/><rect x="1798.6" y="128.0" width="2" height="2" fill="#70b090"/><rect x="1898.6" y="109.3" width="2" height="2" fill="#6a8ab0"/><rect x="1863.5" y="106.4" width="2" height="2" fill="#70b090"/><rect x="1772.5" y="204.7" width="2" height="2" fill="#6a8ab0"/><rect x="1806.1" y="191.3" width="2" height="2" fill="#6a8ab0"/><rect x="1888.1" y="231.2" width="2" height="2" fill="#70b090"/><rect x="1827.6" y="230.7" width="2" height="2" fill="#6c98b0"/><rect x="1905.6" y="103.2" width="2" height="2" fill="#6a8ab0"/><rect x="1817.7" y="243.5" width="2" height="2" fill="#6a8ab0"/><rect x="1808.8" y="148.8" width="2" height="2" fill="#70b090"/><rect x="1770.9" y="198.4" width="2" height="2" fill="#6a8ab0"/><rect x="1860.2" y="246.7" width="2" height="2" fill="#6a8ab0"/><rect x="1845.1" y="104.7" width="2" height="2" fill="#6a8ab0"/><rect x="1801.3" y="133.7" width="2" height="2" fill="#70b090"/><rect x="1833.2" y="236.4" width="2" height="2" fill="#6c98b0"/><rect x="1874.9" y="181.7" width="2" height="2" fill="#6a8ab0"/><rect x="1827.7" y="194.5" width="2" height="2" fill="#6a8ab0"/><rect x="1880.4" y="119.5" width="2" height="2" fill="#6a8ab0"/><rect x="1885.3" y="117.9" width="2" height="2" fill="#6c98b0"/><rect x="1771.6" y="171.4" width="2" height="2" fill="#6a8ab0"/><rect x="1880.3" y="203.1" width="2" height="2" fill="#6a8ab0"/><rect x="1853.3" y="214.9" width="2" height="2" fill="#6c98b0"/><rect x="1818.2" y="200.2" width="2" height="2" fill="#6a8ab0"/><rect x="1801.9" y="241.9" width="2" height="2" fill="#70b090"/><rect x="1878.8" y="133.3" width="2" height="2" fill="#6a8ab0"/><rect x="1827.2" y="210.0" width="2" height="2" fill="#6a8ab0"/><rect x="1809.2" y="131.2" width="2" height="2" fill="#6a8ab0"/><rect x="1894.8" y="203.9" width="2" height="2" fill="#6c98b0"/><rect x="1821.2" y="198.3" width="2" height="2" fill="#6a8ab0"/><rect x="1795.7" y="226.2" width="2" height="2" fill="#6a8ab0"/><rect x="1808.3" y="166.3" width="2" height="2" fill="#6a8ab0"/><rect x="1795.9" y="150.5" width="2" height="2" fill="#6a8ab0"/><rect x="1865.8" y="231.6" width="2" height="2" fill="#70b090"/><rect x="1895.9" y="181.8" width="2" height="2" fill="#70b090"/><rect x="1813.1" y="131.1" width="2" height="2" fill="#70b090"/><rect x="1830.2" y="216.7" width="2" height="2" fill="#70b090"/><rect x="1828.0" y="189.4" width="2" height="2" fill="#6a8ab0"/><rect x="1801.9" y="240.3" width="2" height="2" fill="#6a8ab0"/><rect x="1890.2" y="107.2" width="2" height="2" fill="#6a8ab0"/><rect x="1802.3" y="179.4" width="2" height="2" fill="#70b090"/><rect x="1765.0" y="212.5" width="2" height="2" fill="#6c98b0"/><rect x="1831.3" y="108.5" width="2" height="2" fill="#70b090"/><rect x="1868.1" y="212.8" width="2" height="2" fill="#6c98b0"/><rect x="1780.0" y="168.3" width="2" height="2" fill="#70b090"/><rect x="1824.2" y="133.2" width="2" height="2" fill="#70b090"/><rect x="1871.1" y="206.0" width="2" height="2" fill="#70b090"/><rect x="1903.0" y="231.8" width="2" height="2" fill="#6c98b0"/><rect x="1897.6" y="166.4" width="2" height="2" fill="#70b090"/><rect x="1828.7" y="249.8" width="2" height="2" fill="#6a8ab0"/><rect x="1811.9" y="228.3" width="2" height="2" fill="#6c98b0"/><rect x="1763.3" y="157.9" width="2" height="2" fill="#6c98b0"/><rect x="1877.6" y="146.7" width="2" height="2" fill="#6a8ab0"/><rect x="1895.7" y="179.4" width="2" height="2" fill="#6a8ab0"/><rect x="1778.3" y="181.0" width="2" height="2" fill="#6a8ab0"/><rect x="1783.4" y="110.4" width="2" height="2" fill="#6a8ab0"/><rect x="1903.6" y="219.6" width="2" height="2" fill="#6c98b0"/><rect x="1903.0" y="218.5" width="2" height="2" fill="#6a8ab0"/><rect x="1831.1" y="138.1" width="2" height="2" fill="#6c98b0"/><rect x="1822.6" y="152.7" width="2" height="2" fill="#6a8ab0"/><rect x="1847.7" y="222.3" width="2" height="2" fill="#70b090"/><rect x="1804.8" y="139.3" width="2" height="2" fill="#70b090"/><rect x="1820.5" y="141.3" width="2" height="2" fill="#6a8ab0"/><rect x="1763.3" y="108.5" width="2" height="2" fill="#6a8ab0"/><rect x="1893.1" y="221.9" width="2" height="2" fill="#6a8ab0"/><rect x="1899.2" y="212.3" width="2" height="2" fill="#70b090"/><rect x="1833.8" y="225.2" width="2" height="2" fill="#6a8ab0"/><rect x="1800.1" y="127.8" width="2" height="2" fill="#6a8ab0"/><rect x="1830.4" y="111.9" width="2" height="2" fill="#70b090"/><rect x="1827.7" y="200.8" width="2" height="2" fill="#70b090"/><rect x="1813.5" y="195.9" width="2" height="2" fill="#6c98b0"/><rect x="1785.9" y="203.5" width="2" height="2" fill="#6a8ab0"/><rect x="1819.0" y="154.7" width="2" height="2" fill="#70b090"/><rect x="1799.9" y="140.6" width="2" height="2" fill="#6c98b0"/><rect x="1900.0" y="125.8" width="2" height="2" fill="#6c98b0"/><rect x="1779.5" y="108.6" width="2" height="2" fill="#70b090"/><rect x="1884.1" y="224.7" width="2" height="2" fill="#6c98b0"/><rect x="1763.5" y="187.5" width="2" height="2" fill="#6a8ab0"/><rect x="1830.7" y="144.1" width="2" height="2" fill="#6c98b0"/><rect x="1774.1" y="201.3" width="2" height="2" fill="#6c98b0"/><rect x="1763.9" y="174.6" width="2" height="2" fill="#70b090"/><rect x="1787.7" y="238.3" width="2" height="2" fill="#6a8ab0"/><rect x="1855.1" y="241.4" width="2" height="2" fill="#70b090"/><rect x="1805.5" y="142.8" width="2" height="2" fill="#6a8ab0"/><rect x="1897.7" y="149.7" width="2" height="2" fill="#70b090"/><rect x="1840.6" y="108.2" width="2" height="2" fill="#70b090"/><rect x="1795.8" y="247.1" width="2" height="2" fill="#6a8ab0"/><rect x="1831.8" y="243.6" width="2" height="2" fill="#6a8ab0"/><rect x="1861.6" y="119.9" width="2" height="2" fill="#6a8ab0"/><rect x="1851.8" y="223.2" width="2" height="2" fill="#6a8ab0"/><rect x="1897.5" y="246.2" width="2" height="2" fill="#6a8ab0"/><rect x="1822.4" y="247.6" width="2" height="2" fill="#70b090"/><rect x="1798.4" y="183.3" width="2" height="2" fill="#6a8ab0"/><rect x="1784.7" y="174.5" width="2" height="2" fill="#6a8ab0"/><rect x="1780.2" y="236.1" width="2" height="2" fill="#6a8ab0"/><rect x="1860.4" y="171.7" width="2" height="2" fill="#70b090"/><rect x="1854.1" y="123.9" width="2" height="2" fill="#6a8ab0"/><rect x="1785.5" y="195.1" width="2" height="2" fill="#6c98b0"/><rect x="1786.9" y="223.9" width="2" height="2" fill="#6a8ab0"/><rect x="1766.2" y="244.2" width="2" height="2" fill="#6a8ab0"/><rect x="1815.2" y="118.7" width="2" height="2" fill="#70b090"/><rect x="1785.7" y="106.9" width="2" height="2" fill="#6a8ab0"/><rect x="1778.3" y="124.4" width="2" height="2" fill="#6a8ab0"/><rect x="1815.4" y="240.9" width="2" height="2" fill="#6a8ab0"/><rect x="1896.4" y="104.1" width="2" height="2" fill="#6c98b0"/><rect x="1905.5" y="247.0" width="2" height="2" fill="#6a8ab0"/><rect x="1768.5" y="183.3" width="2" height="2" fill="#70b090"/><rect x="1774.3" y="227.5" width="2" height="2" fill="#70b090"/><rect x="1762.1" y="153.8" width="2" height="2" fill="#70b090"/><rect x="1842.6" y="171.2" width="2" height="2" fill="#6c98b0"/><rect x="1824.0" y="181.6" width="2" height="2" fill="#70b090"/><rect x="1788.5" y="190.4" width="2" height="2" fill="#6a8ab0"/><rect x="1803.2" y="229.2" width="2" height="2" fill="#6a8ab0"/><rect x="1805.6" y="226.5" width="2" height="2" fill="#6a8ab0"/><rect x="1766.8" y="246.8" width="2" height="2" fill="#70b090"/><rect x="1849.3" y="129.1" width="2" height="2" fill="#6a8ab0"/><rect x="1782.2" y="121.0" width="2" height="2" fill="#70b090"/><rect x="1904.8" y="203.8" width="2" height="2" fill="#6c98b0"/><rect x="1772.6" y="182.4" width="2" height="2" fill="#70b090"/><rect x="1806.9" y="189.8" width="2" height="2" fill="#6a8ab0"/><rect x="1806.5" y="177.4" width="2" height="2" fill="#6c98b0"/><rect x="1852.6" y="189.9" width="2" height="2" fill="#6c98b0"/><rect x="1885.7" y="225.8" width="2" height="2" fill="#6c98b0"/><rect x="1902.5" y="146.7" width="2" height="2" fill="#6a8ab0"/><rect x="1777.1" y="176.6" width="2" height="2" fill="#6c98b0"/><rect x="1866.1" y="139.5" width="2" height="2" fill="#70b090"/><rect x="1901.1" y="169.6" width="2" height="2" fill="#70b090"/><rect x="1808.2" y="218.9" width="2" height="2" fill="#6a8ab0"/><rect x="1904.0" y="180.7" width="2" height="2" fill="#70b090"/><rect x="1905.2" y="110.6" width="2" height="2" fill="#70b090"/><rect x="1821.5" y="227.6" width="2" height="2" fill="#6c98b0"/><rect x="1767.7" y="228.6" width="2" height="2" fill="#70b090"/><rect x="1790.1" y="114.0" width="2" height="2" fill="#6a8ab0"/><rect x="1767.1" y="175.6" width="2" height="2" fill="#6a8ab0"/><rect x="1822.4" y="230.5" width="2" height="2" fill="#6c98b0"/><rect x="1760.7" y="157.7" width="2" height="2" fill="#6c98b0"/><rect x="1817.7" y="157.8" width="2" height="2" fill="#6a8ab0"/><rect x="1844.9" y="124.5" width="2" height="2" fill="#6a8ab0"/><rect x="1759.0" y="112.5" width="2" height="2" fill="#6a8ab0"/><rect x="1779.5" y="115.0" width="2" height="2" fill="#6c98b0"/><rect x="1823.0" y="131.9" width="2" height="2" fill="#6a8ab0"/><rect x="1838.2" y="238.4" width="2" height="2" fill="#70b090"/><rect x="1867.4" y="224.8" width="2" height="2" fill="#6a8ab0"/><rect x="1823.9" y="203.3" width="2" height="2" fill="#6a8ab0"/><rect x="1833.9" y="239.4" width="2" height="2" fill="#6a8ab0"/><rect x="1828.9" y="233.9" width="2" height="2" fill="#6c98b0"/><rect x="1840.3" y="120.2" width="2" height="2" fill="#6a8ab0"/><rect x="1847.0" y="115.5" width="2" height="2" fill="#6a8ab0"/><rect x="1876.0" y="159.3" width="2" height="2" fill="#70b090"/><rect x="1881.4" y="130.0" width="2" height="2" fill="#6c98b0"/><rect x="1779.6" y="132.9" width="2" height="2" fill="#70b090"/><rect x="1845.2" y="242.6" width="2" height="2" fill="#6c98b0"/><rect x="1823.1" y="117.3" width="2" height="2" fill="#6a8ab0"/><rect x="1768.5" y="231.9" width="2" height="2" fill="#6c98b0"/><rect x="1768.7" y="104.4" width="2" height="2" fill="#70b090"/><rect x="1893.2" y="195.8" width="2" height="2" fill="#6a8ab0"/><rect x="1880.5" y="151.7" width="2" height="2" fill="#70b090"/><rect x="1888.6" y="136.2" width="2" height="2" fill="#6c98b0"/><rect x="1788.7" y="160.6" width="2" height="2" fill="#6a8ab0"/><rect x="1766.6" y="179.2" width="2" height="2" fill="#6a8ab0"/><rect x="1843.4" y="115.5" width="2" height="2" fill="#6a8ab0"/><rect x="1879.7" y="224.2" width="2" height="2" fill="#70b090"/><rect x="1800.8" y="247.4" width="2" height="2" fill="#6a8ab0"/><rect x="1788.7" y="146.9" width="2" height="2" fill="#6a8ab0"/><rect x="1844.5" y="156.6" width="2" height="2" fill="#6c98b0"/><rect x="1805.3" y="229.4" width="2" height="2" fill="#6a8ab0"/><rect x="1824.7" y="209.0" width="2" height="2" fill="#6c98b0"/><rect x="1851.6" y="175.5" width="2" height="2" fill="#6a8ab0"/><rect x="1786.0" y="118.2" width="2" height="2" fill="#70b090"/><rect x="1776.6" y="237.3" width="2" height="2" fill="#70b090"/><rect x="1882.8" y="149.4" width="2" height="2" fill="#6a8ab0"/><rect x="1807.1" y="139.3" width="2" height="2" fill="#6a8ab0"/><rect x="1793.8" y="156.9" width="2" height="2" fill="#6a8ab0"/><rect x="1785.1" y="139.9" width="2" height="2" fill="#6c98b0"/><rect x="1766.8" y="245.0" width="2" height="2" fill="#6a8ab0"/><rect x="1789.5" y="147.7" width="2" height="2" fill="#6a8ab0"/><rect x="1842.0" y="139.1" width="2" height="2" fill="#6a8ab0"/><rect x="1790.7" y="201.6" width="2" height="2" fill="#6a8ab0"/><rect x="1784.8" y="213.4" width="2" height="2" fill="#70b090"/><rect x="1847.0" y="165.4" width="2" height="2" fill="#6a8ab0"/><rect x="1851.3" y="168.0" width="2" height="2" fill="#6a8ab0"/><rect x="1770.6" y="181.8" width="2" height="2" fill="#70b090"/><rect x="1831.1" y="188.1" width="2" height="2" fill="#6c98b0"/><rect x="1835.4" y="164.7" width="2" height="2" fill="#70b090"/><rect x="1791.6" y="223.2" width="2" height="2" fill="#70b090"/><rect x="1809.9" y="249.3" width="2" height="2" fill="#70b090"/><rect x="1870.4" y="119.9" width="2" height="2" fill="#70b090"/><rect x="1808.8" y="210.7" width="2" height="2" fill="#6c98b0"/><rect x="1774.8" y="180.6" width="2" height="2" fill="#6c98b0"/><rect x="1829.2" y="182.3" width="2" height="2" fill="#70b090"/><rect x="1814.1" y="109.2" width="2" height="2" fill="#6c98b0"/><rect x="1880.1" y="132.9" width="2" height="2" fill="#6a8ab0"/><rect x="1862.2" y="246.4" width="2" height="2" fill="#6c98b0"/><rect x="1844.9" y="202.7" width="2" height="2" fill="#6c98b0"/><rect x="1838.6" y="248.3" width="2" height="2" fill="#6c98b0"/><rect x="1894.8" y="165.2" width="2" height="2" fill="#6c98b0"/><rect x="1821.1" y="157.4" width="2" height="2" fill="#6a8ab0"/><rect x="1795.7" y="205.5" width="2" height="2" fill="#70b090"/><rect x="1863.8" y="150.6" width="2" height="2" fill="#6a8ab0"/><rect x="1806.0" y="209.6" width="2" height="2" fill="#6a8ab0"/><rect x="1838.6" y="171.4" width="2" height="2" fill="#70b090"/><rect x="1840.3" y="156.8" width="2" height="2" fill="#6a8ab0"/><rect x="1848.2" y="206.2" width="2" height="2" fill="#6a8ab0"/><rect x="1833.2" y="127.6" width="2" height="2" fill="#6a8ab0"/><rect x="1840.1" y="120.2" width="2" height="2" fill="#70b090"/><rect x="1886.7" y="178.8" width="2" height="2" fill="#70b090"/><rect x="1799.3" y="173.5" width="2" height="2" fill="#6c98b0"/><rect x="1792.9" y="141.3" width="2" height="2" fill="#6a8ab0"/><rect x="1898.4" y="173.1" width="2" height="2" fill="#70b090"/><rect x="1780.7" y="157.3" width="2" height="2" fill="#6a8ab0"/><rect x="1797.9" y="217.7" width="2" height="2" fill="#6a8ab0"/><rect x="1857.0" y="139.3" width="2" height="2" fill="#6c98b0"/><rect x="1875.2" y="210.8" width="2" height="2" fill="#6a8ab0"/><rect x="1773.5" y="206.4" width="2" height="2" fill="#6a8ab0"/><rect x="1792.1" y="170.2" width="2" height="2" fill="#6a8ab0"/><rect x="1807.0" y="215.1" width="2" height="2" fill="#6a8ab0"/><rect x="1765.3" y="175.2" width="2" height="2" fill="#6a8ab0"/><rect x="1813.7" y="230.9" width="2" height="2" fill="#70b090"/><rect x="1833.1" y="204.0" width="2" height="2" fill="#70b090"/><rect x="1902.8" y="166.2" width="2" height="2" fill="#6c98b0"/><rect x="1839.0" y="189.1" width="2" height="2" fill="#70b090"/><rect x="1781.6" y="107.6" width="2" height="2" fill="#70b090"/><rect x="1853.1" y="134.1" width="2" height="2" fill="#6a8ab0"/><rect x="1833.2" y="243.1" width="2" height="2" fill="#6c98b0"/><rect x="1796.8" y="195.4" width="2" height="2" fill="#6c98b0"/><rect x="1788.8" y="126.3" width="2" height="2" fill="#6a8ab0"/><rect x="1830.2" y="211.6" width="2" height="2" fill="#6a8ab0"/><rect x="1776.2" y="152.5" width="2" height="2" fill="#6a8ab0"/><rect x="1797.1" y="115.8" width="2" height="2" fill="#6a8ab0"/><rect x="1889.0" y="123.3" width="2" height="2" fill="#6a8ab0"/><rect x="1861.6" y="195.5" width="2" height="2" fill="#70b090"/><rect x="1863.1" y="184.3" width="2" height="2" fill="#70b090"/><rect x="1797.7" y="206.0" width="2" height="2" fill="#6a8ab0"/><rect x="1769.3" y="203.3" width="2" height="2" fill="#70b090"/><rect x="1784.1" y="107.8" width="2" height="2" fill="#6c98b0"/><rect x="1881.6" y="156.2" width="2" height="2" fill="#6a8ab0"/><rect x="1876.9" y="160.1" width="2" height="2" fill="#70b090"/><rect x="1896.5" y="209.0" width="2" height="2" fill="#6a8ab0"/><rect x="1823.8" y="137.8" width="2" height="2" fill="#6a8ab0"/><rect x="1809.8" y="136.8" width="2" height="2" fill="#70b090"/><rect x="1816.7" y="161.1" width="2" height="2" fill="#6a8ab0"/><rect x="1839.2" y="190.8" width="2" height="2" fill="#6c98b0"/><rect x="1773.2" y="162.7" width="2" height="2" fill="#6c98b0"/><rect x="1791.8" y="169.8" width="2" height="2" fill="#6c98b0"/><rect x="1853.1" y="247.9" width="2" height="2" fill="#70b090"/><rect x="1856.4" y="211.1" width="2" height="2" fill="#70b090"/><rect x="1852.6" y="220.6" width="2" height="2" fill="#6a8ab0"/><rect x="1875.8" y="176.5" width="2" height="2" fill="#6a8ab0"/><rect x="1800.8" y="241.1" width="2" height="2" fill="#6a8ab0"/><rect x="1823.5" y="121.5" width="2" height="2" fill="#6a8ab0"/><rect x="1792.2" y="180.3" width="2" height="2" fill="#6c98b0"/><rect x="1776.9" y="176.4" width="2" height="2" fill="#70b090"/>
<rect x="1758.5" y="102.5" width="148.5" height="148.5" fill="none" stroke="#fff" stroke-width="1"/>
<path d="M1836.5 102 L1836.5 251 M1758 201.5 L1907 201.5" stroke="#2a2a2a" stroke-width="3"/>
<path d="M1836.5 102 L1836.5 251 M1758 201.5 L1907 201.5" stroke="#fff" stroke-width="1"/>
<rect x="1776.5" y="166" width="120" height="72" fill="#52665a" stroke="#2a2a2a" stroke-width="2.5"/>
<rect x="1871.3" y="218.3" width="2" height="2" fill="#70b090"/><rect x="1781.3" y="169.6" width="2" height="2" fill="#6a8ab0"/><rect x="1785.7" y="202.6" width="2" height="2" fill="#70b090"/><rect x="1883.2" y="171.3" width="2" height="2" fill="#6c98b0"/><rect x="1814.0" y="200.1" width="2" height="2" fill="#6c98b0"/><rect x="1868.6" y="222.5" width="2" height="2" fill="#6c98b0"/><rect x="1851.0" y="174.0" width="2" height="2" fill="#6a8ab0"/><rect x="1792.1" y="214.3" width="2" height="2" fill="#6a8ab0"/><rect x="1788.6" y="218.6" width="2" height="2" fill="#6a8ab0"/><rect x="1851.5" y="173.6" width="2" height="2" fill="#6c98b0"/><rect x="1837.9" y="233.4" width="2" height="2" fill="#6a8ab0"/><rect x="1836.0" y="192.6" width="2" height="2" fill="#70b090"/><rect x="1885.5" y="196.7" width="2" height="2" fill="#6c98b0"/><rect x="1843.5" y="194.6" width="2" height="2" fill="#70b090"/><rect x="1818.5" y="231.8" width="2" height="2" fill="#6c98b0"/><rect x="1814.1" y="218.2" width="2" height="2" fill="#6c98b0"/><rect x="1869.5" y="218.8" width="2" height="2" fill="#6a8ab0"/><rect x="1820.1" y="212.2" width="2" height="2" fill="#70b090"/><rect x="1889.0" y="200.4" width="2" height="2" fill="#6a8ab0"/><rect x="1861.8" y="208.8" width="2" height="2" fill="#6a8ab0"/><rect x="1893.8" y="171.3" width="2" height="2" fill="#70b090"/><rect x="1806.8" y="180.3" width="2" height="2" fill="#6a8ab0"/><rect x="1854.2" y="230.1" width="2" height="2" fill="#70b090"/><rect x="1808.3" y="228.1" width="2" height="2" fill="#6c98b0"/><rect x="1822.4" y="223.7" width="2" height="2" fill="#6c98b0"/><rect x="1863.3" y="219.1" width="2" height="2" fill="#6c98b0"/><rect x="1883.0" y="194.6" width="2" height="2" fill="#6a8ab0"/><rect x="1794.9" y="227.8" width="2" height="2" fill="#6a8ab0"/><rect x="1852.8" y="217.5" width="2" height="2" fill="#6a8ab0"/><rect x="1848.5" y="195.3" width="2" height="2" fill="#70b090"/><rect x="1822.5" y="202.2" width="2" height="2" fill="#70b090"/><rect x="1849.5" y="200.3" width="2" height="2" fill="#6a8ab0"/><rect x="1853.3" y="216.6" width="2" height="2" fill="#6a8ab0"/><rect x="1801.4" y="228.6" width="2" height="2" fill="#6a8ab0"/><rect x="1891.6" y="177.4" width="2" height="2" fill="#6a8ab0"/><rect x="1793.0" y="208.4" width="2" height="2" fill="#6c98b0"/><rect x="1842.2" y="176.7" width="2" height="2" fill="#70b090"/><rect x="1829.0" y="177.9" width="2" height="2" fill="#6a8ab0"/><rect x="1858.4" y="210.6" width="2" height="2" fill="#70b090"/><rect x="1815.3" y="198.1" width="2" height="2" fill="#6a8ab0"/><rect x="1808.2" y="169.2" width="2" height="2" fill="#6c98b0"/><rect x="1815.4" y="194.2" width="2" height="2" fill="#6a8ab0"/><rect x="1811.4" y="173.8" width="2" height="2" fill="#70b090"/><rect x="1807.0" y="183.1" width="2" height="2" fill="#6c98b0"/><rect x="1805.4" y="229.3" width="2" height="2" fill="#6c98b0"/><rect x="1843.2" y="220.6" width="2" height="2" fill="#6a8ab0"/><rect x="1843.4" y="195.1" width="2" height="2" fill="#6c98b0"/><rect x="1872.9" y="184.3" width="2" height="2" fill="#6a8ab0"/><rect x="1865.6" y="223.7" width="2" height="2" fill="#6a8ab0"/><rect x="1870.0" y="191.4" width="2" height="2" fill="#6c98b0"/><rect x="1796.8" y="233.9" width="2" height="2" fill="#6a8ab0"/><rect x="1884.1" y="205.9" width="2" height="2" fill="#6a8ab0"/><rect x="1831.2" y="185.1" width="2" height="2" fill="#70b090"/><rect x="1809.5" y="187.6" width="2" height="2" fill="#6a8ab0"/><rect x="1830.9" y="181.9" width="2" height="2" fill="#6c98b0"/><rect x="1855.5" y="175.3" width="2" height="2" fill="#70b090"/><rect x="1861.3" y="222.1" width="2" height="2" fill="#6a8ab0"/><rect x="1807.9" y="176.4" width="2" height="2" fill="#6a8ab0"/><rect x="1781.8" y="227.3" width="2" height="2" fill="#6c98b0"/><rect x="1848.1" y="183.2" width="2" height="2" fill="#6a8ab0"/><rect x="1792.1" y="189.5" width="2" height="2" fill="#6a8ab0"/><rect x="1825.8" y="190.7" width="2" height="2" fill="#6c98b0"/><rect x="1781.3" y="198.1" width="2" height="2" fill="#70b090"/><rect x="1893.8" y="179.5" width="2" height="2" fill="#6a8ab0"/><rect x="1792.8" y="179.6" width="2" height="2" fill="#70b090"/><rect x="1811.0" y="225.6" width="2" height="2" fill="#6a8ab0"/><rect x="1876.3" y="193.5" width="2" height="2" fill="#6c98b0"/><rect x="1859.2" y="217.8" width="2" height="2" fill="#6c98b0"/><rect x="1834.1" y="201.7" width="2" height="2" fill="#70b090"/><rect x="1780.2" y="173.0" width="2" height="2" fill="#6c98b0"/><rect x="1800.4" y="234.7" width="2" height="2" fill="#6a8ab0"/><rect x="1854.9" y="179.8" width="2" height="2" fill="#6c98b0"/><rect x="1815.1" y="192.7" width="2" height="2" fill="#6a8ab0"/><rect x="1875.5" y="225.5" width="2" height="2" fill="#6a8ab0"/><rect x="1891.7" y="171.6" width="2" height="2" fill="#70b090"/><rect x="1798.0" y="211.6" width="2" height="2" fill="#70b090"/><rect x="1819.1" y="201.0" width="2" height="2" fill="#6a8ab0"/><rect x="1893.9" y="214.0" width="2" height="2" fill="#6a8ab0"/><rect x="1791.5" y="219.9" width="2" height="2" fill="#6a8ab0"/><rect x="1802.2" y="175.1" width="2" height="2" fill="#6a8ab0"/><rect x="1855.2" y="169.9" width="2" height="2" fill="#6a8ab0"/><rect x="1784.7" y="197.9" width="2" height="2" fill="#6a8ab0"/><rect x="1837.7" y="231.7" width="2" height="2" fill="#6a8ab0"/><rect x="1816.5" y="198.3" width="2" height="2" fill="#6c98b0"/><rect x="1867.1" y="215.5" width="2" height="2" fill="#6a8ab0"/><rect x="1877.9" y="215.7" width="2" height="2" fill="#6a8ab0"/><rect x="1804.0" y="207.9" width="2" height="2" fill="#6a8ab0"/><rect x="1859.7" y="191.7" width="2" height="2" fill="#70b090"/><rect x="1856.0" y="177.3" width="2" height="2" fill="#6c98b0"/><rect x="1877.9" y="187.1" width="2" height="2" fill="#6a8ab0"/><rect x="1866.2" y="205.0" width="2" height="2" fill="#6c98b0"/><rect x="1829.4" y="194.5" width="2" height="2" fill="#6c98b0"/><rect x="1812.6" y="191.4" width="2" height="2" fill="#6a8ab0"/><rect x="1813.0" y="173.0" width="2" height="2" fill="#70b090"/><rect x="1862.9" y="208.4" width="2" height="2" fill="#70b090"/><rect x="1890.0" y="202.7" width="2" height="2" fill="#6a8ab0"/><rect x="1885.0" y="210.6" width="2" height="2" fill="#6a8ab0"/><rect x="1848.1" y="192.8" width="2" height="2" fill="#6a8ab0"/><rect x="1853.7" y="199.2" width="2" height="2" fill="#6c98b0"/><rect x="1850.0" y="201.7" width="2" height="2" fill="#70b090"/><rect x="1868.4" y="218.5" width="2" height="2" fill="#6c98b0"/><rect x="1789.0" y="215.0" width="2" height="2" fill="#70b090"/><rect x="1869.0" y="194.9" width="2" height="2" fill="#6a8ab0"/><rect x="1802.3" y="185.8" width="2" height="2" fill="#6a8ab0"/><rect x="1889.4" y="229.7" width="2" height="2" fill="#6c98b0"/><rect x="1779.1" y="180.1" width="2" height="2" fill="#6a8ab0"/><rect x="1850.9" y="184.2" width="2" height="2" fill="#6a8ab0"/><rect x="1812.3" y="212.9" width="2" height="2" fill="#6a8ab0"/><rect x="1779.2" y="197.9" width="2" height="2" fill="#70b090"/><rect x="1847.9" y="230.0" width="2" height="2" fill="#6c98b0"/><rect x="1869.0" y="180.1" width="2" height="2" fill="#70b090"/><rect x="1846.3" y="201.8" width="2" height="2" fill="#70b090"/><rect x="1818.5" y="172.4" width="2" height="2" fill="#6a8ab0"/><rect x="1820.8" y="204.5" width="2" height="2" fill="#6c98b0"/><rect x="1873.5" y="180.2" width="2" height="2" fill="#70b090"/><rect x="1797.2" y="174.4" width="2" height="2" fill="#6c98b0"/><rect x="1845.8" y="184.2" width="2" height="2" fill="#6a8ab0"/><rect x="1780.3" y="205.1" width="2" height="2" fill="#6c98b0"/><rect x="1795.3" y="187.4" width="2" height="2" fill="#6a8ab0"/><rect x="1819.2" y="221.4" width="2" height="2" fill="#6c98b0"/><rect x="1845.6" y="178.1" width="2" height="2" fill="#70b090"/><rect x="1856.1" y="195.5" width="2" height="2" fill="#70b090"/><rect x="1884.9" y="225.2" width="2" height="2" fill="#6a8ab0"/><rect x="1891.1" y="186.1" width="2" height="2" fill="#6c98b0"/><rect x="1821.0" y="168.5" width="2" height="2" fill="#6a8ab0"/><rect x="1825.8" y="171.0" width="2" height="2" fill="#70b090"/><rect x="1866.4" y="214.7" width="2" height="2" fill="#70b090"/><rect x="1783.9" y="186.0" width="2" height="2" fill="#6c98b0"/><rect x="1800.1" y="229.7" width="2" height="2" fill="#6c98b0"/><rect x="1880.1" y="218.3" width="2" height="2" fill="#6a8ab0"/><rect x="1859.0" y="192.2" width="2" height="2" fill="#6a8ab0"/><rect x="1865.1" y="223.4" width="2" height="2" fill="#6c98b0"/><rect x="1858.8" y="187.6" width="2" height="2" fill="#6a8ab0"/><rect x="1805.3" y="228.0" width="2" height="2" fill="#6a8ab0"/><rect x="1807.2" y="178.7" width="2" height="2" fill="#6c98b0"/><rect x="1801.4" y="206.8" width="2" height="2" fill="#70b090"/><rect x="1891.7" y="219.6" width="2" height="2" fill="#70b090"/><rect x="1880.6" y="179.2" width="2" height="2" fill="#70b090"/><rect x="1874.8" y="235.4" width="2" height="2" fill="#70b090"/><rect x="1789.6" y="193.7" width="2" height="2" fill="#6a8ab0"/><rect x="1803.2" y="219.5" width="2" height="2" fill="#6c98b0"/><rect x="1874.0" y="192.2" width="2" height="2" fill="#6c98b0"/><rect x="1875.7" y="215.5" width="2" height="2" fill="#70b090"/><rect x="1853.2" y="220.6" width="2" height="2" fill="#6a8ab0"/><rect x="1852.9" y="203.1" width="2" height="2" fill="#6c98b0"/><rect x="1892.3" y="189.9" width="2" height="2" fill="#6c98b0"/><rect x="1862.6" y="181.1" width="2" height="2" fill="#70b090"/><rect x="1854.1" y="182.5" width="2" height="2" fill="#6a8ab0"/><rect x="1839.2" y="193.4" width="2" height="2" fill="#6c98b0"/><rect x="1830.6" y="212.1" width="2" height="2" fill="#6a8ab0"/><rect x="1892.0" y="175.6" width="2" height="2" fill="#6a8ab0"/><rect x="1854.6" y="207.4" width="2" height="2" fill="#6a8ab0"/><rect x="1888.7" y="224.3" width="2" height="2" fill="#6c98b0"/><rect x="1814.9" y="192.3" width="2" height="2" fill="#6a8ab0"/><rect x="1808.6" y="231.4" width="2" height="2" fill="#70b090"/><rect x="1867.5" y="213.7" width="2" height="2" fill="#6c98b0"/><rect x="1839.2" y="179.0" width="2" height="2" fill="#70b090"/><rect x="1788.6" y="223.7" width="2" height="2" fill="#6a8ab0"/><rect x="1892.6" y="213.7" width="2" height="2" fill="#6a8ab0"/><rect x="1843.2" y="197.4" width="2" height="2" fill="#6a8ab0"/><rect x="1850.8" y="189.4" width="2" height="2" fill="#6c98b0"/><rect x="1819.9" y="229.0" width="2" height="2" fill="#70b090"/><rect x="1877.4" y="199.6" width="2" height="2" fill="#6a8ab0"/><rect x="1787.2" y="185.2" width="2" height="2" fill="#6a8ab0"/><rect x="1809.5" y="172.6" width="2" height="2" fill="#6a8ab0"/><rect x="1846.8" y="191.7" width="2" height="2" fill="#6a8ab0"/><rect x="1845.6" y="210.6" width="2" height="2" fill="#6c98b0"/><rect x="1878.4" y="171.3" width="2" height="2" fill="#6a8ab0"/><rect x="1890.8" y="168.1" width="2" height="2" fill="#6a8ab0"/><rect x="1850.9" y="212.5" width="2" height="2" fill="#6a8ab0"/><rect x="1802.1" y="179.5" width="2" height="2" fill="#6a8ab0"/><rect x="1798.4" y="234.5" width="2" height="2" fill="#70b090"/><rect x="1781.7" y="175.1" width="2" height="2" fill="#6c98b0"/><rect x="1802.8" y="221.4" width="2" height="2" fill="#70b090"/><rect x="1868.7" y="175.4" width="2" height="2" fill="#6a8ab0"/><rect x="1859.9" y="206.2" width="2" height="2" fill="#6c98b0"/><rect x="1856.4" y="225.7" width="2" height="2" fill="#6a8ab0"/><rect x="1830.1" y="173.9" width="2" height="2" fill="#6c98b0"/><rect x="1787.3" y="201.1" width="2" height="2" fill="#6a8ab0"/><rect x="1795.3" y="183.3" width="2" height="2" fill="#70b090"/><rect x="1810.9" y="228.3" width="2" height="2" fill="#6a8ab0"/><rect x="1880.7" y="183.7" width="2" height="2" fill="#6c98b0"/><rect x="1873.6" y="192.1" width="2" height="2" fill="#6a8ab0"/><rect x="1852.7" y="178.8" width="2" height="2" fill="#6a8ab0"/><rect x="1830.6" y="220.4" width="2" height="2" fill="#6a8ab0"/><rect x="1880.0" y="226.2" width="2" height="2" fill="#6a8ab0"/><rect x="1842.8" y="227.5" width="2" height="2" fill="#6a8ab0"/><rect x="1843.1" y="196.9" width="2" height="2" fill="#6a8ab0"/><rect x="1812.9" y="197.8" width="2" height="2" fill="#70b090"/><rect x="1806.2" y="195.6" width="2" height="2" fill="#6a8ab0"/><rect x="1805.0" y="228.3" width="2" height="2" fill="#6c98b0"/><rect x="1790.2" y="199.9" width="2" height="2" fill="#70b090"/><rect x="1782.1" y="194.2" width="2" height="2" fill="#6a8ab0"/><rect x="1841.6" y="226.9" width="2" height="2" fill="#6a8ab0"/><rect x="1789.2" y="231.1" width="2" height="2" fill="#6a8ab0"/><rect x="1872.3" y="180.0" width="2" height="2" fill="#6c98b0"/><rect x="1873.2" y="223.6" width="2" height="2" fill="#6c98b0"/><rect x="1833.1" y="215.5" width="2" height="2" fill="#6c98b0"/><rect x="1787.8" y="229.7" width="2" height="2" fill="#6c98b0"/><rect x="1847.1" y="172.2" width="2" height="2" fill="#6c98b0"/><rect x="1815.3" y="172.6" width="2" height="2" fill="#6c98b0"/><rect x="1792.7" y="226.6" width="2" height="2" fill="#70b090"/><rect x="1851.6" y="226.1" width="2" height="2" fill="#70b090"/><rect x="1861.2" y="194.1" width="2" height="2" fill="#6c98b0"/><rect x="1818.5" y="225.4" width="2" height="2" fill="#6c98b0"/><rect x="1802.5" y="218.3" width="2" height="2" fill="#6c98b0"/><rect x="1869.0" y="188.4" width="2" height="2" fill="#70b090"/><rect x="1796.9" y="185.4" width="2" height="2" fill="#6a8ab0"/><rect x="1835.3" y="202.6" width="2" height="2" fill="#6a8ab0"/><rect x="1823.7" y="233.4" width="2" height="2" fill="#6c98b0"/><rect x="1857.5" y="181.3" width="2" height="2" fill="#70b090"/><rect x="1832.3" y="212.9" width="2" height="2" fill="#6c98b0"/><rect x="1870.4" y="223.2" width="2" height="2" fill="#6a8ab0"/><rect x="1796.6" y="214.6" width="2" height="2" fill="#6a8ab0"/><rect x="1806.7" y="202.4" width="2" height="2" fill="#70b090"/><rect x="1821.8" y="216.0" width="2" height="2" fill="#70b090"/><rect x="1864.4" y="202.9" width="2" height="2" fill="#6c98b0"/><rect x="1892.3" y="204.3" width="2" height="2" fill="#6c98b0"/><rect x="1788.0" y="224.0" width="2" height="2" fill="#6c98b0"/><rect x="1880.1" y="173.4" width="2" height="2" fill="#70b090"/>
<rect x="1778" y="167.5" width="117" height="69" fill="none" stroke="#fff" stroke-width="1"/>
</g></svg>
<!-- IMAGE STATUS -->
<svg style="left:0;top:0" width="1914" height="640">
 <defs><linearGradient id="allg" x1="0" x2="0" y1="0" y2="1"><stop offset="0" stop-color="#b4b0e0"/><stop offset="1" stop-color="#b4dcb0"/></linearGradient></defs>
 <rect x="1180.5" y="545.5" width="11" height="11" fill="url(#allg)" stroke="#888"/>
 <line x1="1217.5" y1="536" x2="1217.5" y2="566" stroke="#aaa"/>
 <rect x="1224.5" y="545.5" width="11" height="11" fill="#c8c8c8" stroke="#888"/>
 <rect x="1224" y="558" width="36" height="2" fill="#c0c0c0"/>
 <rect x="1269.5" y="545.5" width="11" height="11" fill="#b0a8e0" stroke="#888"/>
 <rect x="1269" y="558" width="57" height="2" fill="#a89ce0"/>
 <rect x="1334.5" y="545.5" width="11" height="11" fill="#b4dcb0" stroke="#888"/>
 <rect x="1334" y="558" width="62" height="2" fill="#a8d8a0"/>
 <line x1="1535.5" y1="536" x2="1535.5" y2="566" stroke="#aaa"/>
 <line x1="1592.5" y1="536" x2="1592.5" y2="566" stroke="#aaa"/>
 <g stroke="#999" stroke-width="0.8">
 <circle cx="1772.5" cy="550.5" r="5.5" fill="#b8d4ec"/>
 <circle cx="1792.5" cy="550.5" r="5.5" fill="#a8c0e8"/>
 <circle cx="1812.5" cy="550.5" r="5.5" fill="#e8a8a8"/>
 <circle cx="1832.5" cy="550.5" r="5.5" fill="#e8e4a8"/>
 <circle cx="1852.5" cy="550.5" r="5.5" fill="#a8e0cc"/>
 <circle cx="1872.5" cy="550.5" r="5.5" fill="#e4e4a8"/>
 </g>
 <rect x="1807" y="558" width="11" height="1.5" fill="#e06060"/>
 <rect x="1827" y="558" width="11" height="1.5" fill="#e0d040"/>
 <g transform="translate(1895 550)">
  <circle r="6.5" fill="#333"/>
  <g fill="#333"><rect x="-2" y="-9" width="4" height="18"/><rect x="-9" y="-2" width="18" height="4"/>
  <rect x="-2" y="-9" width="4" height="18" transform="rotate(45)"/><rect x="-2" y="-9" width="4" height="18" transform="rotate(-45)"/></g>
  <circle r="2.5" fill="#d4d4d4"/>
 </g>
 <path d="M1194 597 L1198 600.5 L1194 604 Z" fill="#333"/>
 <rect x="1202.5" y="586.5" width="566" height="27" rx="3.5" fill="#fdfdfd" stroke="#8a8a8a"/>
<rect x="1218.5" y="592" width="3" height="15.5" fill="#e6e6e6"/>
<rect x="1223.5" y="592" width="3" height="15.5" fill="#e6e6e6"/>
<rect x="1228.5" y="592" width="3" height="15.5" fill="#e6e6e6"/>
<rect x="1233.5" y="592" width="3" height="15.5" fill="#e6e6e6"/>
<rect x="1238.5" y="592" width="3" height="15.5" fill="#e6e6e6"/>
<rect x="1243.5" y="592" width="3" height="15.5" fill="#e6e6e6"/>
<rect x="1248.5" y="592" width="3" height="15.5" fill="#e6e6e6"/>
<rect x="1253.5" y="592" width="3" height="15.5" fill="#e6e6e6"/>
<rect x="1258.5" y="592" width="3" height="15.5" fill="#e6e6e6"/>
<rect x="1263.5" y="592" width="3" height="15.5" fill="#e6e6e6"/>
<rect x="1268.5" y="592" width="3" height="15.5" fill="#e6e6e6"/>
<rect x="1273.5" y="592" width="3" height="15.5" fill="#e6e6e6"/>
<rect x="1288.3" y="592" width="3" height="15.5" fill="#e6e6e6"/>
<rect x="1293.3" y="592" width="3" height="15.5" fill="#a3a3a3"/>
<rect x="1298.3" y="592" width="3" height="15.5" fill="#a3a3a3"/>
<rect x="1303.3" y="592" width="3" height="15.5" fill="#a3a3a3"/>
<rect x="1308.3" y="592" width="3" height="15.5" fill="#a3a3a3"/>
<rect x="1313.3" y="592" width="3" height="15.5" fill="#a3a3a3"/>
<rect x="1318.3" y="592" width="3" height="15.5" fill="#a3a3a3"/>
<rect x="1323.3" y="592" width="3" height="15.5" fill="#a3a3a3"/>
<rect x="1328.3" y="592" width="3" height="15.5" fill="#a3a3a3"/>
<rect x="1333.3" y="592" width="3" height="15.5" fill="#a3a3a3"/>
<rect x="1338.3" y="592" width="3" height="15.5" fill="#a3a3a3"/>
<rect x="1343.3" y="592" width="3" height="15.5" fill="#e6e6e6"/>
<rect x="1358.2" y="592" width="3" height="15.5" fill="#e6e6e6"/>
<rect x="1363.2" y="592" width="3" height="15.5" fill="#a3a3a3"/>
<rect x="1368.2" y="592" width="3" height="15.5" fill="#a3a3a3"/>
<rect x="1373.2" y="592" width="3" height="15.5" fill="#a3a3a3"/>
<rect x="1378.2" y="592" width="3" height="15.5" fill="#a3a3a3"/>
<rect x="1383.2" y="592" width="3" height="15.5" fill="#a3a3a3"/>
<rect x="1388.2" y="592" width="3" height="15.5" fill="#a3a3a3"/>
<rect x="1393.2" y="592" width="3" height="15.5" fill="#a3a3a3"/>
<rect x="1398.2" y="592" width="3" height="15.5" fill="#a3a3a3"/>
<rect x="1403.2" y="592" width="3" height="15.5" fill="#a3a3a3"/>
<rect x="1408.2" y="592" width="3" height="15.5" fill="#a3a3a3"/>
<rect x="1413.2" y="592" width="3" height="15.5" fill="#e6e6e6"/>
<rect x="1428.0" y="592" width="3" height="15.5" fill="#e6e6e6"/>
<rect x="1433.0" y="592" width="3" height="15.5" fill="#a3a3a3"/>
<rect x="1438.0" y="592" width="3" height="15.5" fill="#a3a3a3"/>
<rect x="1443.0" y="592" width="3" height="15.5" fill="#a3a3a3"/>
<rect x="1448.0" y="592" width="3" height="15.5" fill="#a3a3a3"/>
<rect x="1453.0" y="592" width="3" height="15.5" fill="#a3a3a3"/>
<rect x="1458.0" y="592" width="3" height="15.5" fill="#a3a3a3"/>
<rect x="1463.0" y="592" width="3" height="15.5" fill="#a3a3a3"/>
<rect x="1468.0" y="592" width="3" height="15.5" fill="#a3a3a3"/>
<rect x="1473.0" y="592" width="3" height="15.5" fill="#a3a3a3"/>
<rect x="1478.0" y="592" width="3" height="15.5" fill="#a3a3a3"/>
<rect x="1483.0" y="592" width="3" height="15.5" fill="#e6e6e6"/>
<rect x="1497.9" y="592" width="3" height="15.5" fill="#e6e6e6"/>
<rect x="1502.9" y="592" width="3" height="15.5" fill="#a3a3a3"/>
<rect x="1507.9" y="592" width="3" height="15.5" fill="#a3a3a3"/>
<rect x="1512.9" y="592" width="3" height="15.5" fill="#a3a3a3"/>
<rect x="1517.9" y="592" width="3" height="15.5" fill="#a3a3a3"/>
<rect x="1522.9" y="592" width="3" height="15.5" fill="#a3a3a3"/>
<rect x="1527.9" y="592" width="3" height="15.5" fill="#a3a3a3"/>
<rect x="1532.9" y="592" width="3" height="15.5" fill="#a3a3a3"/>
<rect x="1537.9" y="592" width="3" height="15.5" fill="#a3a3a3"/>
<rect x="1542.9" y="592" width="3" height="15.5" fill="#a3a3a3"/>
<rect x="1547.9" y="592" width="3" height="15.5" fill="#a3a3a3"/>
<rect x="1552.9" y="592" width="3" height="15.5" fill="#e6e6e6"/>
<rect x="1567.8" y="592" width="3" height="15.5" fill="#e6e6e6"/>
<rect x="1572.8" y="592" width="3" height="15.5" fill="#a3a3a3"/>
<rect x="1577.8" y="592" width="3" height="15.5" fill="#a3a3a3"/>
<rect x="1582.8" y="592" width="3" height="15.5" fill="#a3a3a3"/>
<rect x="1587.8" y="592" width="3" height="15.5" fill="#a3a3a3"/>
<rect x="1592.8" y="592" width="3" height="15.5" fill="#a3a3a3"/>
<rect x="1597.8" y="592" width="3" height="15.5" fill="#a3a3a3"/>
<rect x="1602.8" y="592" width="3" height="15.5" fill="#a3a3a3"/>
<rect x="1607.8" y="592" width="3" height="15.5" fill="#a3a3a3"/>
<rect x="1612.8" y="592" width="3" height="15.5" fill="#a3a3a3"/>
<rect x="1617.8" y="592" width="3" height="15.5" fill="#a3a3a3"/>
<rect x="1622.8" y="592" width="3" height="15.5" fill="#e6e6e6"/>
<rect x="1637.6" y="592" width="3" height="15.5" fill="#e6e6e6"/>
<rect x="1642.6" y="592" width="3" height="15.5" fill="#a3a3a3"/>
<rect x="1647.6" y="592" width="3" height="15.5" fill="#a3a3a3"/>
<rect x="1652.6" y="592" width="3" height="15.5" fill="#a3a3a3"/>
<rect x="1657.6" y="592" width="3" height="15.5" fill="#a3a3a3"/>
<rect x="1662.6" y="592" width="3" height="15.5" fill="#a3a3a3"/>
<rect x="1667.6" y="592" width="3" height="15.5" fill="#a3a3a3"/>
<rect x="1672.6" y="592" width="3" height="15.5" fill="#a3a3a3"/>
<rect x="1677.6" y="592" width="3" height="15.5" fill="#a3a3a3"/>
<rect x="1682.6" y="592" width="3" height="15.5" fill="#a3a3a3"/>
<rect x="1687.6" y="592" width="3" height="15.5" fill="#a3a3a3"/>
<rect x="1692.6" y="592" width="3" height="15.5" fill="#e6e6e6"/>
<rect x="1707.4" y="592" width="3" height="15.5" fill="#e6e6e6"/>
<rect x="1712.4" y="592" width="3" height="15.5" fill="#e6e6e6"/>
<rect x="1717.4" y="592" width="3" height="15.5" fill="#e6e6e6"/>
<rect x="1722.4" y="592" width="3" height="15.5" fill="#e6e6e6"/>
<rect x="1727.4" y="592" width="3" height="15.5" fill="#e6e6e6"/>
<rect x="1732.4" y="592" width="3" height="15.5" fill="#e6e6e6"/>
<rect x="1737.4" y="592" width="3" height="15.5" fill="#e6e6e6"/>
<rect x="1742.4" y="592" width="3" height="15.5" fill="#e6e6e6"/>
<rect x="1747.4" y="592" width="3" height="15.5" fill="#e6e6e6"/>
<rect x="1752.4" y="592" width="3" height="15.5" fill="#e6e6e6"/>
<rect x="1757.4" y="592" width="3" height="15.5" fill="#e6e6e6"/>
<rect x="1762.4" y="592" width="3" height="15.5" fill="#e6e6e6"/>
<rect x="1284" y="589" width="20" height="22" fill="#fdfdfd"/>
<rect x="1287.3" y="591.3" width="14.5" height="17" fill="none" stroke="#1f5fc0" stroke-width="2"/>
<rect x="1290" y="594" width="9" height="11.5" fill="#a3a3a3"/>
<rect x="1305" y="592" width="1" height="15.5" fill="#777"/>
<g fill="#333">
<rect x="1778" y="593" width="2" height="14"/><path d="M1789 593 L1781 600 L1789 607 Z"/>
<path d="M1807 593 L1801 600 L1807 607 L1808.5 605.5 L1804 600 L1808.5 594.5 Z M1813.5 593 L1807.5 600 L1813.5 607 L1815 605.5 L1810.5 600 L1815 594.5 Z"/>
<path d="M1828 593 L1836 600 L1828 607 Z"/>
<path d="M1851 593 L1857 600 L1851 607 L1849.5 605.5 L1854 600 L1849.5 594.5 Z M1857.5 593 L1863.5 600 L1857.5 607 L1856 605.5 L1860.5 600 L1856 594.5 Z"/>
<path d="M1876 593 L1884 600 L1876 607 Z"/><rect x="1884" y="593" width="2" height="14"/>
<path d="M1897 599 L1904 599 L1900.5 602.5 Z"/>
</g></svg>
<div class="t" style="left:1196px;top:546.5px;font-size:11px;color:#2d6fd6">All</div>
<div class="t" style="left:1240px;top:546.5px;font-size:11px;color:#111">BRF</div>
<div class="t" style="left:1285px;top:546.5px;font-size:11px;color:#111">Hoechst</div>
<div class="t" style="left:1350px;top:546.5px;font-size:11px;color:#111">Alexa488</div>
<div class="t" style="left:1467px;top:546.5px;font-size:11px;color:#111">0.32 µm/px</div>
<div class="t" style="left:1546px;top:546.5px;font-size:11px;color:#111">3x12bit</div>
<div class="t" style="left:1607px;top:546.5px;font-size:11px;color:#111">2800 x 2800 pixels</div>
<div class="t" style="left:1179.5px;top:594px;font-size:12px;color:#222">W</div>
<div class="t" style="left:1208.0px;top:595px;font-size:11px;color:#111">A</div>
<div class="t" style="left:1276.3px;top:595px;font-size:11px;color:#111">B</div>
<div class="t" style="left:1346.2px;top:595px;font-size:11px;color:#111">C</div>
<div class="t" style="left:1416.0px;top:595px;font-size:11px;color:#111">D</div>
<div class="t" style="left:1485.9px;top:595px;font-size:11px;color:#111">E</div>
<div class="t" style="left:1555.8px;top:595px;font-size:11px;color:#111">F</div>
<div class="t" style="left:1625.6px;top:595px;font-size:11px;color:#111">G</div>
<div class="t" style="left:1695.4px;top:595px;font-size:11px;color:#111">H</div>

<!-- BOTTOM1 TABLE -->
<svg style="left:0;top:0" width="1914" height="968">

 <circle cx="447.5" cy="659" r="10.8" fill="none" stroke="#111" stroke-width="2.6"/>
 <rect x="476.5" y="647.5" width="23" height="23" fill="#d4d4d4" stroke="#2d6fd6" stroke-width="1.3"/>
 <rect x="477" y="648" width="22" height="5.5" fill="#8fb0e6"/>
 <path d="M476.5 653.5 L499.5 653.5 M476.5 659.5 L499.5 659.5 M476.5 665 L499.5 665 M484 647.5 L484 670.5 M491.5 647.5 L491.5 670.5" stroke="#2d6fd6" stroke-width="1.3"/>
 <rect x="516.5" y="647.5" width="22.5" height="23" fill="none" stroke="#111" stroke-width="1.7"/>
 <path d="M519.5 651.5 L531 651.5 M533 651.5 L536 651.5 M519.5 654.5 L530 654.5 M519.5 657 L524 657" stroke="#111" stroke-width="1.3"/>
 <path d="M559.5 647.5 L572 647.5 L577 652.5 L577 670.5 L559.5 670.5 Z" fill="none" stroke="#111" stroke-width="1.7"/><rect x="562" y="650" width="5" height="4" fill="#111"/>
 <path d="M562 651 L568 651 M562 655 L574 655 M562 658.5 L574 658.5" stroke="#111" stroke-width="1.2"/>
 <rect x="562" y="662" width="2.5" height="6" fill="#111"/><rect x="566" y="664" width="2.5" height="4" fill="#111"/><rect x="570" y="662.5" width="2.5" height="5.5" fill="#111"/>
 <line x1="597.5" y1="650" x2="597.5" y2="669" stroke="#aaa"/>
 <path d="M616 659 L621 655.5 L621 662.5 Z M638 659 L633 655.5 L633 662.5 Z" fill="#111"/>
 <path d="M622 659 L632 659" stroke="#111" stroke-width="1.3" stroke-dasharray="1.3 1.3"/>
 <path d="M657.5 646.5 L670 646.5 L676 652.5 L676 671 L657.5 671 Z" fill="none" stroke="#111" stroke-width="1.6"/>
 <path d="M670 646.5 L670 652.5 L676 652.5" fill="none" stroke="#111" stroke-width="1"/>
 <path d="M671.5 656 L661.5 656 L666.5 661 L661.5 666.5 L671.5 666.5" fill="none" stroke="#111" stroke-width="1.2"/>
 <path d="M697 656 L697 670 L715 670 L715 663" fill="none" stroke="#111" stroke-width="2"/>
 <path d="M700 666 Q701 656 711 655 L711 650.5 L719 657 L711 663 L711 659 Q704 659 700 666 Z" fill="#111"/>

<rect x="429" y="680" width="349" height="21" fill="#d6d6d6"/>
<rect x="429" y="700" width="349" height="1" fill="#a8a8a8"/>
<rect x="429" y="701" width="349" height="20" fill="#fcfcfc"/>
<rect x="429" y="721" width="349" height="20" fill="#efefef"/>
<rect x="429" y="741" width="349" height="20" fill="#fcfcfc"/>
<rect x="429" y="761" width="349" height="20" fill="#efefef"/>
<rect x="429" y="781" width="349" height="20" fill="#fcfcfc"/>
<rect x="429" y="801" width="349" height="20" fill="#efefef"/>
<rect x="429" y="821" width="349" height="20" fill="#fcfcfc"/>
<rect x="429" y="841" width="349" height="20" fill="#efefef"/>
<rect x="429" y="861" width="349" height="20" fill="#fcfcfc"/>
<rect x="429" y="881" width="349" height="20" fill="#efefef"/>
<rect x="429" y="901" width="349" height="20" fill="#fcfcfc"/>
<rect x="429" y="921" width="349" height="20" fill="#efefef"/>
<rect x="429" y="941" width="349" height="9" fill="#fcfcfc"/>
<rect x="478" y="681" width="1" height="269" fill="#a8a8a8"/>
<rect x="530" y="681" width="1" height="269" fill="#a8a8a8"/>
<rect x="580" y="681" width="1" height="269" fill="#a8a8a8"/>
<rect x="697" y="681" width="1" height="269" fill="#a8a8a8"/>
<rect x="761" y="681" width="1" height="269" fill="#a8a8a8"/>
<rect x="778" y="680" width="17" height="270" fill="#efefef"/>
<rect x="780" y="682" width="13" height="55" rx="6.5" fill="#9a9a9a"/>
<rect x="429" y="950" width="366" height="18" fill="#efefef"/>
<rect x="430" y="952" width="104" height="13" rx="6.5" fill="#9a9a9a"/>
<rect x="795" y="640" width="1" height="328" fill="#b4b4b4"/>
</svg>
<div class="t" style="left:749px;top:655px;font-size:11px;color:#111">60 rows</div>
<div class="t" style="left:433px;top:686.5px;color:#111">Well</div>
<div class="t" style="left:483px;top:686.5px;color:#111">Control</div>
<div class="t" style="left:535px;top:686.5px;color:#111">Labels</div>
<div class="t" style="left:585px;top:686.5px;color:#111">Concentration [ng/ml]</div>
<div class="t" style="left:703px;top:686.5px;color:#111">Compound</div>
<div class="t" style="left:765px;top:686.5px;color:#111">Gr</div>
<div class="a" style="left:429px;top:701px;width:349px;height:249px;overflow:hidden">
<div class="t" style="left:4px;top:7px;color:#111">B2</div>
<div class="t" style="left:54px;top:7px;color:#111">negative</div>
<div class="t" style="left:170px;top:7px;width:95px;text-align:right;color:#111">0</div>
<div class="t" style="left:274px;top:7px;color:#111">TNF-α</div>
<div class="t" style="left:336px;top:7px;color:#111">W'</div>
<div class="t" style="left:4px;top:27px;color:#111">B3</div>
<div class="t" style="left:170px;top:27px;width:95px;text-align:right;color:#111">0.09</div>
<div class="t" style="left:274px;top:27px;color:#111">TNF-α</div>
<div class="t" style="left:336px;top:27px;color:#111">W'</div>
<div class="t" style="left:4px;top:47px;color:#111">B4</div>
<div class="t" style="left:170px;top:47px;width:95px;text-align:right;color:#111">0.27</div>
<div class="t" style="left:274px;top:47px;color:#111">TNF-α</div>
<div class="t" style="left:336px;top:47px;color:#111">W'</div>
<div class="t" style="left:4px;top:67px;color:#111">B5</div>
<div class="t" style="left:170px;top:67px;width:95px;text-align:right;color:#111">0.82</div>
<div class="t" style="left:274px;top:67px;color:#111">TNF-α</div>
<div class="t" style="left:336px;top:67px;color:#111">W'</div>
<div class="t" style="left:4px;top:87px;color:#111">B6</div>
<div class="t" style="left:170px;top:87px;width:95px;text-align:right;color:#111">2.47</div>
<div class="t" style="left:274px;top:87px;color:#111">TNF-α</div>
<div class="t" style="left:336px;top:87px;color:#111">W'</div>
<div class="t" style="left:4px;top:107px;color:#111">B7</div>
<div class="t" style="left:170px;top:107px;width:95px;text-align:right;color:#111">7.4</div>
<div class="t" style="left:274px;top:107px;color:#111">TNF-α</div>
<div class="t" style="left:336px;top:107px;color:#111">W'</div>
<div class="t" style="left:4px;top:127px;color:#111">B8</div>
<div class="t" style="left:170px;top:127px;width:95px;text-align:right;color:#111">22.2</div>
<div class="t" style="left:274px;top:127px;color:#111">TNF-α</div>
<div class="t" style="left:336px;top:127px;color:#111">W'</div>
<div class="t" style="left:4px;top:147px;color:#111">B9</div>
<div class="t" style="left:170px;top:147px;width:95px;text-align:right;color:#111">66.7</div>
<div class="t" style="left:274px;top:147px;color:#111">TNF-α</div>
<div class="t" style="left:336px;top:147px;color:#111">W'</div>
<div class="t" style="left:4px;top:167px;color:#111">B10</div>
<div class="t" style="left:54px;top:167px;color:#111">positive</div>
<div class="t" style="left:170px;top:167px;width:95px;text-align:right;color:#111">200</div>
<div class="t" style="left:274px;top:167px;color:#111">TNF-α</div>
<div class="t" style="left:336px;top:167px;color:#111">W'</div>
<div class="t" style="left:4px;top:187px;color:#111">B11</div>
<div class="t" style="left:170px;top:187px;width:95px;text-align:right;color:#111">600</div>
<div class="t" style="left:274px;top:187px;color:#111">TNF-α</div>
<div class="t" style="left:336px;top:187px;color:#111">W'</div>
<div class="t" style="left:4px;top:207px;color:#111">C2</div>
<div class="t" style="left:54px;top:207px;color:#111">negative</div>
<div class="t" style="left:170px;top:207px;width:95px;text-align:right;color:#111">0</div>
<div class="t" style="left:274px;top:207px;color:#111">TNF-α</div>
<div class="t" style="left:336px;top:207px;color:#111">W'</div>
<div class="t" style="left:4px;top:227px;color:#111">C3</div>
<div class="t" style="left:170px;top:227px;width:95px;text-align:right;color:#111">0.09</div>
<div class="t" style="left:274px;top:227px;color:#111">TNF-α</div>
<div class="t" style="left:336px;top:227px;color:#111">W'</div>
<div class="t" style="left:4px;top:247px;color:#111">C4</div>
<div class="t" style="left:170px;top:247px;width:95px;text-align:right;color:#111">0.27</div>
<div class="t" style="left:274px;top:247px;color:#111">TNF-α</div>
<div class="t" style="left:336px;top:247px;color:#111">W'</div>
</div>
<div class="t" style="left:443px;top:652px;font-size:18px;font-weight:bold;font-style:italic;font-family:'Liberation Serif',serif;color:#111">i</div>
<!-- DOSE PLOT -->
<svg style="left:0;top:0" width="1914" height="968">

 <path d="M805 647 L805 670 L829 670" fill="none" stroke="#111" stroke-width="1.3"/>
 <path d="M808 667 Q815 667 818 657 Q821 649 828 649" fill="none" stroke="#111" stroke-width="1.3"/>
 <path d="M1052 657.5 L1059 657.5 L1055.5 661.5 Z" fill="#111"/>
 <g stroke="#2d6fd6" stroke-width="1.5" fill="none">
  <path d="M1080 652.5 L1085 652.5 M1082.5 652.5 L1082.5 669 M1080 669 L1085 669"/>
  <path d="M1092.5 646.5 L1098.5 646.5 M1095.5 646.5 L1095.5 670.5 M1092.5 670.5 L1098.5 670.5"/>
 </g>
 <circle cx="1082.5" cy="662" r="2" fill="#2d6fd6"/><circle cx="1095.5" cy="657" r="2" fill="#2d6fd6"/>
 <path d="M1118.5 653 L1121.5 648 L1124.5 653 Z" fill="#2d6fd6"/>
 <circle cx="1121.5" cy="658.5" r="2.6" fill="#2d6fd6"/>
 <rect x="1119" y="662.5" width="5" height="5" fill="#2d6fd6"/>
 <path d="M1126 650.5 L1141 650.5 M1126 658.5 L1141 658.5 M1126 665 L1141 665" stroke="#2d6fd6" stroke-width="1" stroke-dasharray="1.2 1.2"/>

<rect x="850" y="686" width="283.5" height="232" fill="#fdfdfd" stroke="#eaeaea" stroke-width="1"/>
<line x1="900.2" y1="686" x2="900.2" y2="918" stroke="#e4e4e4" stroke-width="1"/>
<line x1="949.1" y1="686" x2="949.1" y2="918" stroke="#e4e4e4" stroke-width="1"/>
<line x1="998.1" y1="686" x2="998.1" y2="918" stroke="#e4e4e4" stroke-width="1"/>
<line x1="1047.0" y1="686" x2="1047.0" y2="918" stroke="#e4e4e4" stroke-width="1"/>
<line x1="1096.0" y1="686" x2="1096.0" y2="918" stroke="#e4e4e4" stroke-width="1"/>
<line x1="850" y1="875.2" x2="1133.5" y2="875.2" stroke="#e4e4e4" stroke-width="1"/>
<line x1="850" y1="812.2" x2="1133.5" y2="812.2" stroke="#e4e4e4" stroke-width="1"/>
<line x1="850" y1="749.2" x2="1133.5" y2="749.2" stroke="#e4e4e4" stroke-width="1"/>
<rect x="859.5" y="695.5" width="160" height="43" fill="#fdfdfd" stroke="#ececec"/>
<circle cx="874.2" cy="708.2" r="4" fill="#6a6a6a" stroke="#444" stroke-width="1"/>
<line x1="864" y1="725.4" x2="884" y2="725.4" stroke="#8ab0e0" stroke-width="2"/>
<path d="M897.9 795.6 L897.9 848.9 M893.4 795.6 L902.4 795.6 M893.4 848.9 L902.4 848.9" stroke="#9c9c9c" stroke-width="1.8" fill="none"/>
<path d="M921.3 806.2 L921.3 879.2 M916.8 806.2 L925.8 806.2 M916.8 879.2 L925.8 879.2" stroke="#9c9c9c" stroke-width="1.8" fill="none"/>
<path d="M944.9 696.2 L944.9 901.9 M940.4 696.2 L949.4 696.2 M940.4 901.9 L949.4 901.9" stroke="#9c9c9c" stroke-width="1.8" fill="none"/>
<path d="M968.3 770.1 L968.3 847.9 M963.8 770.1 L972.8 770.1 M963.8 847.9 L972.8 847.9" stroke="#9c9c9c" stroke-width="1.8" fill="none"/>
<path d="M991.6 771.5 L991.6 873.7 M987.1 771.5 L996.1 771.5 M987.1 873.7 L996.1 873.7" stroke="#9c9c9c" stroke-width="1.8" fill="none"/>
<path d="M1015.0 735.4 L1015.0 897.4 M1010.5 735.4 L1019.5 735.4 M1010.5 897.4 L1019.5 897.4" stroke="#9c9c9c" stroke-width="1.8" fill="none"/>
<path d="M1038.4 749.2 L1038.4 906.7 M1033.9 749.2 L1042.9 749.2 M1033.9 906.7 L1042.9 906.7" stroke="#9c9c9c" stroke-width="1.8" fill="none"/>
<path d="M1061.7 736.8 L1061.7 805.2 M1057.2 736.8 L1066.2 736.8 M1057.2 805.2 L1066.2 805.2" stroke="#9c9c9c" stroke-width="1.8" fill="none"/>
<path d="M1085.1 761.2 L1085.1 853.0 M1080.6 761.2 L1089.6 761.2 M1080.6 853.0 L1089.6 853.0" stroke="#9c9c9c" stroke-width="1.8" fill="none"/>
<polyline points="850.0,820.0 850.9,820.0 851.9,820.0 852.8,820.0 853.8,820.0 854.7,820.0 855.7,820.0 856.6,820.0 857.6,820.0 858.5,820.0 859.5,820.0 860.4,820.0 861.4,820.0 862.3,820.0 863.3,820.0 864.2,820.0 865.2,820.0 866.1,820.0 867.1,820.0 868.0,820.0 869.0,820.0 869.9,820.0 870.9,820.0 871.8,820.0 872.8,820.0 873.7,820.0 874.7,820.0 875.6,820.0 876.5,820.0 877.5,820.0 878.4,820.0 879.4,820.0 880.3,820.0 881.3,820.0 882.2,820.0 883.2,820.0 884.1,820.0 885.1,820.0 886.0,820.0 887.0,820.0 887.9,820.0 888.9,820.0 889.8,820.0 890.8,820.0 891.7,820.0 892.7,820.0 893.6,820.0 894.6,820.0 895.5,820.0 896.5,820.0 897.4,820.0 898.4,820.0 899.3,820.0 900.3,820.0 901.2,820.0 902.1,820.0 903.1,820.0 904.0,820.0 905.0,820.0 905.9,820.0 906.9,820.0 907.8,820.0 908.8,820.0 909.7,820.0 910.7,820.0 911.6,820.0 912.6,820.0 913.5,820.0 914.5,820.0 915.4,820.0 916.4,820.0 917.3,820.0 918.3,820.0 919.2,820.0 920.2,820.0 921.1,820.0 922.1,820.0 923.0,820.0 924.0,820.0 924.9,820.0 925.9,820.0 926.8,820.0 927.7,820.0 928.7,820.0 929.6,820.0 930.6,820.0 931.5,820.0 932.5,820.0 933.4,820.0 934.4,820.0 935.3,820.0 936.3,820.0 937.2,820.0 938.2,820.0 939.1,820.0 940.1,820.0 941.0,820.0 942.0,820.0 942.9,820.0 943.9,820.0 944.8,820.0 945.8,820.0 946.7,820.0 947.7,820.0 948.6,820.0 949.6,820.0 950.5,820.0 951.5,820.0 952.4,820.0 953.3,820.0 954.3,820.0 955.2,820.0 956.2,820.0 957.1,820.0 958.1,820.0 959.0,820.0 960.0,820.0 960.9,820.0 961.9,820.0 962.8,820.0 963.8,820.0 964.7,820.0 965.7,820.0 966.6,820.0 967.6,820.0 968.5,820.0 969.5,820.0 970.4,820.0 971.4,820.0 972.3,820.0 973.3,820.0 974.2,820.0 975.2,820.0 976.1,820.0 977.1,820.0 978.0,820.0 978.9,820.0 979.9,820.0 980.8,820.0 981.8,820.0 982.7,820.0 983.7,820.0 984.6,820.0 985.6,820.0 986.5,820.0 987.5,820.0 988.4,820.0 989.4,820.0 990.3,820.0 991.3,820.0 992.2,820.0 993.2,820.0 994.1,820.0 995.1,820.0 996.0,820.0 997.0,820.0 997.9,820.0 998.9,820.0 999.8,820.0 1000.8,820.0 1001.7,820.0 1002.7,820.0 1003.6,820.0 1004.6,820.0 1005.5,820.0 1006.4,820.0 1007.4,820.0 1008.3,820.0 1009.3,820.0 1010.2,820.0 1011.2,820.0 1012.1,820.0 1013.1,820.0 1014.0,820.0 1015.0,820.0 1015.9,820.0 1016.9,820.0 1017.8,820.0 1018.8,820.0 1019.7,820.0 1020.7,820.0 1021.6,820.0 1022.6,820.0 1023.5,820.0 1024.5,820.0 1025.4,820.0 1026.4,819.9 1027.3,819.9 1028.3,819.9 1029.2,819.9 1030.2,819.9 1031.1,819.8 1032.0,819.7 1033.0,819.7 1033.9,819.6 1034.9,819.4 1035.8,819.3 1036.8,819.1 1037.7,818.8 1038.7,818.4 1039.6,818.0 1040.6,817.4 1041.5,816.7 1042.5,815.8 1043.4,814.7 1044.4,813.4 1045.3,811.9 1046.3,810.2 1047.2,808.4 1048.2,806.4 1049.1,804.3 1050.1,802.3 1051.0,800.3 1052.0,798.4 1052.9,796.8 1053.9,795.3 1054.8,794.1 1055.8,793.0 1056.7,792.2 1057.6,791.5 1058.6,791.0 1059.5,790.5 1060.5,790.2 1061.4,789.9 1062.4,789.7 1063.3,789.5 1064.3,789.4 1065.2,789.3 1066.2,789.2 1067.1,789.2 1068.1,789.1 1069.0,789.1 1070.0,789.1 1070.9,789.1 1071.9,789.0 1072.8,789.0 1073.8,789.0 1074.7,789.0 1075.7,789.0 1076.6,789.0 1077.6,789.0 1078.5,789.0 1079.5,789.0 1080.4,789.0 1081.4,789.0 1082.3,789.0 1083.2,789.0 1084.2,789.0 1085.1,789.0 1086.1,789.0 1087.0,789.0 1088.0,789.0 1088.9,789.0 1089.9,789.0 1090.8,789.0 1091.8,789.0 1092.7,789.0 1093.7,789.0 1094.6,789.0 1095.6,789.0 1096.5,789.0 1097.5,789.0 1098.4,789.0 1099.4,789.0 1100.3,789.0 1101.3,789.0 1102.2,789.0 1103.2,789.0 1104.1,789.0 1105.1,789.0 1106.0,789.0 1107.0,789.0 1107.9,789.0 1108.8,789.0 1109.8,789.0 1110.7,789.0 1111.7,789.0 1112.6,789.0 1113.6,789.0 1114.5,789.0 1115.5,789.0 1116.4,789.0 1117.4,789.0 1118.3,789.0 1119.3,789.0 1120.2,789.0 1121.2,789.0 1122.1,789.0 1123.1,789.0 1124.0,789.0 1125.0,789.0 1125.9,789.0 1126.9,789.0 1127.8,789.0 1128.8,789.0 1129.7,789.0 1130.7,789.0 1131.6,789.0 1132.6,789.0 1133.5,789.0" fill="none" stroke="#80a8e0" stroke-width="2"/>
<rect x="1026" y="779" width="45" height="14" fill="#fdfdfd"/>
<path d="M1055 793 L1050.5 804" stroke="#80a8e0" stroke-width="1.8"/>
<circle cx="1049.6" cy="804.5" r="4.2" fill="#80a8e0"/>
<circle cx="897.9" cy="822.4" r="4.6" fill="#6c6c6c" stroke="#3c3c3c" stroke-width="1"/>
<circle cx="921.3" cy="842.7" r="4.6" fill="#6c6c6c" stroke="#3c3c3c" stroke-width="1"/>
<circle cx="944.9" cy="799.0" r="4.6" fill="#6c6c6c" stroke="#3c3c3c" stroke-width="1"/>
<circle cx="968.3" cy="809.3" r="4.6" fill="#6c6c6c" stroke="#3c3c3c" stroke-width="1"/>
<circle cx="991.6" cy="822.8" r="4.6" fill="#6c6c6c" stroke="#3c3c3c" stroke-width="1"/>
<circle cx="1015.0" cy="816.6" r="4.6" fill="#6c6c6c" stroke="#3c3c3c" stroke-width="1"/>
<circle cx="1038.4" cy="828.3" r="4.6" fill="#6c6c6c" stroke="#3c3c3c" stroke-width="1"/>
<circle cx="1061.7" cy="771.2" r="4.6" fill="#6c6c6c" stroke="#3c3c3c" stroke-width="1"/>
<circle cx="1085.1" cy="807.0" r="4.6" fill="#6c6c6c" stroke="#3c3c3c" stroke-width="1"/>
<path d="M850 686 L850 918.5 L1133.5 918.5" fill="none" stroke="#111" stroke-width="1.6"/>
<line x1="843" y1="875.2" x2="850" y2="875.2" stroke="#111" stroke-width="1.3"/>
<line x1="843" y1="812.2" x2="850" y2="812.2" stroke="#111" stroke-width="1.3"/>
<line x1="843" y1="749.2" x2="850" y2="749.2" stroke="#111" stroke-width="1.3"/>
<line x1="843" y1="686.2" x2="850" y2="686.2" stroke="#111" stroke-width="1.3"/>
<line x1="845.5" y1="913.0" x2="850" y2="913.0" stroke="#333" stroke-width="0.9"/>
<line x1="845.5" y1="900.4" x2="850" y2="900.4" stroke="#333" stroke-width="0.9"/>
<line x1="845.5" y1="887.8" x2="850" y2="887.8" stroke="#333" stroke-width="0.9"/>
<line x1="845.5" y1="875.2" x2="850" y2="875.2" stroke="#333" stroke-width="0.9"/>
<line x1="845.5" y1="862.6" x2="850" y2="862.6" stroke="#333" stroke-width="0.9"/>
<line x1="845.5" y1="850.0" x2="850" y2="850.0" stroke="#333" stroke-width="0.9"/>
<line x1="845.5" y1="837.4" x2="850" y2="837.4" stroke="#333" stroke-width="0.9"/>
<line x1="845.5" y1="824.8" x2="850" y2="824.8" stroke="#333" stroke-width="0.9"/>
<line x1="845.5" y1="812.2" x2="850" y2="812.2" stroke="#333" stroke-width="0.9"/>
<line x1="845.5" y1="799.6" x2="850" y2="799.6" stroke="#333" stroke-width="0.9"/>
<line x1="845.5" y1="787.0" x2="850" y2="787.0" stroke="#333" stroke-width="0.9"/>
<line x1="845.5" y1="774.4" x2="850" y2="774.4" stroke="#333" stroke-width="0.9"/>
<line x1="845.5" y1="761.8" x2="850" y2="761.8" stroke="#333" stroke-width="0.9"/>
<line x1="845.5" y1="749.2" x2="850" y2="749.2" stroke="#333" stroke-width="0.9"/>
<line x1="845.5" y1="736.6" x2="850" y2="736.6" stroke="#333" stroke-width="0.9"/>
<line x1="845.5" y1="724.0" x2="850" y2="724.0" stroke="#333" stroke-width="0.9"/>
<line x1="845.5" y1="711.4" x2="850" y2="711.4" stroke="#333" stroke-width="0.9"/>
<line x1="845.5" y1="698.8" x2="850" y2="698.8" stroke="#333" stroke-width="0.9"/>
<line x1="845.5" y1="686.2" x2="850" y2="686.2" stroke="#333" stroke-width="0.9"/>
<line x1="851.2" y1="918" x2="851.2" y2="924" stroke="#111" stroke-width="1.4"/>
<line x1="865.9" y1="918" x2="865.9" y2="922" stroke="#333" stroke-width="0.9"/>
<line x1="874.6" y1="918" x2="874.6" y2="922" stroke="#333" stroke-width="0.9"/>
<line x1="880.7" y1="918" x2="880.7" y2="922" stroke="#333" stroke-width="0.9"/>
<line x1="885.4" y1="918" x2="885.4" y2="922" stroke="#333" stroke-width="0.9"/>
<line x1="889.3" y1="918" x2="889.3" y2="922" stroke="#333" stroke-width="0.9"/>
<line x1="892.6" y1="918" x2="892.6" y2="922" stroke="#333" stroke-width="0.9"/>
<line x1="895.4" y1="918" x2="895.4" y2="922" stroke="#333" stroke-width="0.9"/>
<line x1="897.9" y1="918" x2="897.9" y2="922" stroke="#333" stroke-width="0.9"/>
<line x1="900.2" y1="918" x2="900.2" y2="924" stroke="#111" stroke-width="1.4"/>
<line x1="914.9" y1="918" x2="914.9" y2="922" stroke="#333" stroke-width="0.9"/>
<line x1="923.5" y1="918" x2="923.5" y2="922" stroke="#333" stroke-width="0.9"/>
<line x1="929.6" y1="918" x2="929.6" y2="922" stroke="#333" stroke-width="0.9"/>
<line x1="934.4" y1="918" x2="934.4" y2="922" stroke="#333" stroke-width="0.9"/>
<line x1="938.2" y1="918" x2="938.2" y2="922" stroke="#333" stroke-width="0.9"/>
<line x1="941.5" y1="918" x2="941.5" y2="922" stroke="#333" stroke-width="0.9"/>
<line x1="944.4" y1="918" x2="944.4" y2="922" stroke="#333" stroke-width="0.9"/>
<line x1="946.9" y1="918" x2="946.9" y2="922" stroke="#333" stroke-width="0.9"/>
<line x1="949.1" y1="918" x2="949.1" y2="924" stroke="#111" stroke-width="1.4"/>
<line x1="963.8" y1="918" x2="963.8" y2="922" stroke="#333" stroke-width="0.9"/>
<line x1="972.5" y1="918" x2="972.5" y2="922" stroke="#333" stroke-width="0.9"/>
<line x1="978.6" y1="918" x2="978.6" y2="922" stroke="#333" stroke-width="0.9"/>
<line x1="983.3" y1="918" x2="983.3" y2="922" stroke="#333" stroke-width="0.9"/>
<line x1="987.2" y1="918" x2="987.2" y2="922" stroke="#333" stroke-width="0.9"/>
<line x1="990.5" y1="918" x2="990.5" y2="922" stroke="#333" stroke-width="0.9"/>
<line x1="993.3" y1="918" x2="993.3" y2="922" stroke="#333" stroke-width="0.9"/>
<line x1="995.8" y1="918" x2="995.8" y2="922" stroke="#333" stroke-width="0.9"/>
<line x1="998.1" y1="918" x2="998.1" y2="924" stroke="#111" stroke-width="1.4"/>
<line x1="1012.8" y1="918" x2="1012.8" y2="922" stroke="#333" stroke-width="0.9"/>
<line x1="1021.4" y1="918" x2="1021.4" y2="922" stroke="#333" stroke-width="0.9"/>
<line x1="1027.5" y1="918" x2="1027.5" y2="922" stroke="#333" stroke-width="0.9"/>
<line x1="1032.3" y1="918" x2="1032.3" y2="922" stroke="#333" stroke-width="0.9"/>
<line x1="1036.1" y1="918" x2="1036.1" y2="922" stroke="#333" stroke-width="0.9"/>
<line x1="1039.4" y1="918" x2="1039.4" y2="922" stroke="#333" stroke-width="0.9"/>
<line x1="1042.3" y1="918" x2="1042.3" y2="922" stroke="#333" stroke-width="0.9"/>
<line x1="1044.8" y1="918" x2="1044.8" y2="922" stroke="#333" stroke-width="0.9"/>
<line x1="1047.0" y1="918" x2="1047.0" y2="924" stroke="#111" stroke-width="1.4"/>
<line x1="1061.7" y1="918" x2="1061.7" y2="922" stroke="#333" stroke-width="0.9"/>
<line x1="1070.4" y1="918" x2="1070.4" y2="922" stroke="#333" stroke-width="0.9"/>
<line x1="1076.5" y1="918" x2="1076.5" y2="922" stroke="#333" stroke-width="0.9"/>
<line x1="1081.2" y1="918" x2="1081.2" y2="922" stroke="#333" stroke-width="0.9"/>
<line x1="1085.1" y1="918" x2="1085.1" y2="922" stroke="#333" stroke-width="0.9"/>
<line x1="1088.4" y1="918" x2="1088.4" y2="922" stroke="#333" stroke-width="0.9"/>
<line x1="1091.2" y1="918" x2="1091.2" y2="922" stroke="#333" stroke-width="0.9"/>
<line x1="1093.7" y1="918" x2="1093.7" y2="922" stroke="#333" stroke-width="0.9"/>
<line x1="1096.0" y1="918" x2="1096.0" y2="924" stroke="#111" stroke-width="1.4"/>
<line x1="1110.7" y1="918" x2="1110.7" y2="922" stroke="#333" stroke-width="0.9"/>
<line x1="1119.3" y1="918" x2="1119.3" y2="922" stroke="#333" stroke-width="0.9"/>
<line x1="1125.4" y1="918" x2="1125.4" y2="922" stroke="#333" stroke-width="0.9"/>
<line x1="1130.2" y1="918" x2="1130.2" y2="922" stroke="#333" stroke-width="0.9"/>
<rect x="1133" y="686" width="2" height="29" fill="#29a0e0"/><rect x="1133" y="717" width="2" height="29" fill="#29a0e0"/>
<g stroke="#a8a8a8" stroke-width="1.2" fill="none">
 <path d="M1148 693 L1148 707 M1141 700 L1155 700 M1145.5 695.5 L1148 693 L1150.5 695.5 M1145.5 704.5 L1148 707 L1150.5 704.5 M1143.5 697.5 L1141 700 L1143.5 702.5 M1152.5 697.5 L1155 700 L1152.5 702.5"/>
 <path d="M1142 716 L1154 716 M1142 747 L1154 747 M1142 778 L1154 778 M1142 809 L1154 809" stroke="#d0d0d0"/>
 <ellipse cx="1144.5" cy="731" rx="2.8" ry="4.5"/>
 <circle cx="1152" cy="729" r="3.5"/><path d="M1150 732 L1148.5 737"/>
 <path d="M1146 759 L1154 766 L1150 766.5 L1148 770 Z"/>
 <path d="M1142 757 L1144 759 M1141 762 L1144 762 M1145 754 L1146 757 M1149 754 L1148.5 757"/>
 <path d="M1154 789 A6 6 0 0 0 1143 791 M1142 797 A6 6 0 0 0 1153 795"/>
 <path d="M1154 786 L1154 790 L1150 790 M1142 800 L1142 796 L1146 796"/>
 <rect x="1142" y="819" width="12" height="9" rx="2"/>
 <path d="M1146 828 L1148 831 L1150 828 M1145 822 L1151 822 M1145 825 L1150 825"/>
</g>
<rect x="1162" y="680" width="1" height="288" fill="#e0e0e0"/>
</svg>
<div class="t" style="left:836px;top:655px;font-size:11px;color:#111">Dose Response of NucCyto_Ratio (Avg)</div>
<div class="t" style="left:889.5px;top:703px;font-size:11px;color:#222">TNF-α, WT: Data with SD</div>
<div class="t" style="left:889.5px;top:720px;font-size:11px;color:#222">TNF-α, WT: Fit</div>
<div class="t" style="left:1027px;top:780.5px;font-size:12px;color:#8ab0e0">EC/IC50</div>
<div class="t" style="left:800px;top:680.2px;width:38.5px;text-align:right;font-size:11px;color:#111">4</div>
<div class="t" style="left:800px;top:743.2px;width:38.5px;text-align:right;font-size:11px;color:#111">3.5</div>
<div class="t" style="left:800px;top:806.2px;width:38.5px;text-align:right;font-size:11px;color:#111">3</div>
<div class="t" style="left:800px;top:869.2px;width:38.5px;text-align:right;font-size:11px;color:#111">2.5</div>
<div class="t" style="left:842.7px;top:932px;font-size:11px;color:#111">10</div>
<div class="t" style="left:854.7px;top:928px;font-size:8px;color:#111">−2</div>
<div class="t" style="left:891.7px;top:932px;font-size:11px;color:#111">10</div>
<div class="t" style="left:903.7px;top:928px;font-size:8px;color:#111">−1</div>
<div class="t" style="left:940.6px;top:932px;font-size:11px;color:#111">10</div>
<div class="t" style="left:952.6px;top:928px;font-size:8px;color:#111">0</div>
<div class="t" style="left:989.6px;top:932px;font-size:11px;color:#111">10</div>
<div class="t" style="left:1001.6px;top:928px;font-size:8px;color:#111">1</div>
<div class="t" style="left:1038.5px;top:932px;font-size:11px;color:#111">10</div>
<div class="t" style="left:1050.5px;top:928px;font-size:8px;color:#111">2</div>
<div class="t" style="left:1087.5px;top:932px;font-size:11px;color:#111">10</div>
<div class="t" style="left:1099.5px;top:928px;font-size:8px;color:#111">3</div>
<div class="t" style="left:928.5px;top:950.5px;font-size:12px;letter-spacing:0.5px;color:#111">Concentration [ng/ml]</div>
<div class="t" style="left:759px;top:805px;width:100px;text-align:center;font-size:12.5px;color:#111;transform:rotate(-90deg);transform-origin:50px 6px">NucCyto_Ratio (Avg)</div>
<!-- BOTTOM2 OBJ TABLE -->
<svg style="left:0;top:0" width="1914" height="968">

 <path d="M1180 659 L1185 655.5 L1185 662.5 Z M1202 659 L1197 655.5 L1197 662.5 Z" fill="#111"/>
 <path d="M1186 659 L1196 659" stroke="#111" stroke-width="1.3" stroke-dasharray="1.3 1.3"/>
 <path d="M1221.5 646.5 L1234 646.5 L1240 652.5 L1240 671 L1221.5 671 Z" fill="none" stroke="#111" stroke-width="1.6"/>
 <path d="M1234 646.5 L1234 652.5 L1240 652.5" fill="none" stroke="#111" stroke-width="1"/>
 <path d="M1235.5 656 L1225.5 656 L1230.5 661 L1225.5 666.5 L1235.5 666.5" fill="none" stroke="#111" stroke-width="1.2"/>
 <path d="M1261 656 L1261 670 L1279 670 L1279 663" fill="none" stroke="#111" stroke-width="2"/>
 <path d="M1264 666 Q1265 656 1275 655 L1275 650.5 L1283 657 L1275 663 L1275 659 Q1268 659 1264 666 Z" fill="#111"/>

<rect x="1171" y="680" width="353" height="21" fill="#d6d6d6"/>
<rect x="1171" y="700" width="353" height="1" fill="#a8a8a8"/>
<rect x="1171" y="701" width="353" height="20" fill="#fcfcfc"/>
<rect x="1171" y="721" width="353" height="20" fill="#efefef"/>
<rect x="1171" y="741" width="353" height="20" fill="#fcfcfc"/>
<rect x="1171" y="761" width="353" height="20" fill="#efefef"/>
<rect x="1171" y="781" width="353" height="20" fill="#fcfcfc"/>
<rect x="1171" y="801" width="353" height="20" fill="#efefef"/>
<rect x="1171" y="821" width="353" height="20" fill="#fcfcfc"/>
<rect x="1171" y="841" width="353" height="20" fill="#efefef"/>
<rect x="1171" y="861" width="353" height="20" fill="#fcfcfc"/>
<rect x="1171" y="881" width="353" height="20" fill="#efefef"/>
<rect x="1171" y="901" width="353" height="20" fill="#fcfcfc"/>
<rect x="1171" y="921" width="353" height="20" fill="#efefef"/>
<rect x="1171" y="941" width="353" height="9" fill="#fcfcfc"/>
<rect x="1221" y="681" width="1" height="269" fill="#a8a8a8"/>
<rect x="1340" y="681" width="1" height="269" fill="#a8a8a8"/>
<rect x="1462" y="681" width="1" height="269" fill="#a8a8a8"/>
<rect x="1524" y="680" width="17" height="270" fill="#efefef"/>
<circle cx="1532.5" cy="688" r="6.2" fill="#9a9a9a"/>
<rect x="1171" y="950" width="370" height="18" fill="#efefef"/>
<rect x="1173.5" y="952" width="330" height="13" rx="6.5" fill="#9a9a9a"/>
<rect x="1541" y="640" width="1" height="328" fill="#b4b4b4"/>
</svg>
<div class="t" style="left:1490px;top:655px;font-size:11px;color:#111">228 rows</div>
<div class="t" style="left:1176px;top:686.5px;color:#111">Obj ID</div>
<div class="t" style="left:1226px;top:686.5px;color:#111">Nuc_FL Int (Avg) [AU]</div>
<div class="t" style="left:1345px;top:686.5px;color:#111">Cyto_FL Int (Avg) [AU]</div>
<div class="a" style="left:1463px;top:680px;width:61px;height:21px;overflow:hidden"><div class="t" style="left:4px;top:6.5px;color:#111">NucCyto_Ratio</div></div>
<div class="a" style="left:1171px;top:701px;width:353px;height:249px;overflow:hidden">
<div class="t" style="left:0px;top:7px;width:46px;text-align:right;color:#111">1</div>
<div class="t" style="left:64px;top:7px;width:100px;text-align:right;color:#111">205.00</div>
<div class="t" style="left:186px;top:7px;width:100px;text-align:right;color:#111">184.38</div>
<div class="t" style="left:0px;top:27px;width:46px;text-align:right;color:#111">2</div>
<div class="t" style="left:64px;top:27px;width:100px;text-align:right;color:#111">355.80</div>
<div class="t" style="left:186px;top:27px;width:100px;text-align:right;color:#111">54.08</div>
<div class="t" style="left:0px;top:47px;width:46px;text-align:right;color:#111">3</div>
<div class="t" style="left:64px;top:47px;width:100px;text-align:right;color:#111">438.49</div>
<div class="t" style="left:186px;top:47px;width:100px;text-align:right;color:#111">286.46</div>
<div class="t" style="left:0px;top:67px;width:46px;text-align:right;color:#111">4</div>
<div class="t" style="left:64px;top:67px;width:100px;text-align:right;color:#111">200.41</div>
<div class="t" style="left:186px;top:67px;width:100px;text-align:right;color:#111">33.95</div>
<div class="t" style="left:0px;top:87px;width:46px;text-align:right;color:#111">5</div>
<div class="t" style="left:64px;top:87px;width:100px;text-align:right;color:#111">126.80</div>
<div class="t" style="left:186px;top:87px;width:100px;text-align:right;color:#111">105.19</div>
<div class="t" style="left:0px;top:107px;width:46px;text-align:right;color:#111">6</div>
<div class="t" style="left:64px;top:107px;width:100px;text-align:right;color:#111">257.60</div>
<div class="t" style="left:186px;top:107px;width:100px;text-align:right;color:#111">106.98</div>
<div class="t" style="left:0px;top:127px;width:46px;text-align:right;color:#111">7</div>
<div class="t" style="left:64px;top:127px;width:100px;text-align:right;color:#111">203.38</div>
<div class="t" style="left:186px;top:127px;width:100px;text-align:right;color:#111">185.47</div>
<div class="t" style="left:0px;top:147px;width:46px;text-align:right;color:#111">8</div>
<div class="t" style="left:64px;top:147px;width:100px;text-align:right;color:#111">322.77</div>
<div class="t" style="left:186px;top:147px;width:100px;text-align:right;color:#111">60.46</div>
<div class="t" style="left:0px;top:167px;width:46px;text-align:right;color:#111">9</div>
<div class="t" style="left:64px;top:167px;width:100px;text-align:right;color:#111">394.17</div>
<div class="t" style="left:186px;top:167px;width:100px;text-align:right;color:#111">30.56</div>
<div class="t" style="left:0px;top:187px;width:46px;text-align:right;color:#111">10</div>
<div class="t" style="left:64px;top:187px;width:100px;text-align:right;color:#111">321.71</div>
<div class="t" style="left:186px;top:187px;width:100px;text-align:right;color:#111">49.83</div>
<div class="t" style="left:0px;top:207px;width:46px;text-align:right;color:#111">11</div>
<div class="t" style="left:64px;top:207px;width:100px;text-align:right;color:#111">552.57</div>
<div class="t" style="left:186px;top:207px;width:100px;text-align:right;color:#111">125.84</div>
<div class="t" style="left:0px;top:227px;width:46px;text-align:right;color:#111">12</div>
<div class="t" style="left:64px;top:227px;width:100px;text-align:right;color:#111">318.39</div>
<div class="t" style="left:186px;top:227px;width:100px;text-align:right;color:#111">53.87</div>
<div class="t" style="left:0px;top:247px;width:46px;text-align:right;color:#111">13</div>
<div class="t" style="left:64px;top:247px;width:100px;text-align:right;color:#111">155.37</div>
<div class="t" style="left:186px;top:247px;width:100px;text-align:right;color:#111">110.03</div>
</div>
<div class="a" style="left:1463px;top:701px;width:61px;height:249px;overflow:hidden">
<div class="t" style="left:0px;top:7px;width:67px;text-align:right;color:#111">1.11</div>
<div class="t" style="left:0px;top:27px;width:67px;text-align:right;color:#111">6.58</div>
<div class="t" style="left:0px;top:47px;width:67px;text-align:right;color:#111">1.53</div>
<div class="t" style="left:0px;top:67px;width:67px;text-align:right;color:#111">5.90</div>
<div class="t" style="left:0px;top:87px;width:67px;text-align:right;color:#111">1.21</div>
<div class="t" style="left:0px;top:107px;width:67px;text-align:right;color:#111">2.41</div>
<div class="t" style="left:0px;top:127px;width:67px;text-align:right;color:#111">1.10</div>
<div class="t" style="left:0px;top:147px;width:67px;text-align:right;color:#111">5.34</div>
<div class="t" style="left:0px;top:167px;width:67px;text-align:right;color:#111">12.90</div>
<div class="t" style="left:0px;top:187px;width:67px;text-align:right;color:#111">6.46</div>
<div class="t" style="left:0px;top:207px;width:67px;text-align:right;color:#111">4.39</div>
<div class="t" style="left:0px;top:227px;width:67px;text-align:right;color:#111">5.91</div>
<div class="t" style="left:0px;top:247px;width:67px;text-align:right;color:#111">1.41</div>
</div>
<!-- SCATTER -->
<svg style="left:0;top:0" width="1914" height="968">

 <path d="M1549 671 L1573 671" stroke="#2d6fd6" stroke-width="1.6"/>
 <g fill="#2d6fd6"><circle cx="1551.5" cy="667.5" r="1.6"/><circle cx="1556" cy="665" r="1.6"/><circle cx="1560" cy="663" r="1.6"/><circle cx="1564.5" cy="664.5" r="1.6"/><circle cx="1568.5" cy="659.5" r="1.6"/></g>
 <path d="M1586 671 L1610 671" stroke="#111" stroke-width="1.6"/>
 <g fill="#111"><rect x="1587" y="666" width="2.5" height="4"/><rect x="1591.5" y="660" width="2.5" height="10"/><rect x="1596" y="653" width="2.5" height="17"/><rect x="1600.5" y="661" width="2.5" height="9"/><rect x="1605" y="665" width="2.5" height="5"/></g>
 <path d="M1623 648 L1623 671 L1647 671" fill="none" stroke="#111" stroke-width="1.3"/>
 <rect x="1627.5" y="660" width="5" height="9" fill="#999" stroke="#111" stroke-width="1.2"/>
 <rect x="1636.5" y="650" width="5" height="19" fill="none" stroke="#111" stroke-width="1.2"/>
 <line x1="1662.5" y1="650" x2="1662.5" y2="669" stroke="#aaa"/>
 <path d="M1680 648 L1680 670 L1704 670" fill="none" stroke="#333" stroke-width="1.3"/>
 <path d="M1749 645 L1749 670 L1773 670" fill="none" stroke="#333" stroke-width="1.3"/>
 <path d="M1818 670 L1842 670 M1818 670 L1834 658" fill="none" stroke="#333" stroke-width="1.3"/>
 <path d="M1718 657.5 L1725 657.5 L1721.5 661.5 Z M1787 657.5 L1794 657.5 L1790.5 661.5 Z M1856 657.5 L1863 657.5 L1859.5 661.5 Z" fill="#111"/>
 <path d="M1883 646 L1883 671 M1907 646 L1907 671" stroke="#2d6fd6" stroke-width="1.5"/>
 <path d="M1886 671 Q1889 648 1895 648 Q1901 648 1904 671" fill="none" stroke="#2d6fd6" stroke-width="1.5"/>

<rect x="1598.5" y="686" width="214.5" height="235" fill="#fdfdfd"/>
<line x1="1598.5" y1="686" x2="1598.5" y2="921" stroke="#e2e2e2" stroke-width="1"/>
<line x1="1603.9" y1="686" x2="1603.9" y2="921" stroke="#f0f0f0" stroke-width="1"/>
<line x1="1609.2" y1="686" x2="1609.2" y2="921" stroke="#f0f0f0" stroke-width="1"/>
<line x1="1614.6" y1="686" x2="1614.6" y2="921" stroke="#f0f0f0" stroke-width="1"/>
<line x1="1620.0" y1="686" x2="1620.0" y2="921" stroke="#f0f0f0" stroke-width="1"/>
<line x1="1625.3" y1="686" x2="1625.3" y2="921" stroke="#e2e2e2" stroke-width="1"/>
<line x1="1630.7" y1="686" x2="1630.7" y2="921" stroke="#f0f0f0" stroke-width="1"/>
<line x1="1636.1" y1="686" x2="1636.1" y2="921" stroke="#f0f0f0" stroke-width="1"/>
<line x1="1641.4" y1="686" x2="1641.4" y2="921" stroke="#f0f0f0" stroke-width="1"/>
<line x1="1646.8" y1="686" x2="1646.8" y2="921" stroke="#f0f0f0" stroke-width="1"/>
<line x1="1652.2" y1="686" x2="1652.2" y2="921" stroke="#e2e2e2" stroke-width="1"/>
<line x1="1657.5" y1="686" x2="1657.5" y2="921" stroke="#f0f0f0" stroke-width="1"/>
<line x1="1662.9" y1="686" x2="1662.9" y2="921" stroke="#f0f0f0" stroke-width="1"/>
<line x1="1668.3" y1="686" x2="1668.3" y2="921" stroke="#f0f0f0" stroke-width="1"/>
<line x1="1673.6" y1="686" x2="1673.6" y2="921" stroke="#f0f0f0" stroke-width="1"/>
<line x1="1679.0" y1="686" x2="1679.0" y2="921" stroke="#e2e2e2" stroke-width="1"/>
<line x1="1684.4" y1="686" x2="1684.4" y2="921" stroke="#f0f0f0" stroke-width="1"/>
<line x1="1689.7" y1="686" x2="1689.7" y2="921" stroke="#f0f0f0" stroke-width="1"/>
<line x1="1695.1" y1="686" x2="1695.1" y2="921" stroke="#f0f0f0" stroke-width="1"/>
<line x1="1700.5" y1="686" x2="1700.5" y2="921" stroke="#f0f0f0" stroke-width="1"/>
<line x1="1705.8" y1="686" x2="1705.8" y2="921" stroke="#e2e2e2" stroke-width="1"/>
<line x1="1711.2" y1="686" x2="1711.2" y2="921" stroke="#f0f0f0" stroke-width="1"/>
<line x1="1716.6" y1="686" x2="1716.6" y2="921" stroke="#f0f0f0" stroke-width="1"/>
<line x1="1721.9" y1="686" x2="1721.9" y2="921" stroke="#f0f0f0" stroke-width="1"/>
<line x1="1727.3" y1="686" x2="1727.3" y2="921" stroke="#f0f0f0" stroke-width="1"/>
<line x1="1732.7" y1="686" x2="1732.7" y2="921" stroke="#e2e2e2" stroke-width="1"/>
<line x1="1738.0" y1="686" x2="1738.0" y2="921" stroke="#f0f0f0" stroke-width="1"/>
<line x1="1743.4" y1="686" x2="1743.4" y2="921" stroke="#f0f0f0" stroke-width="1"/>
<line x1="1748.8" y1="686" x2="1748.8" y2="921" stroke="#f0f0f0" stroke-width="1"/>
<line x1="1754.1" y1="686" x2="1754.1" y2="921" stroke="#f0f0f0" stroke-width="1"/>
<line x1="1759.5" y1="686" x2="1759.5" y2="921" stroke="#e2e2e2" stroke-width="1"/>
<line x1="1764.9" y1="686" x2="1764.9" y2="921" stroke="#f0f0f0" stroke-width="1"/>
<line x1="1770.2" y1="686" x2="1770.2" y2="921" stroke="#f0f0f0" stroke-width="1"/>
<line x1="1775.6" y1="686" x2="1775.6" y2="921" stroke="#f0f0f0" stroke-width="1"/>
<line x1="1781.0" y1="686" x2="1781.0" y2="921" stroke="#f0f0f0" stroke-width="1"/>
<line x1="1786.3" y1="686" x2="1786.3" y2="921" stroke="#e2e2e2" stroke-width="1"/>
<line x1="1791.7" y1="686" x2="1791.7" y2="921" stroke="#f0f0f0" stroke-width="1"/>
<line x1="1797.1" y1="686" x2="1797.1" y2="921" stroke="#f0f0f0" stroke-width="1"/>
<line x1="1802.4" y1="686" x2="1802.4" y2="921" stroke="#f0f0f0" stroke-width="1"/>
<line x1="1807.8" y1="686" x2="1807.8" y2="921" stroke="#f0f0f0" stroke-width="1"/>
<line x1="1598.5" y1="920.8" x2="1813" y2="920.8" stroke="#e2e2e2" stroke-width="1"/>
<line x1="1598.5" y1="913.6" x2="1813" y2="913.6" stroke="#f0f0f0" stroke-width="1"/>
<line x1="1598.5" y1="906.5" x2="1813" y2="906.5" stroke="#f0f0f0" stroke-width="1"/>
<line x1="1598.5" y1="899.3" x2="1813" y2="899.3" stroke="#f0f0f0" stroke-width="1"/>
<line x1="1598.5" y1="892.1" x2="1813" y2="892.1" stroke="#f0f0f0" stroke-width="1"/>
<line x1="1598.5" y1="884.9" x2="1813" y2="884.9" stroke="#e2e2e2" stroke-width="1"/>
<line x1="1598.5" y1="877.8" x2="1813" y2="877.8" stroke="#f0f0f0" stroke-width="1"/>
<line x1="1598.5" y1="870.6" x2="1813" y2="870.6" stroke="#f0f0f0" stroke-width="1"/>
<line x1="1598.5" y1="863.4" x2="1813" y2="863.4" stroke="#f0f0f0" stroke-width="1"/>
<line x1="1598.5" y1="856.2" x2="1813" y2="856.2" stroke="#f0f0f0" stroke-width="1"/>
<line x1="1598.5" y1="849.1" x2="1813" y2="849.1" stroke="#e2e2e2" stroke-width="1"/>
<line x1="1598.5" y1="841.9" x2="1813" y2="841.9" stroke="#f0f0f0" stroke-width="1"/>
<line x1="1598.5" y1="834.7" x2="1813" y2="834.7" stroke="#f0f0f0" stroke-width="1"/>
<line x1="1598.5" y1="827.5" x2="1813" y2="827.5" stroke="#f0f0f0" stroke-width="1"/>
<line x1="1598.5" y1="820.4" x2="1813" y2="820.4" stroke="#f0f0f0" stroke-width="1"/>
<line x1="1598.5" y1="813.2" x2="1813" y2="813.2" stroke="#e2e2e2" stroke-width="1"/>
<line x1="1598.5" y1="806.0" x2="1813" y2="806.0" stroke="#f0f0f0" stroke-width="1"/>
<line x1="1598.5" y1="798.9" x2="1813" y2="798.9" stroke="#f0f0f0" stroke-width="1"/>
<line x1="1598.5" y1="791.7" x2="1813" y2="791.7" stroke="#f0f0f0" stroke-width="1"/>
<line x1="1598.5" y1="784.5" x2="1813" y2="784.5" stroke="#f0f0f0" stroke-width="1"/>
<line x1="1598.5" y1="777.3" x2="1813" y2="777.3" stroke="#e2e2e2" stroke-width="1"/>
<line x1="1598.5" y1="770.2" x2="1813" y2="770.2" stroke="#f0f0f0" stroke-width="1"/>
<line x1="1598.5" y1="763.0" x2="1813" y2="763.0" stroke="#f0f0f0" stroke-width="1"/>
<line x1="1598.5" y1="755.8" x2="1813" y2="755.8" stroke="#f0f0f0" stroke-width="1"/>
<line x1="1598.5" y1="748.6" x2="1813" y2="748.6" stroke="#f0f0f0" stroke-width="1"/>
<line x1="1598.5" y1="741.5" x2="1813" y2="741.5" stroke="#e2e2e2" stroke-width="1"/>
<line x1="1598.5" y1="734.3" x2="1813" y2="734.3" stroke="#f0f0f0" stroke-width="1"/>
<line x1="1598.5" y1="727.1" x2="1813" y2="727.1" stroke="#f0f0f0" stroke-width="1"/>
<line x1="1598.5" y1="719.9" x2="1813" y2="719.9" stroke="#f0f0f0" stroke-width="1"/>
<line x1="1598.5" y1="712.8" x2="1813" y2="712.8" stroke="#f0f0f0" stroke-width="1"/>
<line x1="1598.5" y1="705.6" x2="1813" y2="705.6" stroke="#e2e2e2" stroke-width="1"/>
<line x1="1598.5" y1="698.4" x2="1813" y2="698.4" stroke="#f0f0f0" stroke-width="1"/>
<line x1="1598.5" y1="691.3" x2="1813" y2="691.3" stroke="#f0f0f0" stroke-width="1"/>
<line x1="1598.5" y1="686" x2="1813" y2="686" stroke="#e8e8e8"/>
<g>
<circle cx="1664.6" cy="918.0" r="4.6" fill="#fda203" fill-opacity="0.75"/>
<circle cx="1645.6" cy="918.0" r="4.6" fill="#d87327" fill-opacity="0.75"/>
<circle cx="1696.3" cy="914.2" r="4.6" fill="#ce6531" fill-opacity="0.75"/>
<circle cx="1706.4" cy="911.6" r="4.6" fill="#be5141" fill-opacity="0.75"/>
<circle cx="1701.8" cy="911.6" r="4.6" fill="#bb4d44" fill-opacity="0.75"/>
<circle cx="1785.6" cy="902.8" r="4.6" fill="#b74749" fill-opacity="0.75"/>
<circle cx="1750.7" cy="905.8" r="4.6" fill="#b5454a" fill-opacity="0.75"/>
<circle cx="1774.0" cy="902.8" r="4.6" fill="#b3424c" fill-opacity="0.75"/>
<circle cx="1660.8" cy="914.2" r="4.6" fill="#b1404e" fill-opacity="0.75"/>
<circle cx="1689.9" cy="910.9" r="4.6" fill="#b03f4f" fill-opacity="0.75"/>
<circle cx="1705.1" cy="909.1" r="4.6" fill="#b03e50" fill-opacity="0.75"/>
<circle cx="1673.5" cy="911.6" r="4.6" fill="#ab3855" fill-opacity="0.75"/>
<circle cx="1678.4" cy="909.5" r="4.6" fill="#a5305b" fill-opacity="0.75"/>
<circle cx="1678.5" cy="909.1" r="4.6" fill="#a42e5c" fill-opacity="0.75"/>
<circle cx="1680.1" cy="908.8" r="4.6" fill="#a32e5d" fill-opacity="0.75"/>
<circle cx="1672.4" cy="909.8" r="4.6" fill="#a32d5d" fill-opacity="0.75"/>
<circle cx="1715.3" cy="903.3" r="4.6" fill="#a32d5d" fill-opacity="0.75"/>
<circle cx="1791.7" cy="889.4" r="4.6" fill="#a02960" fill-opacity="0.75"/>
<circle cx="1690.4" cy="905.2" r="4.6" fill="#9e2761" fill-opacity="0.75"/>
<circle cx="1671.7" cy="908.2" r="4.6" fill="#9e2762" fill-opacity="0.75"/>
<circle cx="1803.1" cy="885.1" r="4.6" fill="#9e2662" fill-opacity="0.75"/>
<circle cx="1683.3" cy="905.7" r="4.6" fill="#9d2663" fill-opacity="0.75"/>
<circle cx="1702.5" cy="902.2" r="4.6" fill="#9d2563" fill-opacity="0.75"/>
<circle cx="1668.4" cy="907.8" r="4.6" fill="#9c2464" fill-opacity="0.75"/>
<circle cx="1677.0" cy="906.1" r="4.6" fill="#9c2464" fill-opacity="0.75"/>
<circle cx="1653.7" cy="910.2" r="4.6" fill="#9b2365" fill-opacity="0.75"/>
<circle cx="1645.6" cy="911.6" r="4.6" fill="#9a2265" fill-opacity="0.75"/>
<circle cx="1693.7" cy="902.3" r="4.6" fill="#9a2265" fill-opacity="0.75"/>
<circle cx="1685.1" cy="903.0" r="4.6" fill="#992067" fill-opacity="0.75"/>
<circle cx="1674.0" cy="905.1" r="4.6" fill="#992067" fill-opacity="0.75"/>
<circle cx="1686.9" cy="902.3" r="4.6" fill="#982067" fill-opacity="0.75"/>
<circle cx="1712.7" cy="896.8" r="4.6" fill="#982067" fill-opacity="0.75"/>
<circle cx="1707.7" cy="897.7" r="4.6" fill="#981f68" fill-opacity="0.75"/>
<circle cx="1653.2" cy="909.1" r="4.6" fill="#981f68" fill-opacity="0.75"/>
<circle cx="1676.4" cy="904.2" r="4.6" fill="#981f68" fill-opacity="0.75"/>
<circle cx="1698.6" cy="899.2" r="4.6" fill="#981f68" fill-opacity="0.75"/>
<circle cx="1680.8" cy="902.9" r="4.6" fill="#971e68" fill-opacity="0.75"/>
<circle cx="1673.3" cy="903.5" r="4.6" fill="#961d6a" fill-opacity="0.75"/>
<circle cx="1673.2" cy="903.3" r="4.6" fill="#961c6a" fill-opacity="0.75"/>
<circle cx="1674.4" cy="902.8" r="4.6" fill="#951c6a" fill-opacity="0.75"/>
<circle cx="1680.7" cy="901.0" r="4.6" fill="#951b6b" fill-opacity="0.75"/>
<circle cx="1679.9" cy="901.1" r="4.6" fill="#951b6b" fill-opacity="0.75"/>
<circle cx="1688.8" cy="898.7" r="4.6" fill="#951b6b" fill-opacity="0.75"/>
<circle cx="1678.0" cy="901.3" r="4.6" fill="#951b6b" fill-opacity="0.75"/>
<circle cx="1703.5" cy="894.9" r="4.6" fill="#951b6b" fill-opacity="0.75"/>
<circle cx="1753.2" cy="881.8" r="4.6" fill="#941a6c" fill-opacity="0.75"/>
<circle cx="1727.9" cy="888.1" r="4.6" fill="#941a6c" fill-opacity="0.75"/>
<circle cx="1671.0" cy="902.5" r="4.6" fill="#941a6c" fill-opacity="0.75"/>
<circle cx="1684.8" cy="898.9" r="4.6" fill="#941a6c" fill-opacity="0.75"/>
<circle cx="1673.9" cy="901.5" r="4.6" fill="#941a6c" fill-opacity="0.75"/>
<circle cx="1683.6" cy="899.0" r="4.6" fill="#941a6c" fill-opacity="0.75"/>
<circle cx="1679.2" cy="899.7" r="4.6" fill="#93196d" fill-opacity="0.75"/>
<circle cx="1667.3" cy="902.6" r="4.6" fill="#93196d" fill-opacity="0.75"/>
<circle cx="1741.8" cy="881.8" r="4.6" fill="#93186d" fill-opacity="0.75"/>
<circle cx="1661.3" cy="903.6" r="4.6" fill="#92186d" fill-opacity="0.75"/>
<circle cx="1673.5" cy="900.3" r="4.6" fill="#92186d" fill-opacity="0.75"/>
<circle cx="1689.3" cy="895.8" r="4.6" fill="#92186e" fill-opacity="0.75"/>
<circle cx="1693.4" cy="894.6" r="4.6" fill="#92186e" fill-opacity="0.75"/>
<circle cx="1680.9" cy="897.9" r="4.6" fill="#92186e" fill-opacity="0.75"/>
<circle cx="1707.7" cy="889.6" r="4.6" fill="#92176e" fill-opacity="0.75"/>
<circle cx="1691.7" cy="894.2" r="4.6" fill="#92176e" fill-opacity="0.75"/>
<circle cx="1694.6" cy="893.1" r="4.6" fill="#91176e" fill-opacity="0.75"/>
<circle cx="1674.5" cy="898.9" r="4.6" fill="#91176e" fill-opacity="0.75"/>
<circle cx="1669.8" cy="900.2" r="4.6" fill="#91176e" fill-opacity="0.75"/>
<circle cx="1683.6" cy="896.2" r="4.6" fill="#91176e" fill-opacity="0.75"/>
<circle cx="1669.5" cy="900.2" r="4.6" fill="#91176f" fill-opacity="0.75"/>
<circle cx="1679.6" cy="897.2" r="4.6" fill="#91166f" fill-opacity="0.75"/>
<circle cx="1673.1" cy="898.9" r="4.6" fill="#91166f" fill-opacity="0.75"/>
<circle cx="1685.0" cy="894.8" r="4.6" fill="#91166f" fill-opacity="0.75"/>
<circle cx="1746.9" cy="875.7" r="4.6" fill="#90156f" fill-opacity="0.75"/>
<circle cx="1672.2" cy="898.4" r="4.6" fill="#90156f" fill-opacity="0.75"/>
<circle cx="1714.0" cy="885.6" r="4.6" fill="#90156f" fill-opacity="0.75"/>
<circle cx="1665.7" cy="899.0" r="4.6" fill="#8f1471" fill-opacity="0.75"/>
<circle cx="1683.5" cy="893.1" r="4.6" fill="#8f1471" fill-opacity="0.75"/>
<circle cx="1678.4" cy="894.5" r="4.6" fill="#8f1471" fill-opacity="0.75"/>
<circle cx="1666.7" cy="898.2" r="4.6" fill="#8f1371" fill-opacity="0.75"/>
<circle cx="1683.0" cy="892.3" r="4.6" fill="#8f1371" fill-opacity="0.75"/>
<circle cx="1690.5" cy="889.1" r="4.6" fill="#8e1372" fill-opacity="0.75"/>
<circle cx="1663.4" cy="898.2" r="4.6" fill="#8e1272" fill-opacity="0.75"/>
<circle cx="1661.1" cy="898.9" r="4.6" fill="#8e1272" fill-opacity="0.75"/>
<circle cx="1689.9" cy="888.9" r="4.6" fill="#8e1272" fill-opacity="0.75"/>
<circle cx="1666.6" cy="896.7" r="4.6" fill="#8e1272" fill-opacity="0.75"/>
<circle cx="1708.4" cy="881.8" r="4.6" fill="#8e1272" fill-opacity="0.75"/>
<circle cx="1648.3" cy="902.9" r="4.6" fill="#8e1272" fill-opacity="0.75"/>
<circle cx="1696.3" cy="885.6" r="4.6" fill="#8e1272" fill-opacity="0.75"/>
<circle cx="1655.5" cy="900.3" r="4.6" fill="#8e1272" fill-opacity="0.75"/>
<circle cx="1669.7" cy="895.0" r="4.6" fill="#8e1272" fill-opacity="0.75"/>
<circle cx="1622.3" cy="912.2" r="4.6" fill="#8e1272" fill-opacity="0.75"/>
<circle cx="1683.7" cy="889.8" r="4.6" fill="#8e1272" fill-opacity="0.75"/>
<circle cx="1718.5" cy="875.4" r="4.6" fill="#8d1173" fill-opacity="0.75"/>
<circle cx="1678.1" cy="890.6" r="4.6" fill="#8d1173" fill-opacity="0.75"/>
<circle cx="1673.3" cy="892.4" r="4.6" fill="#8d1173" fill-opacity="0.75"/>
<circle cx="1664.9" cy="895.3" r="4.6" fill="#8d1173" fill-opacity="0.75"/>
<circle cx="1682.0" cy="888.0" r="4.6" fill="#8c1073" fill-opacity="0.75"/>
<circle cx="1672.7" cy="890.9" r="4.6" fill="#8c1074" fill-opacity="0.75"/>
<circle cx="1681.6" cy="886.5" r="4.6" fill="#8c0f74" fill-opacity="0.75"/>
<circle cx="1672.6" cy="890.1" r="4.6" fill="#8c0f74" fill-opacity="0.75"/>
<circle cx="1643.1" cy="902.3" r="4.6" fill="#8c0f74" fill-opacity="0.75"/>
<circle cx="1670.9" cy="890.6" r="4.6" fill="#8c0f74" fill-opacity="0.75"/>
<circle cx="1653.2" cy="897.7" r="4.6" fill="#8c0f74" fill-opacity="0.75"/>
<circle cx="1702.6" cy="876.2" r="4.6" fill="#8b0f75" fill-opacity="0.75"/>
<circle cx="1662.3" cy="893.4" r="4.6" fill="#8b0f75" fill-opacity="0.75"/>
<circle cx="1672.3" cy="889.1" r="4.6" fill="#8b0f75" fill-opacity="0.75"/>
<circle cx="1663.2" cy="892.9" r="4.6" fill="#8b0f75" fill-opacity="0.75"/>
<circle cx="1654.1" cy="896.7" r="4.6" fill="#8b0f75" fill-opacity="0.75"/>
<circle cx="1652.3" cy="897.2" r="4.6" fill="#8b0e75" fill-opacity="0.75"/>
<circle cx="1658.1" cy="894.0" r="4.6" fill="#8b0e75" fill-opacity="0.75"/>
<circle cx="1653.0" cy="895.8" r="4.6" fill="#8b0e75" fill-opacity="0.75"/>
<circle cx="1681.1" cy="882.5" r="4.6" fill="#8a0d76" fill-opacity="0.75"/>
<circle cx="1667.0" cy="888.3" r="4.6" fill="#8a0d76" fill-opacity="0.75"/>
<circle cx="1719.6" cy="862.3" r="4.6" fill="#8a0d76" fill-opacity="0.75"/>
<circle cx="1668.8" cy="886.5" r="4.6" fill="#8a0d76" fill-opacity="0.75"/>
<circle cx="1691.2" cy="874.9" r="4.6" fill="#8a0d76" fill-opacity="0.75"/>
<circle cx="1659.6" cy="890.1" r="4.6" fill="#890c76" fill-opacity="0.75"/>
<circle cx="1664.9" cy="887.2" r="4.6" fill="#890c77" fill-opacity="0.75"/>
<circle cx="1690.2" cy="872.9" r="4.6" fill="#890c77" fill-opacity="0.75"/>
<circle cx="1661.0" cy="888.0" r="4.6" fill="#890c77" fill-opacity="0.75"/>
<circle cx="1703.4" cy="865.3" r="4.6" fill="#890c77" fill-opacity="0.75"/>
<circle cx="1723.6" cy="854.2" r="4.6" fill="#890c77" fill-opacity="0.75"/>
<circle cx="1683.7" cy="875.1" r="4.6" fill="#890b77" fill-opacity="0.75"/>
<circle cx="1682.1" cy="875.1" r="4.6" fill="#890b77" fill-opacity="0.75"/>
<circle cx="1668.4" cy="881.3" r="4.6" fill="#880b78" fill-opacity="0.75"/>
<circle cx="1709.4" cy="857.2" r="4.6" fill="#880b78" fill-opacity="0.75"/>
<circle cx="1668.1" cy="880.4" r="4.6" fill="#880a78" fill-opacity="0.75"/>
<circle cx="1674.7" cy="876.5" r="4.6" fill="#880a78" fill-opacity="0.75"/>
<circle cx="1677.3" cy="874.9" r="4.6" fill="#880a78" fill-opacity="0.75"/>
<circle cx="1650.7" cy="890.1" r="4.6" fill="#880a78" fill-opacity="0.75"/>
<circle cx="1742.6" cy="835.7" r="4.6" fill="#880a78" fill-opacity="0.75"/>
<circle cx="1647.9" cy="891.4" r="4.6" fill="#880a78" fill-opacity="0.75"/>
<circle cx="1655.6" cy="886.7" r="4.6" fill="#880a78" fill-opacity="0.75"/>
<circle cx="1669.0" cy="878.0" r="4.6" fill="#880a78" fill-opacity="0.75"/>
<circle cx="1648.3" cy="889.9" r="4.6" fill="#870a78" fill-opacity="0.75"/>
<circle cx="1710.2" cy="850.9" r="4.6" fill="#870a79" fill-opacity="0.75"/>
<circle cx="1672.5" cy="874.4" r="4.6" fill="#870a79" fill-opacity="0.75"/>
<circle cx="1691.2" cy="862.3" r="4.6" fill="#870979" fill-opacity="0.75"/>
<circle cx="1695.7" cy="858.6" r="4.6" fill="#870979" fill-opacity="0.75"/>
<circle cx="1671.0" cy="872.8" r="4.6" fill="#870979" fill-opacity="0.75"/>
<circle cx="1652.9" cy="884.7" r="4.6" fill="#870979" fill-opacity="0.75"/>
<circle cx="1719.6" cy="840.0" r="4.6" fill="#870979" fill-opacity="0.75"/>
<circle cx="1655.8" cy="882.5" r="4.6" fill="#870979" fill-opacity="0.75"/>
<circle cx="1677.0" cy="867.9" r="4.6" fill="#870979" fill-opacity="0.75"/>
<circle cx="1695.1" cy="855.0" r="4.6" fill="#870979" fill-opacity="0.75"/>
<circle cx="1633.0" cy="897.2" r="4.6" fill="#870979" fill-opacity="0.75"/>
<circle cx="1705.9" cy="847.1" r="4.6" fill="#870979" fill-opacity="0.75"/>
<circle cx="1681.7" cy="863.6" r="4.6" fill="#870979" fill-opacity="0.75"/>
<circle cx="1661.1" cy="877.4" r="4.6" fill="#870979" fill-opacity="0.75"/>
<circle cx="1673.5" cy="868.3" r="4.6" fill="#860879" fill-opacity="0.75"/>
<circle cx="1686.7" cy="858.4" r="4.6" fill="#86087a" fill-opacity="0.75"/>
<circle cx="1640.6" cy="890.9" r="4.6" fill="#86087a" fill-opacity="0.75"/>
<circle cx="1686.1" cy="858.5" r="4.6" fill="#86087a" fill-opacity="0.75"/>
<circle cx="1681.5" cy="861.5" r="4.6" fill="#86087a" fill-opacity="0.75"/>
<circle cx="1732.2" cy="825.1" r="4.6" fill="#86087a" fill-opacity="0.75"/>
<circle cx="1704.4" cy="843.3" r="4.6" fill="#86087a" fill-opacity="0.75"/>
<circle cx="1660.8" cy="874.9" r="4.6" fill="#86087a" fill-opacity="0.75"/>
<circle cx="1682.0" cy="859.2" r="4.6" fill="#86087a" fill-opacity="0.75"/>
<circle cx="1708.9" cy="835.7" r="4.6" fill="#86077a" fill-opacity="0.75"/>
<circle cx="1660.3" cy="872.9" r="4.6" fill="#86077a" fill-opacity="0.75"/>
<circle cx="1682.3" cy="854.7" r="4.6" fill="#86077a" fill-opacity="0.75"/>
<circle cx="1648.0" cy="881.8" r="4.6" fill="#86077a" fill-opacity="0.75"/>
<circle cx="1697.1" cy="842.7" r="4.6" fill="#86077a" fill-opacity="0.75"/>
<circle cx="1681.6" cy="853.5" r="4.6" fill="#85077b" fill-opacity="0.75"/>
<circle cx="1782.3" cy="771.9" r="4.6" fill="#85077b" fill-opacity="0.75"/>
<circle cx="1675.3" cy="858.3" r="4.6" fill="#85077b" fill-opacity="0.75"/>
<circle cx="1649.4" cy="878.7" r="4.6" fill="#85077b" fill-opacity="0.75"/>
<circle cx="1664.6" cy="866.1" r="4.6" fill="#85077b" fill-opacity="0.75"/>
<circle cx="1689.5" cy="845.3" r="4.6" fill="#85077b" fill-opacity="0.75"/>
<circle cx="1688.7" cy="844.6" r="4.6" fill="#85077b" fill-opacity="0.75"/>
<circle cx="1666.9" cy="861.6" r="4.6" fill="#85067b" fill-opacity="0.75"/>
<circle cx="1716.5" cy="818.5" r="4.6" fill="#85067b" fill-opacity="0.75"/>
<circle cx="1669.1" cy="858.9" r="4.6" fill="#85067b" fill-opacity="0.75"/>
<circle cx="1683.9" cy="845.8" r="4.6" fill="#85067b" fill-opacity="0.75"/>
<circle cx="1627.9" cy="894.7" r="4.6" fill="#85067b" fill-opacity="0.75"/>
<circle cx="1658.2" cy="866.9" r="4.6" fill="#85067b" fill-opacity="0.75"/>
<circle cx="1633.0" cy="889.1" r="4.6" fill="#85067b" fill-opacity="0.75"/>
<circle cx="1677.0" cy="848.4" r="4.6" fill="#85067b" fill-opacity="0.75"/>
<circle cx="1676.0" cy="848.4" r="4.6" fill="#85067b" fill-opacity="0.75"/>
<circle cx="1610.2" cy="909.9" r="4.6" fill="#85067b" fill-opacity="0.75"/>
<circle cx="1654.0" cy="868.6" r="4.6" fill="#85067b" fill-opacity="0.75"/>
<circle cx="1667.2" cy="855.9" r="4.6" fill="#84067b" fill-opacity="0.75"/>
<circle cx="1695.0" cy="826.8" r="4.6" fill="#84067c" fill-opacity="0.75"/>
<circle cx="1698.8" cy="823.0" r="4.6" fill="#84067c" fill-opacity="0.75"/>
<circle cx="1693.9" cy="827.8" r="4.6" fill="#84067c" fill-opacity="0.75"/>
<circle cx="1794.2" cy="729.9" r="4.6" fill="#84067c" fill-opacity="0.75"/>
<circle cx="1674.5" cy="846.4" r="4.6" fill="#84067c" fill-opacity="0.75"/>
<circle cx="1710.7" cy="809.6" r="4.6" fill="#84057c" fill-opacity="0.75"/>
<circle cx="1648.6" cy="870.5" r="4.6" fill="#84057c" fill-opacity="0.75"/>
<circle cx="1668.0" cy="851.1" r="4.6" fill="#84057c" fill-opacity="0.75"/>
<circle cx="1640.8" cy="877.1" r="4.6" fill="#84057c" fill-opacity="0.75"/>
<circle cx="1667.1" cy="849.5" r="4.6" fill="#84057c" fill-opacity="0.75"/>
<circle cx="1679.8" cy="835.7" r="4.6" fill="#84057c" fill-opacity="0.75"/>
<circle cx="1706.9" cy="805.8" r="4.6" fill="#84057c" fill-opacity="0.75"/>
<circle cx="1650.1" cy="866.0" r="4.6" fill="#84057c" fill-opacity="0.75"/>
<circle cx="1639.3" cy="877.5" r="4.6" fill="#84057c" fill-opacity="0.75"/>
<circle cx="1681.1" cy="831.9" r="4.6" fill="#84057c" fill-opacity="0.75"/>
<circle cx="1687.9" cy="823.8" r="4.6" fill="#84057c" fill-opacity="0.75"/>
<circle cx="1684.1" cy="827.3" r="4.6" fill="#84057c" fill-opacity="0.75"/>
<circle cx="1692.0" cy="818.7" r="4.6" fill="#84057c" fill-opacity="0.75"/>
<circle cx="1667.2" cy="845.8" r="4.6" fill="#84057c" fill-opacity="0.75"/>
<circle cx="1667.2" cy="843.2" r="4.6" fill="#84057c" fill-opacity="0.75"/>
<circle cx="1673.5" cy="834.9" r="4.6" fill="#83057c" fill-opacity="0.75"/>
<circle cx="1666.1" cy="842.5" r="4.6" fill="#83047d" fill-opacity="0.75"/>
<circle cx="1640.2" cy="872.5" r="4.6" fill="#83047d" fill-opacity="0.75"/>
<circle cx="1653.2" cy="857.2" r="4.6" fill="#83047d" fill-opacity="0.75"/>
<circle cx="1638.0" cy="874.5" r="4.6" fill="#83047d" fill-opacity="0.75"/>
<circle cx="1703.1" cy="797.7" r="4.6" fill="#83047d" fill-opacity="0.75"/>
<circle cx="1659.6" cy="848.4" r="4.6" fill="#83047d" fill-opacity="0.75"/>
<circle cx="1643.1" cy="867.8" r="4.6" fill="#83047d" fill-opacity="0.75"/>
<circle cx="1624.1" cy="890.4" r="4.6" fill="#83047d" fill-opacity="0.75"/>
<circle cx="1656.7" cy="851.1" r="4.6" fill="#83047d" fill-opacity="0.75"/>
<circle cx="1667.9" cy="837.5" r="4.6" fill="#83047d" fill-opacity="0.75"/>
<circle cx="1636.0" cy="875.6" r="4.6" fill="#83047d" fill-opacity="0.75"/>
<circle cx="1783.6" cy="696.5" r="4.6" fill="#83047d" fill-opacity="0.75"/>
<circle cx="1650.4" cy="855.1" r="4.6" fill="#83047d" fill-opacity="0.75"/>
<circle cx="1667.2" cy="833.7" r="4.6" fill="#83047d" fill-opacity="0.75"/>
<circle cx="1663.4" cy="838.4" r="4.6" fill="#83047d" fill-opacity="0.75"/>
<circle cx="1656.9" cy="846.5" r="4.6" fill="#83047d" fill-opacity="0.75"/>
<circle cx="1654.0" cy="849.3" r="4.6" fill="#83047d" fill-opacity="0.75"/>
<circle cx="1665.1" cy="835.0" r="4.6" fill="#83047d" fill-opacity="0.75"/>
<circle cx="1640.0" cy="867.3" r="4.6" fill="#83047d" fill-opacity="0.75"/>
<circle cx="1656.9" cy="843.2" r="4.6" fill="#83047d" fill-opacity="0.75"/>
<circle cx="1648.9" cy="853.4" r="4.6" fill="#83047d" fill-opacity="0.75"/>
<circle cx="1638.5" cy="866.0" r="4.6" fill="#83047d" fill-opacity="0.75"/>
<circle cx="1644.7" cy="855.3" r="4.6" fill="#83037d" fill-opacity="0.75"/>
<circle cx="1629.0" cy="877.3" r="4.6" fill="#83037d" fill-opacity="0.75"/>
<circle cx="1630.4" cy="874.9" r="4.6" fill="#83037d" fill-opacity="0.75"/>
<circle cx="1665.9" cy="823.0" r="4.6" fill="#82037d" fill-opacity="0.75"/>
<circle cx="1656.3" cy="835.0" r="4.6" fill="#82037e" fill-opacity="0.75"/>
<circle cx="1686.9" cy="789.4" r="4.6" fill="#82037e" fill-opacity="0.75"/>
<circle cx="1634.2" cy="864.3" r="4.6" fill="#82037e" fill-opacity="0.75"/>
<circle cx="1645.1" cy="845.1" r="4.6" fill="#82037e" fill-opacity="0.75"/>
<circle cx="1621.6" cy="881.3" r="4.6" fill="#82037e" fill-opacity="0.75"/>
<circle cx="1616.0" cy="890.3" r="4.6" fill="#82027e" fill-opacity="0.75"/>
<circle cx="1650.2" cy="824.8" r="4.6" fill="#82027e" fill-opacity="0.75"/>
<circle cx="1624.0" cy="873.0" r="4.6" fill="#82027e" fill-opacity="0.75"/>
<circle cx="1639.0" cy="844.2" r="4.6" fill="#82027e" fill-opacity="0.75"/>
<circle cx="1636.8" cy="845.3" r="4.6" fill="#82027e" fill-opacity="0.75"/>
<circle cx="1621.4" cy="873.7" r="4.6" fill="#81027f" fill-opacity="0.75"/>
<circle cx="1611.5" cy="893.9" r="4.6" fill="#81027f" fill-opacity="0.75"/>
<circle cx="1611.3" cy="892.5" r="4.6" fill="#81027f" fill-opacity="0.75"/>
<circle cx="1619.1" cy="874.9" r="4.6" fill="#81027f" fill-opacity="0.75"/>
<circle cx="1624.1" cy="863.5" r="4.6" fill="#81027f" fill-opacity="0.75"/>
<circle cx="1627.9" cy="854.7" r="4.6" fill="#81027f" fill-opacity="0.75"/>
<circle cx="1621.4" cy="866.9" r="4.6" fill="#81017f" fill-opacity="0.75"/>
<circle cx="1614.0" cy="882.5" r="4.6" fill="#81017f" fill-opacity="0.75"/>
<circle cx="1622.1" cy="859.3" r="4.6" fill="#81017f" fill-opacity="0.75"/>
<circle cx="1605.1" cy="900.3" r="4.6" fill="#81017f" fill-opacity="0.75"/>
<circle cx="1603.9" cy="904.1" r="4.6" fill="#81017f" fill-opacity="0.75"/>
<circle cx="1616.5" cy="863.5" r="4.6" fill="#800180" fill-opacity="0.75"/>
<circle cx="1630.4" cy="819.2" r="4.6" fill="#800180" fill-opacity="0.75"/>
<circle cx="1615.2" cy="865.9" r="4.6" fill="#800180" fill-opacity="0.75"/>
<circle cx="1607.7" cy="890.1" r="4.6" fill="#800180" fill-opacity="0.75"/>
<circle cx="1612.6" cy="867.4" r="4.6" fill="#800080" fill-opacity="0.75"/>
<circle cx="1609.7" cy="862.3" r="4.6" fill="#800080" fill-opacity="0.75"/>
</g>
<rect x="1560" y="922" width="260" height="20" fill="#fbfbfb"/>
<path d="M1598.5 684 L1598.5 921.5 L1813 921.5" fill="none" stroke="#111" stroke-width="1.5"/>
<line x1="1592.5" y1="920.8" x2="1604.5" y2="920.8" stroke="#111" stroke-width="1.2"/>
<line x1="1592.5" y1="884.9" x2="1604.5" y2="884.9" stroke="#111" stroke-width="1.2"/>
<line x1="1592.5" y1="849.1" x2="1604.5" y2="849.1" stroke="#111" stroke-width="1.2"/>
<line x1="1592.5" y1="813.2" x2="1604.5" y2="813.2" stroke="#111" stroke-width="1.2"/>
<line x1="1592.5" y1="777.3" x2="1604.5" y2="777.3" stroke="#111" stroke-width="1.2"/>
<line x1="1592.5" y1="741.5" x2="1604.5" y2="741.5" stroke="#111" stroke-width="1.2"/>
<line x1="1592.5" y1="705.6" x2="1604.5" y2="705.6" stroke="#111" stroke-width="1.2"/>
<line x1="1594.5" y1="913.6" x2="1598.5" y2="913.6" stroke="#333" stroke-width="0.9"/>
<line x1="1594.5" y1="906.5" x2="1598.5" y2="906.5" stroke="#333" stroke-width="0.9"/>
<line x1="1594.5" y1="899.3" x2="1598.5" y2="899.3" stroke="#333" stroke-width="0.9"/>
<line x1="1594.5" y1="892.1" x2="1598.5" y2="892.1" stroke="#333" stroke-width="0.9"/>
<line x1="1594.5" y1="877.8" x2="1598.5" y2="877.8" stroke="#333" stroke-width="0.9"/>
<line x1="1594.5" y1="870.6" x2="1598.5" y2="870.6" stroke="#333" stroke-width="0.9"/>
<line x1="1594.5" y1="863.4" x2="1598.5" y2="863.4" stroke="#333" stroke-width="0.9"/>
<line x1="1594.5" y1="856.2" x2="1598.5" y2="856.2" stroke="#333" stroke-width="0.9"/>
<line x1="1594.5" y1="841.9" x2="1598.5" y2="841.9" stroke="#333" stroke-width="0.9"/>
<line x1="1594.5" y1="834.7" x2="1598.5" y2="834.7" stroke="#333" stroke-width="0.9"/>
<line x1="1594.5" y1="827.5" x2="1598.5" y2="827.5" stroke="#333" stroke-width="0.9"/>
<line x1="1594.5" y1="820.4" x2="1598.5" y2="820.4" stroke="#333" stroke-width="0.9"/>
<line x1="1594.5" y1="806.0" x2="1598.5" y2="806.0" stroke="#333" stroke-width="0.9"/>
<line x1="1594.5" y1="798.9" x2="1598.5" y2="798.9" stroke="#333" stroke-width="0.9"/>
<line x1="1594.5" y1="791.7" x2="1598.5" y2="791.7" stroke="#333" stroke-width="0.9"/>
<line x1="1594.5" y1="784.5" x2="1598.5" y2="784.5" stroke="#333" stroke-width="0.9"/>
<line x1="1594.5" y1="770.2" x2="1598.5" y2="770.2" stroke="#333" stroke-width="0.9"/>
<line x1="1594.5" y1="763.0" x2="1598.5" y2="763.0" stroke="#333" stroke-width="0.9"/>
<line x1="1594.5" y1="755.8" x2="1598.5" y2="755.8" stroke="#333" stroke-width="0.9"/>
<line x1="1594.5" y1="748.6" x2="1598.5" y2="748.6" stroke="#333" stroke-width="0.9"/>
<line x1="1594.5" y1="734.3" x2="1598.5" y2="734.3" stroke="#333" stroke-width="0.9"/>
<line x1="1594.5" y1="727.1" x2="1598.5" y2="727.1" stroke="#333" stroke-width="0.9"/>
<line x1="1594.5" y1="719.9" x2="1598.5" y2="719.9" stroke="#333" stroke-width="0.9"/>
<line x1="1594.5" y1="712.8" x2="1598.5" y2="712.8" stroke="#333" stroke-width="0.9"/>
<line x1="1594.5" y1="698.4" x2="1598.5" y2="698.4" stroke="#333" stroke-width="0.9"/>
<line x1="1594.5" y1="691.3" x2="1598.5" y2="691.3" stroke="#333" stroke-width="0.9"/>
<line x1="1594.5" y1="684.1" x2="1598.5" y2="684.1" stroke="#333" stroke-width="0.9"/>
<line x1="1598.5" y1="921" x2="1598.5" y2="927" stroke="#111" stroke-width="1.2"/>
<line x1="1603.9" y1="921" x2="1603.9" y2="925" stroke="#333" stroke-width="0.9"/>
<line x1="1609.2" y1="921" x2="1609.2" y2="925" stroke="#333" stroke-width="0.9"/>
<line x1="1614.6" y1="921" x2="1614.6" y2="925" stroke="#333" stroke-width="0.9"/>
<line x1="1620.0" y1="921" x2="1620.0" y2="925" stroke="#333" stroke-width="0.9"/>
<line x1="1625.3" y1="921" x2="1625.3" y2="927" stroke="#111" stroke-width="1.2"/>
<line x1="1630.7" y1="921" x2="1630.7" y2="925" stroke="#333" stroke-width="0.9"/>
<line x1="1636.1" y1="921" x2="1636.1" y2="925" stroke="#333" stroke-width="0.9"/>
<line x1="1641.4" y1="921" x2="1641.4" y2="925" stroke="#333" stroke-width="0.9"/>
<line x1="1646.8" y1="921" x2="1646.8" y2="925" stroke="#333" stroke-width="0.9"/>
<line x1="1652.2" y1="921" x2="1652.2" y2="927" stroke="#111" stroke-width="1.2"/>
<line x1="1657.5" y1="921" x2="1657.5" y2="925" stroke="#333" stroke-width="0.9"/>
<line x1="1662.9" y1="921" x2="1662.9" y2="925" stroke="#333" stroke-width="0.9"/>
<line x1="1668.3" y1="921" x2="1668.3" y2="925" stroke="#333" stroke-width="0.9"/>
<line x1="1673.6" y1="921" x2="1673.6" y2="925" stroke="#333" stroke-width="0.9"/>
<line x1="1679.0" y1="921" x2="1679.0" y2="927" stroke="#111" stroke-width="1.2"/>
<line x1="1684.4" y1="921" x2="1684.4" y2="925" stroke="#333" stroke-width="0.9"/>
<line x1="1689.7" y1="921" x2="1689.7" y2="925" stroke="#333" stroke-width="0.9"/>
<line x1="1695.1" y1="921" x2="1695.1" y2="925" stroke="#333" stroke-width="0.9"/>
<line x1="1700.5" y1="921" x2="1700.5" y2="925" stroke="#333" stroke-width="0.9"/>
<line x1="1705.8" y1="921" x2="1705.8" y2="927" stroke="#111" stroke-width="1.2"/>
<line x1="1711.2" y1="921" x2="1711.2" y2="925" stroke="#333" stroke-width="0.9"/>
<line x1="1716.6" y1="921" x2="1716.6" y2="925" stroke="#333" stroke-width="0.9"/>
<line x1="1721.9" y1="921" x2="1721.9" y2="925" stroke="#333" stroke-width="0.9"/>
<line x1="1727.3" y1="921" x2="1727.3" y2="925" stroke="#333" stroke-width="0.9"/>
<line x1="1732.7" y1="921" x2="1732.7" y2="927" stroke="#111" stroke-width="1.2"/>
<line x1="1738.0" y1="921" x2="1738.0" y2="925" stroke="#333" stroke-width="0.9"/>
<line x1="1743.4" y1="921" x2="1743.4" y2="925" stroke="#333" stroke-width="0.9"/>
<line x1="1748.8" y1="921" x2="1748.8" y2="925" stroke="#333" stroke-width="0.9"/>
<line x1="1754.1" y1="921" x2="1754.1" y2="925" stroke="#333" stroke-width="0.9"/>
<line x1="1759.5" y1="921" x2="1759.5" y2="927" stroke="#111" stroke-width="1.2"/>
<line x1="1764.9" y1="921" x2="1764.9" y2="925" stroke="#333" stroke-width="0.9"/>
<line x1="1770.2" y1="921" x2="1770.2" y2="925" stroke="#333" stroke-width="0.9"/>
<line x1="1775.6" y1="921" x2="1775.6" y2="925" stroke="#333" stroke-width="0.9"/>
<line x1="1781.0" y1="921" x2="1781.0" y2="925" stroke="#333" stroke-width="0.9"/>
<line x1="1786.3" y1="921" x2="1786.3" y2="927" stroke="#111" stroke-width="1.2"/>
<line x1="1791.7" y1="921" x2="1791.7" y2="925" stroke="#333" stroke-width="0.9"/>
<line x1="1797.1" y1="921" x2="1797.1" y2="925" stroke="#333" stroke-width="0.9"/>
<line x1="1802.4" y1="921" x2="1802.4" y2="925" stroke="#333" stroke-width="0.9"/>
<line x1="1807.8" y1="921" x2="1807.8" y2="925" stroke="#333" stroke-width="0.9"/>
<rect x="1823" y="901.2" width="25" height="11.4" fill="#800080"/>
<rect x="1823" y="890.4" width="25" height="11.4" fill="#870979"/>
<rect x="1823" y="879.6" width="25" height="11.4" fill="#8d1173"/>
<rect x="1823" y="868.8" width="25" height="11.4" fill="#941a6c"/>
<rect x="1823" y="858.0" width="25" height="11.4" fill="#9b2365"/>
<rect x="1823" y="847.2" width="25" height="11.4" fill="#a12b5e"/>
<rect x="1823" y="836.4" width="25" height="11.4" fill="#a83458"/>
<rect x="1823" y="825.6" width="25" height="11.4" fill="#af3d51"/>
<rect x="1823" y="814.8" width="25" height="11.4" fill="#b5454a"/>
<rect x="1823" y="804.0" width="25" height="11.4" fill="#bc4e43"/>
<rect x="1823" y="793.2" width="25" height="11.4" fill="#c3573d"/>
<rect x="1823" y="782.4" width="25" height="11.4" fill="#ca6036"/>
<rect x="1823" y="771.6" width="25" height="11.4" fill="#d0682f"/>
<rect x="1823" y="760.8" width="25" height="11.4" fill="#d77128"/>
<rect x="1823" y="750.0" width="25" height="11.4" fill="#de7a22"/>
<rect x="1823" y="739.2" width="25" height="11.4" fill="#e4821b"/>
<rect x="1823" y="728.4" width="25" height="11.4" fill="#eb8b14"/>
<rect x="1823" y="717.6" width="25" height="11.4" fill="#f2940d"/>
<rect x="1823" y="706.8" width="25" height="11.4" fill="#f89c07"/>
<rect x="1823" y="696.0" width="25" height="11.4" fill="#ffa500"/>
<rect x="1883" y="686" width="1" height="235" fill="#e4e4e4"/>
<rect x="1813" y="921" width="71" height="1" fill="#e4e4e4"/>
<rect x="1883" y="686" width="2" height="29" fill="#29a0e0"/><rect x="1883" y="776" width="2" height="30" fill="#29a0e0"/>
<g stroke="#a8a8a8" stroke-width="1.2" fill="none">
 <path d="M1899 693 L1899 707 M1892 700 L1906 700 M1896.5 695.5 L1899 693 L1901.5 695.5 M1896.5 704.5 L1899 707 L1901.5 704.5 M1894.5 697.5 L1892 700 L1894.5 702.5 M1903.5 697.5 L1906 700 L1903.5 702.5"/>
 <path d="M1893 716 L1905 716 M1893 746 L1905 746 M1893 777 L1905 777 M1893 808 L1905 808 M1893 838 L1905 838 M1893 869 L1905 869" stroke="#d0d0d0"/>
 <ellipse cx="1899.5" cy="728.5" rx="6.5" ry="4.5"/><path d="M1895 732 L1894 737"/>
 <rect x="1893.5" y="755.5" width="12" height="11" stroke-dasharray="2 1.5"/>
 <ellipse cx="1895.5" cy="792" rx="2.8" ry="4.5"/><circle cx="1903" cy="790" r="3.5"/><path d="M1901 793 L1899.5 798"/>
 <path d="M1897 820 L1905 827 L1901 827.5 L1899 831 Z"/>
 <path d="M1893 818 L1895 820 M1892 823 L1895 823 M1896 815 L1897 818 M1900 815 L1899.5 818"/>
 <path d="M1905 850 A6 6 0 0 0 1894 852 M1893 858 A6 6 0 0 0 1904 856"/>
 <path d="M1905 847 L1905 851 L1901 851 M1893 861 L1893 857 L1897 857"/>
 <rect x="1893" y="879" width="12" height="9" rx="2"/>
 <path d="M1897 888 L1899 891 L1901 888 M1896 882 L1902 882 M1896 885 L1901 885"/>
</g>
</svg>
<div class="t" style="left:1560px;top:914.3px;width:30.5px;text-align:right;font-size:12px;color:#111">0</div>
<div class="t" style="left:1560px;top:878.4px;width:30.5px;text-align:right;font-size:12px;color:#111">100</div>
<div class="t" style="left:1560px;top:842.6px;width:30.5px;text-align:right;font-size:12px;color:#111">200</div>
<div class="t" style="left:1560px;top:806.7px;width:30.5px;text-align:right;font-size:12px;color:#111">300</div>
<div class="t" style="left:1560px;top:770.8px;width:30.5px;text-align:right;font-size:12px;color:#111">400</div>
<div class="t" style="left:1560px;top:735.0px;width:30.5px;text-align:right;font-size:12px;color:#111">500</div>
<div class="t" style="left:1560px;top:699.1px;width:30.5px;text-align:right;font-size:12px;color:#111">600</div>
<div class="t" style="left:1583.5px;top:932px;width:30px;text-align:center;font-size:11px;color:#111">0</div>
<div class="t" style="left:1610.3px;top:932px;width:30px;text-align:center;font-size:11px;color:#111">100</div>
<div class="t" style="left:1637.2px;top:932px;width:30px;text-align:center;font-size:11px;color:#111">200</div>
<div class="t" style="left:1664.0px;top:932px;width:30px;text-align:center;font-size:11px;color:#111">300</div>
<div class="t" style="left:1690.8px;top:932px;width:30px;text-align:center;font-size:11px;color:#111">400</div>
<div class="t" style="left:1717.7px;top:932px;width:30px;text-align:center;font-size:11px;color:#111">500</div>
<div class="t" style="left:1744.5px;top:932px;width:30px;text-align:center;font-size:11px;color:#111">600</div>
<div class="t" style="left:1771.3px;top:932px;width:30px;text-align:center;font-size:11px;color:#111">700</div>
<div class="t" style="left:1858px;top:703.0px;font-size:11px;color:#111">30</div>
<div class="t" style="left:1858px;top:737.2px;font-size:11px;color:#111">25</div>
<div class="t" style="left:1858px;top:771.4px;font-size:11px;color:#111">20</div>
<div class="t" style="left:1858px;top:805.6px;font-size:11px;color:#111">15</div>
<div class="t" style="left:1858px;top:839.8px;font-size:11px;color:#111">10</div>
<div class="t" style="left:1858px;top:874.0px;font-size:11px;color:#111">5</div>
<div class="t" style="left:1641px;top:951px;font-size:12px;color:#111;letter-spacing:0.65px">Nuc_FL Int (Avg) [AU]</div>
<div class="t" style="left:1494px;top:806px;width:120px;text-align:center;font-size:12px;color:#111;letter-spacing:0.7px;transform:rotate(-90deg);transform-origin:60px 6px">Cyto_FL Int (Avg) [AU]</div>
<div class="t" style="left:1709px;top:655px;font-size:10px;color:#333">N</div>
<div class="t" style="left:1778px;top:655px;font-size:10px;color:#333">C</div>
<div class="t" style="left:1848px;top:655px;font-size:10px;color:#333">N</div>
<div class="t" style="left:1696px;top:657px;font-size:15px;color:#111">x</div>
<div class="t" style="left:1755px;top:644px;font-size:15px;color:#111">y</div>
<div class="t" style="left:1830px;top:643px;font-size:15px;color:#111">z</div>
<div class="a" style="left:0;top:0;width:1914px;height:968px;border:1px solid #bdbdbd;border-radius:8px;pointer-events:none"></div>

</body></html>
